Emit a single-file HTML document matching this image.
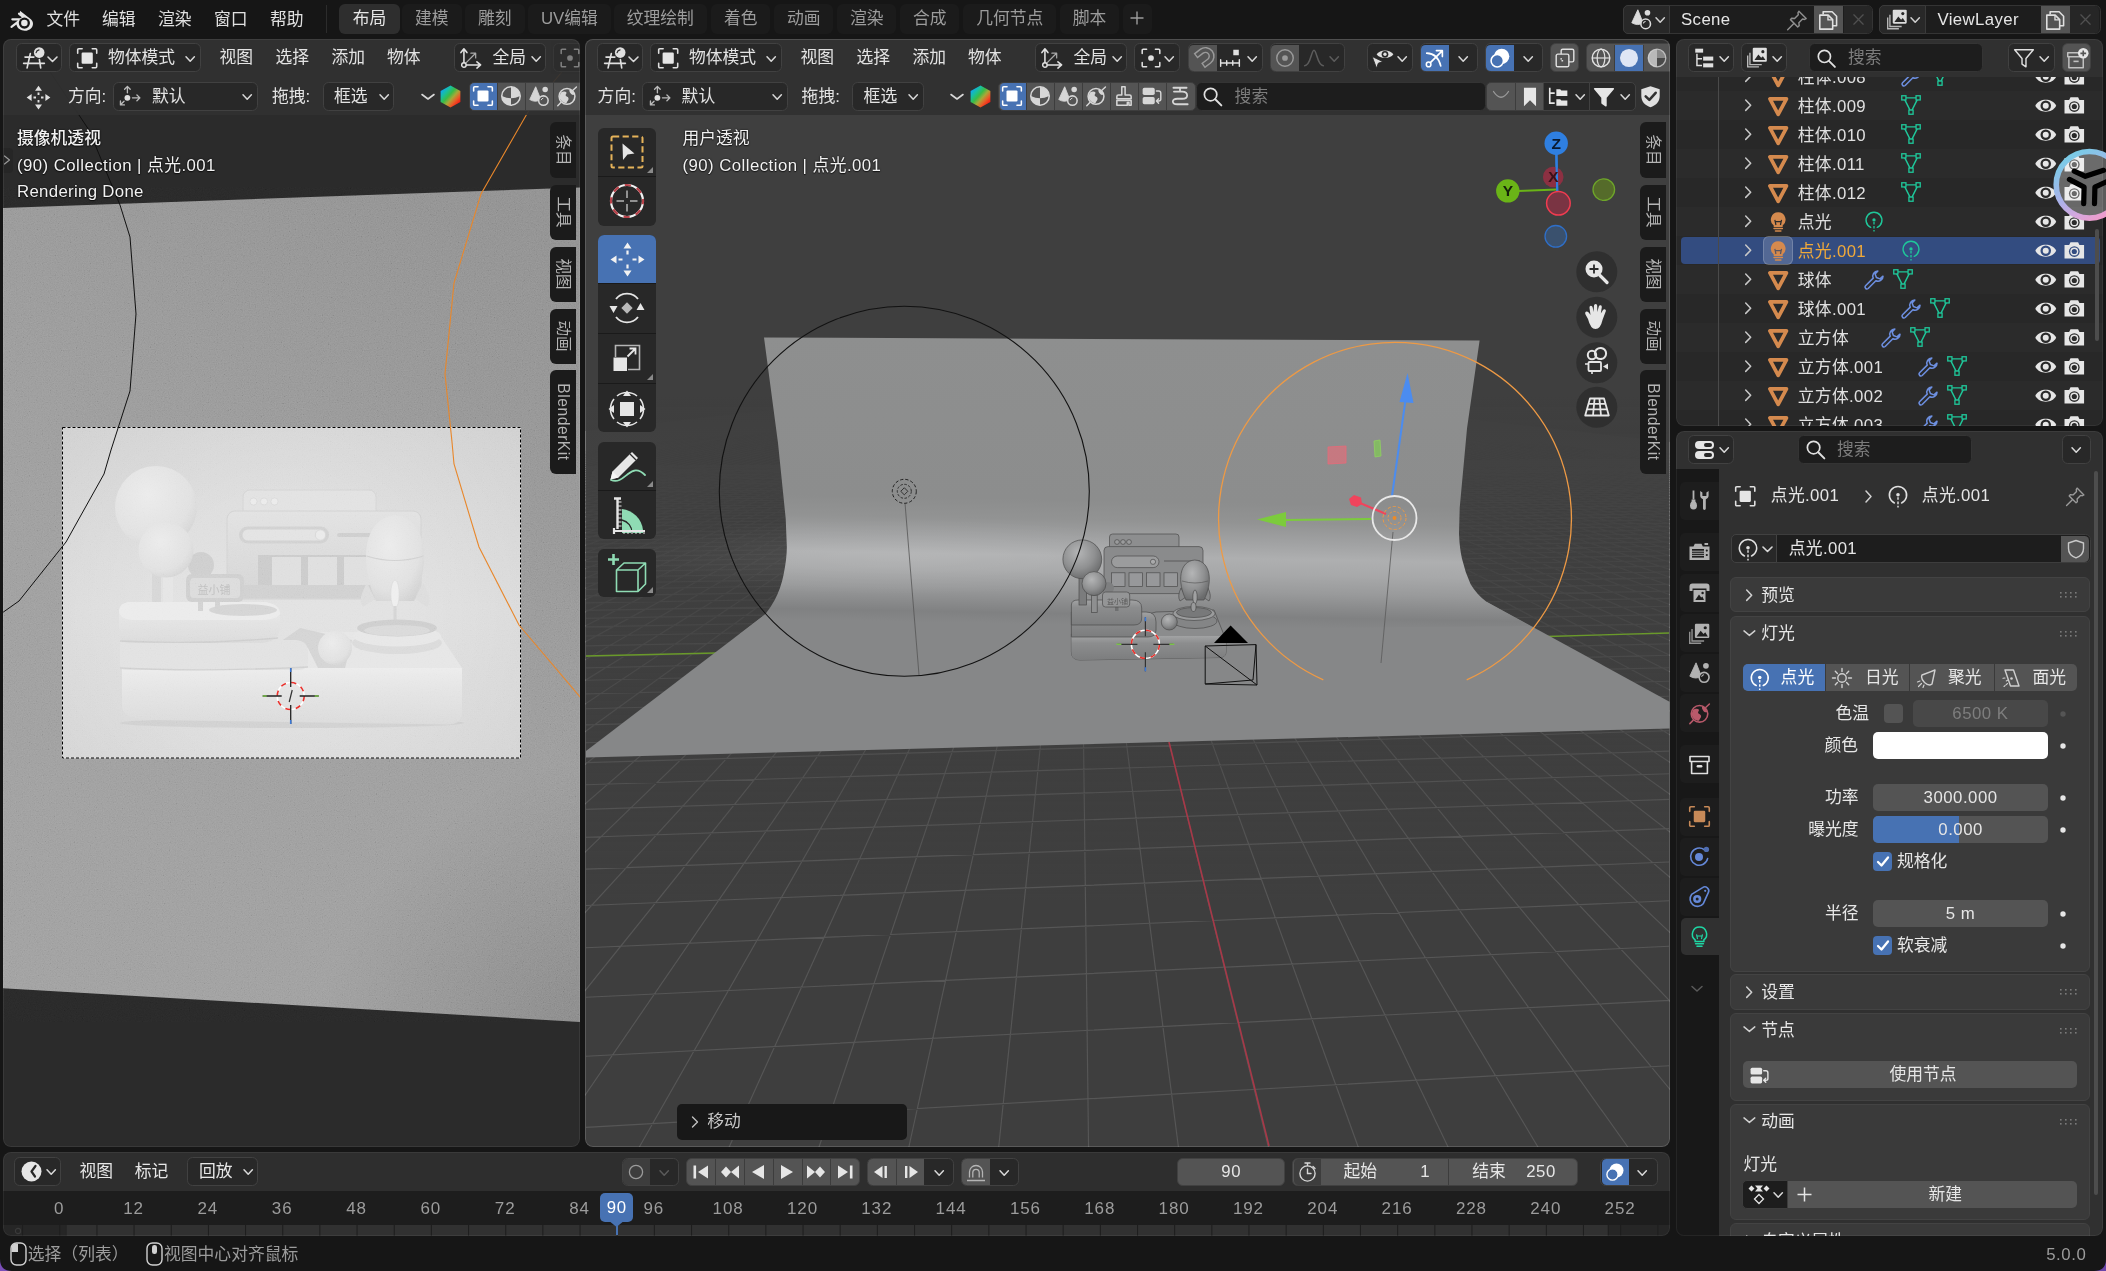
<!DOCTYPE html><html><head><meta charset="utf-8"><title>Blender</title><style>html,body{margin:0;padding:0;background:#161616;}
#root{position:relative;width:2106px;height:1271px;overflow:hidden;background:#161616;font-family:"Liberation Sans","Noto Sans CJK SC",sans-serif;}
#root div,#root span.t,#root svg{position:absolute;}
#root div{box-sizing:border-box;}
span.t{white-space:nowrap;}
#root{will-change:transform;}
svg{overflow:visible;}
</style></head><body><div id="root">
<svg style="left:7.5px;top:7.5px;" width="26" height="26" viewBox="0 0 20 20"><path d="M9.2 2.2 L17.6 8.6 C19.6 10.3 19.8 13.2 18 15.3 C15.8 17.8 11.6 18.2 8.8 16.2 C7.5 15.3 6.7 14 6.5 12.6 L3.2 15.2 C2.4 15.8 1.2 14.8 2.2 13.9 L7.6 9.6 L3.4 9.6 C2.2 9.6 2.2 7.9 3.4 7.9 L9.6 7.9 L10.6 7.1 L8 5.1 C7 4.3 8.2 3 9.2 3.8 Z" fill="#e6e6e6"/><circle cx="12.6" cy="11.6" r="4.3" fill="#161616"/><circle cx="12.6" cy="11.6" r="2.5" fill="#e6e6e6"/></svg>
<span class="t" style="left:46.5px;top:8.0px;line-height:24px;font-size:16.8px;color:#e0e0e0;">文件</span>
<span class="t" style="left:102px;top:8.0px;line-height:24px;font-size:16.8px;color:#e0e0e0;">编辑</span>
<span class="t" style="left:158px;top:8.0px;line-height:24px;font-size:16.8px;color:#e0e0e0;">渲染</span>
<span class="t" style="left:214px;top:8.0px;line-height:24px;font-size:16.8px;color:#e0e0e0;">窗口</span>
<span class="t" style="left:270px;top:8.0px;line-height:24px;font-size:16.8px;color:#e0e0e0;">帮助</span>
<div style="left:326.00px;top:5.00px;width:1.00px;height:28.00px;background:#2c2c2c;"></div>
<div style="left:339.00px;top:4.00px;width:61.00px;height:29.50px;background:#2e2e2e;border-radius:6px;"></div>
<span class="t" style="left:339px;width:61px;text-align:center;top:7.0px;line-height:24px;font-size:16.8px;color:#e6e6e6;">布局</span>
<div style="left:401.50px;top:4.00px;width:60.50px;height:29.50px;background:#1b1b1b;border-radius:6px 6px 6px 6px;"></div>
<span class="t" style="left:401.5px;width:60.5px;text-align:center;top:7.0px;line-height:24px;font-size:16.8px;color:#9c9c9c;">建模</span>
<div style="left:464.50px;top:4.00px;width:60.50px;height:29.50px;background:#1b1b1b;border-radius:6px 6px 6px 6px;"></div>
<span class="t" style="left:464.5px;width:60.5px;text-align:center;top:7.0px;line-height:24px;font-size:16.8px;color:#9c9c9c;">雕刻</span>
<div style="left:528.20px;top:4.00px;width:82.50px;height:29.50px;background:#1b1b1b;border-radius:6px 6px 6px 6px;"></div>
<span class="t" style="left:528.2px;width:82.5px;text-align:center;top:7.0px;line-height:24px;font-size:16.8px;color:#9c9c9c;">UV编辑</span>
<div style="left:613.80px;top:4.00px;width:93.00px;height:29.50px;background:#1b1b1b;border-radius:6px 6px 6px 6px;"></div>
<span class="t" style="left:613.8px;width:93.0px;text-align:center;top:7.0px;line-height:24px;font-size:16.8px;color:#9c9c9c;">纹理绘制</span>
<div style="left:711.30px;top:4.00px;width:59.00px;height:29.50px;background:#1b1b1b;border-radius:6px 6px 6px 6px;"></div>
<span class="t" style="left:711.3px;width:59.0px;text-align:center;top:7.0px;line-height:24px;font-size:16.8px;color:#9c9c9c;">着色</span>
<div style="left:774.30px;top:4.00px;width:59.00px;height:29.50px;background:#1b1b1b;border-radius:6px 6px 6px 6px;"></div>
<span class="t" style="left:774.3px;width:59.0px;text-align:center;top:7.0px;line-height:24px;font-size:16.8px;color:#9c9c9c;">动画</span>
<div style="left:837.30px;top:4.00px;width:59.00px;height:29.50px;background:#1b1b1b;border-radius:6px 6px 6px 6px;"></div>
<span class="t" style="left:837.3px;width:59.0px;text-align:center;top:7.0px;line-height:24px;font-size:16.8px;color:#9c9c9c;">渲染</span>
<div style="left:900.30px;top:4.00px;width:59.00px;height:29.50px;background:#1b1b1b;border-radius:6px 6px 6px 6px;"></div>
<span class="t" style="left:900.3px;width:59.0px;text-align:center;top:7.0px;line-height:24px;font-size:16.8px;color:#9c9c9c;">合成</span>
<div style="left:963.30px;top:4.00px;width:93.00px;height:29.50px;background:#1b1b1b;border-radius:6px 6px 6px 6px;"></div>
<span class="t" style="left:963.3px;width:93.0px;text-align:center;top:7.0px;line-height:24px;font-size:16.8px;color:#9c9c9c;">几何节点</span>
<div style="left:1060.00px;top:4.00px;width:59.00px;height:29.50px;background:#1b1b1b;border-radius:6px 6px 6px 6px;"></div>
<span class="t" style="left:1060px;width:59.0px;text-align:center;top:7.0px;line-height:24px;font-size:16.8px;color:#9c9c9c;">脚本</span>
<div style="left:1122.50px;top:4.00px;width:29.00px;height:29.50px;background:#1b1b1b;border-radius:6px;"></div>
<svg style="left:1130px;top:11px;" width="14" height="14" viewBox="0 0 14 14"><path d="M7 0.5 V13.5 M0.5 7 H13.5" stroke="#9c9c9c" stroke-width="1.4"/></svg>
<div style="left:1623.30px;top:4.80px;width:250.10px;height:29.40px;background:#1d1d1d;border-radius:5.7px;border:1px solid #343434;"></div>
<div style="left:1623.30px;top:4.80px;width:46.90px;height:29.40px;background:#282828;border-radius:5px 0 0 5px;border:1px solid #3a3a3a;"></div>
<svg style="left:1629.8px;top:8.3px;" width="22.4" height="22.4" viewBox="0 0 20 20"><path d="M7 1.6 L11.6 13.2 Q7 16.4 1.6 13.2 Z" fill="#dcdcdc" stroke="#dcdcdc" stroke-width="0.8" stroke-linejoin="round"/><circle cx="15.6" cy="4.2" r="2.5" fill="#dcdcdc"/><circle cx="14" cy="14.2" r="4.3" fill="#282828" stroke="#dcdcdc" stroke-width="1.4"/><path d="M12 13.4 A2.2 2.2 0 0 1 13.6 12" stroke="#dcdcdc" stroke-width="0.9" fill="none" stroke-linecap="round"/></svg>
<svg style="left:1654.8px;top:16.3px;" width="10.4" height="8.4" viewBox="0 0 10.4 8.4"><path d="M1 1.7000000000000002 L5.2 6.2 L9.4 1.7000000000000002" fill="none" stroke="#d0d0d0" stroke-width="1.5" stroke-linecap="round" stroke-linejoin="round"/></svg>
<span class="t" style="left:1681px;top:7.5px;line-height:24px;font-size:16.8px;color:#e6e6e6;letter-spacing:0.4px;">Scene</span>
<svg style="left:1786.3px;top:8.8px;" width="22.4" height="22.4" viewBox="0 0 20 20"><path d="M11.5 2 L18 8.5 L16.5 9.3 L14.8 9 L11.5 12.3 L11.8 15 L10.5 16 L4 9.5 L5 8.2 L7.7 8.5 L11 5.2 L10.7 3.5 Z" fill="none" stroke="#8f8f8f" stroke-width="1.3" stroke-linejoin="round"/><path d="M7 13 L1.5 18.5" stroke="#8f8f8f" stroke-width="1.3" stroke-linecap="round"/></svg>
<div style="left:1814.30px;top:6.00px;width:28.40px;height:27.00px;background:#545454;"></div>
<svg style="left:1817.3px;top:8.8px;" width="22.4" height="22.4" viewBox="0 0 20 20"><path d="M5.5 5 V2.5 H13.5 L17.5 6.5 V15 H14" stroke="#e0e0e0" stroke-width="1.4" fill="none" stroke-linejoin="round"/><path d="M2.5 5.5 H10 L14 9.5 V18 H2.5 Z" fill="none" stroke="#e0e0e0" stroke-width="1.4" stroke-linejoin="round"/><path d="M9.8 5.5 V9.7 H14" stroke="#e0e0e0" stroke-width="1.2" fill="none"/></svg>
<div style="left:1843.50px;top:6.00px;width:28.70px;height:27.00px;background:#262626;border-radius:0 4.5px 4.5px 0;"></div>
<svg style="left:1849.5px;top:11px;" width="17" height="17" viewBox="0 0 20 20"><path d="M4.5 4.5 L15.5 15.5 M15.5 4.5 L4.5 15.5" stroke="#505050" stroke-width="1.5" stroke-linecap="round"/></svg>
<div style="left:1879.30px;top:4.80px;width:221.40px;height:29.40px;background:#1d1d1d;border-radius:5.7px;border:1px solid #343434;"></div>
<div style="left:1879.30px;top:4.80px;width:46.90px;height:29.40px;background:#282828;border-radius:5px 0 0 5px;border:1px solid #3a3a3a;"></div>
<svg style="left:1885.8px;top:7.8px;" width="22.4" height="22.4" viewBox="0 0 20 20"><path d="M3.5 6 V16.5 H14 M1.5 8.5 V18.5 H11.5" stroke="#dcdcdc" stroke-width="1.2" fill="none" opacity="0.8"/><rect x="6" y="1.5" width="12.5" height="12.5" rx="1" fill="#dcdcdc"/><path d="M7.5 12.5 L11 7.5 L13.5 10.5 L15 9 L17.3 12.5 Z" fill="#282828"/><circle cx="15" cy="5" r="1.4" fill="#282828"/></svg>
<svg style="left:1910.3px;top:16.3px;" width="10.4" height="8.4" viewBox="0 0 10.4 8.4"><path d="M1 1.7000000000000002 L5.2 6.2 L9.4 1.7000000000000002" fill="none" stroke="#d0d0d0" stroke-width="1.5" stroke-linecap="round" stroke-linejoin="round"/></svg>
<span class="t" style="left:1937.4px;top:7.5px;line-height:24px;font-size:16.8px;color:#e6e6e6;letter-spacing:0.4px;">ViewLayer</span>
<div style="left:2041.00px;top:6.00px;width:28.60px;height:27.00px;background:#545454;"></div>
<svg style="left:2044.3px;top:8.8px;" width="22.4" height="22.4" viewBox="0 0 20 20"><path d="M5.5 5 V2.5 H13.5 L17.5 6.5 V15 H14" stroke="#e0e0e0" stroke-width="1.4" fill="none" stroke-linejoin="round"/><path d="M2.5 5.5 H10 L14 9.5 V18 H2.5 Z" fill="none" stroke="#e0e0e0" stroke-width="1.4" stroke-linejoin="round"/><path d="M9.8 5.5 V9.7 H14" stroke="#e0e0e0" stroke-width="1.2" fill="none"/></svg>
<div style="left:2070.40px;top:6.00px;width:29.10px;height:27.00px;background:#262626;border-radius:0 4.5px 4.5px 0;"></div>
<svg style="left:2076.5px;top:11px;" width="17" height="17" viewBox="0 0 20 20"><path d="M4.5 4.5 L15.5 15.5 M15.5 4.5 L4.5 15.5" stroke="#505050" stroke-width="1.5" stroke-linecap="round"/></svg>
<div style="left:3px;top:39px;width:577.1px;height:1108px;background:#2b2b2b;border-radius:8px;overflow:hidden;">
<svg style="left:-3px;top:-39px" width="2106" height="1271" viewBox="0 0 2106 1271"><defs><linearGradient id="lvg" gradientUnits="userSpaceOnUse" x1="20" y1="1000" x2="560" y2="230"><stop offset="0" stop-color="#a4a4a4"/><stop offset="0.45" stop-color="#a2a2a2"/><stop offset="0.75" stop-color="#9b9b9b"/><stop offset="1" stop-color="#959595"/></linearGradient><radialGradient id="lvd" gradientUnits="userSpaceOnUse" cx="640" cy="1080" r="330"><stop offset="0" stop-color="#000" stop-opacity="0.16"/><stop offset="1" stop-color="#000" stop-opacity="0"/></radialGradient><linearGradient id="lvf" x1="0" y1="0" x2="0" y2="1"><stop offset="0" stop-color="#dcdcdc"/><stop offset="0.55" stop-color="#e3e3e3"/><stop offset="1" stop-color="#dfdfdf"/></linearGradient><radialGradient id="sph" cx="0.4" cy="0.35" r="0.75"><stop offset="0" stop-color="#ececec"/><stop offset="0.7" stop-color="#e2e2e2"/><stop offset="1" stop-color="#d2d2d2"/></radialGradient><linearGradient id="plat" x1="0" y1="0" x2="0" y2="1"><stop offset="0" stop-color="#ededed"/><stop offset="0.35" stop-color="#e6e6e6"/><stop offset="1" stop-color="#dcdcdc"/></linearGradient><linearGradient id="win" x1="0" y1="0" x2="0" y2="1"><stop offset="0" stop-color="#e3e3e3"/><stop offset="1" stop-color="#d6d6d6"/></linearGradient></defs><polygon points="0,208 581,187.5 581,1022 0,988" fill="url(#lvg)"/><polygon points="0,208 581,187.5 581,1022 0,988" fill="url(#lvd)"/><rect x="62.5" y="427.5" width="458" height="330.5" fill="url(#lvf)"/><defs><radialGradient id="vig" gradientUnits="userSpaceOnUse" cx="285" cy="610" r="330"><stop offset="0.35" stop-color="#000" stop-opacity="0"/><stop offset="1" stop-color="#000" stop-opacity="0.055"/></radialGradient></defs><rect x="62.5" y="427.5" width="458" height="330.5" fill="url(#vig)"/><g><ellipse cx="292" cy="723" rx="172" ry="5" fill="#d0d0d0" opacity="0.8"/><rect x="243" y="490" width="133" height="40" rx="7" fill="#e3e3e3" stroke="#d6d6d6" stroke-width="1"/><circle cx="253.5" cy="501.5" r="3.6" fill="#ececec" stroke="#d9d9d9" stroke-width="0.8"/><circle cx="264" cy="501.5" r="3.6" fill="#ececec" stroke="#d9d9d9" stroke-width="0.8"/><circle cx="274.5" cy="501.5" r="3.6" fill="#ececec" stroke="#d9d9d9" stroke-width="0.8"/><rect x="227" y="511" width="194" height="88" rx="8" fill="url(#win)" stroke="#d4d4d4" stroke-width="1"/><rect x="239" y="526.5" width="90" height="17" rx="8.5" fill="#d3d3d3"/><rect x="242.5" y="529.5" width="83" height="11" rx="5.5" fill="#e4e4e4"/><circle cx="320.5" cy="535" r="5.2" fill="#ebebeb" stroke="#d6d6d6" stroke-width="0.8"/><rect x="337" y="533" width="60" height="4" rx="2" fill="#d0d0d0"/><rect x="258" y="555" width="120" height="32" fill="#cdcdcd"/><rect x="272" y="557" width="29" height="29" fill="#e0e0e0"/><rect x="308" y="557" width="29" height="29" fill="#e0e0e0"/><rect x="344" y="557" width="29" height="29" fill="#e0e0e0"/><rect x="236" y="585" width="180" height="13" fill="#d2d2d2"/><circle cx="201" cy="565" r="13" fill="#d0d0d0"/><rect x="152" y="572" width="9" height="32" fill="#d8d8d8"/><rect x="163" y="575" width="10" height="39" rx="3" fill="#e6e6e6"/><circle cx="156" cy="507" r="41" fill="url(#sph)"/><circle cx="166" cy="550" r="27.5" fill="url(#sph)"/><path d="M300 632 H438 L462 668 H300 Z" fill="#e7e7e7"/><path d="M122 668 H462 V712 Q462 724 448 724.5 L150 720 Q122 719 122 706 Z" fill="url(#plat)"/><path d="M280 642 L308 648 L318 668 L345 668 L352 640 L300 628 Z" fill="#d2d2d2" opacity="0.85"/><path d="M120 640 H296 Q308 641 308 652 V662 Q308 670 298 670 H126 Q120 670 120 664 Z" fill="#e3e3e3"/><path d="M120 668 Q200 672 308 667" stroke="#d2d2d2" stroke-width="1.3" fill="none"/><path d="M119 612 Q119 602 132 602 H262 Q280 603 280 616 V628 Q278 643 260 643 H130 Q119 643 119 634 Z" fill="url(#plat)"/><path d="M119 612 Q119 602 132 602 H262 Q280 603 280 614 Q276 620 258 620 H135 Q121 620 119 612 Z" fill="#ececec"/><path d="M120 641 Q200 645 278 638" stroke="#d0d0d0" stroke-width="1.3" fill="none"/><ellipse cx="243" cy="610" rx="34" ry="6" fill="#d6d6d6"/><rect x="198" y="600" width="5" height="11" fill="#d4d4d4"/><rect x="215" y="600" width="5" height="13" fill="#d4d4d4"/><rect x="186" y="574" width="58" height="28" rx="6" fill="#d1d1d1"/><rect x="190" y="578" width="50" height="20" rx="4" fill="#dddddd"/><text x="197.5" y="594" font-size="11" fill="#c2c2c2" font-family='"Liberation Sans","Noto Sans CJK SC",sans-serif'>益小铺</text><path d="M367 583 Q357 600 363 607 L375 599 Z" fill="#dedede"/><path d="M423 583 Q433 600 427 607 L415 599 Z" fill="#dedede"/><path d="M395 515 C426 518 432 560 414 601 L376 601 C358 560 364 518 395 515 Z" fill="url(#sph)"/><path d="M366.5 556 Q395 565 423.5 556" stroke="#d2d2d2" stroke-width="1.2" fill="none"/><ellipse cx="395" cy="594" rx="4.2" ry="14" fill="#efefef" stroke="#dadada" stroke-width="0.7"/><rect x="393.5" y="606" width="3" height="18" fill="#d6d6d6"/><ellipse cx="397" cy="643" rx="45" ry="11" fill="#dcdcdc"/><ellipse cx="397" cy="636" rx="44" ry="10.5" fill="#e8e8e8"/><ellipse cx="397" cy="628" rx="40" ry="8.5" fill="#d0d0d0"/><ellipse cx="397" cy="630.5" rx="33" ry="5.5" fill="#dbdbdb"/><circle cx="335" cy="648" r="17" fill="url(#sph)"/></g><defs><filter id="grain" x="0" y="0" width="100%" height="100%"><feTurbulence type="fractalNoise" baseFrequency="0.85" numOctaves="2" seed="7" result="n"/><feColorMatrix type="matrix" values="0.33 0.33 0.33 0 -0.28  0.33 0.33 0.33 0 -0.28  0.33 0.33 0.33 0 -0.28  0 0 0 0 1"/></filter></defs><polygon points="0,208 581,187.5 581,1022 0,988" filter="url(#grain)" opacity="0.16" style="mix-blend-mode:overlay"/><rect x="62.5" y="427.5" width="458" height="330.5" fill="none" stroke="#ffffff" stroke-width="1" opacity="0.5"/><rect x="62.5" y="427.5" width="458" height="330.5" fill="none" stroke="#000" stroke-width="1" stroke-dasharray="3 2"/><path d="M28 39 L89 130 L120 205 L130 237 L136 314 L130 391 L111 450 L104 474 L66 542 L19 601 L2 613" fill="none" stroke="#111" stroke-width="1"/><path d="M575 52 L561 73 L528 112 L481 194 L454 283 L445 374 L452 442 L454 464 L479 547 L519 625 L581 698" fill="none" stroke="#e8872b" stroke-width="1.1"/><g><circle cx="290.7" cy="696" r="13.5" fill="none" stroke="#fff" stroke-width="1.6"/><circle cx="290.7" cy="696" r="13.5" fill="none" stroke="#e8302b" stroke-width="1.6" stroke-dasharray="5.3 5.3"/><path d="M262.7 696 H281.7 M299.7 696 H318.7 M290.7 668 V687 M290.7 705 V724" stroke="#222" stroke-width="1.3"/><path d="M262.7 696 h4 M314.7 696 h4" stroke="#7bc24a" stroke-width="1.5"/><path d="M290.7 668 v4 M290.7 720 v4" stroke="#3b78d6" stroke-width="1.5"/><path d="M292.2 690 L289.2 702" stroke="#333" stroke-width="1.2"/></g></svg>
<div style="left:0;top:0;width:577.1px;height:75.6px;background:rgba(48,48,48,0.93);"></div>
<div style="left:-3px;top:-39px;width:0;height:0">
<div style="left:15.90px;top:43.30px;width:45.90px;height:28.90px;background:#282828;border-radius:5.7px;border:1px solid #414141;"></div>
<svg style="left:23px;top:47px;" width="22" height="22" viewBox="0 0 20 20"><path d="M1.82 9.18 L9.91 9.18 M0.55 14.82 L19.45 14.82 M6.64 6.00 L3.73 19.00 M14.91 11.45 L16.09 19.00" stroke="#e0e0e0" stroke-width="1.5" fill="none" stroke-linecap="round"/><circle cx="14.73" cy="5.09" r="4.82" fill="#e0e0e0"/><path d="M11.91 5.18 Q12.36 3.09 14.55 2.64" stroke="#2b2b2b" stroke-width="1.1" fill="none" stroke-linecap="round"/></svg>
<svg style="left:46.9px;top:54.5px;" width="11.0" height="9.0" viewBox="0 0 11.0 9.0"><path d="M1 2.0 L5.5 6.5 L10.0 2.0" fill="none" stroke="#d8d8d8" stroke-width="1.6" stroke-linecap="round" stroke-linejoin="round"/></svg>
<div style="left:68.80px;top:43.30px;width:132.40px;height:28.90px;background:#282828;border-radius:5.7px;border:1px solid #414141;"></div>
<svg style="left:75.8px;top:46.8px;" width="22.4" height="22.4" viewBox="0 0 20 20"><path d="M1.5 5.5 V2.5 Q1.5 1.5 2.5 1.5 H5.5 M14.5 1.5 H17.5 Q18.5 1.5 18.5 2.5 V5.5 M18.5 14.5 V17.5 Q18.5 18.5 17.5 18.5 H14.5 M5.5 18.5 H2.5 Q1.5 18.5 1.5 17.5 V14.5" stroke="#e0e0e0" stroke-width="1.4" fill="none" stroke-linecap="round"/><rect x="5" y="5" width="10" height="10" rx="1" fill="#e6e6e6"/></svg>
<span class="t" style="left:108px;top:46.0px;line-height:24px;font-size:16.8px;color:#e3e3e3;">物体模式</span>
<svg style="left:185.3px;top:54.8px;" width="10.4" height="8.4" viewBox="0 0 10.4 8.4"><path d="M1 1.7000000000000002 L5.2 6.2 L9.4 1.7000000000000002" fill="none" stroke="#d8d8d8" stroke-width="1.5" stroke-linecap="round" stroke-linejoin="round"/></svg>
<span class="t" style="left:219.5px;top:46.0px;line-height:24px;font-size:16.8px;color:#e3e3e3;">视图</span>
<span class="t" style="left:275.5px;top:46.0px;line-height:24px;font-size:16.8px;color:#e3e3e3;">选择</span>
<span class="t" style="left:331.5px;top:46.0px;line-height:24px;font-size:16.8px;color:#e3e3e3;">添加</span>
<span class="t" style="left:387px;top:46.0px;line-height:24px;font-size:16.8px;color:#e3e3e3;">物体</span>
<div style="left:453.80px;top:43.30px;width:92.40px;height:28.90px;background:#282828;border-radius:5.7px;border:1px solid #414141;"></div>
<svg style="left:459.3px;top:46.8px;" width="22.4" height="22.4" viewBox="0 0 20 20"><circle cx="4.4" cy="16" r="2" fill="none" stroke="#e0e0e0" stroke-width="1.3"/><path d="M4.4 13.8 V2 M1.7 5 L4.4 1.6 L7.1 5 M6.6 16 H19 M16 13.2 L19.3 16 L16 18.8" stroke="#e0e0e0" stroke-width="1.4" fill="none" stroke-linecap="round" stroke-linejoin="round"/><path d="M6 14.4 L14.6 5.8 M10.6 5.5 H14.9 V9.8" stroke="#e0e0e0" stroke-width="1.1" fill="none" stroke-linecap="round" stroke-linejoin="round" opacity="0.7"/></svg>
<span class="t" style="left:492.5px;top:46.0px;line-height:24px;font-size:16.8px;color:#e3e3e3;">全局</span>
<svg style="left:530.8px;top:54.8px;" width="10.4" height="8.4" viewBox="0 0 10.4 8.4"><path d="M1 1.7000000000000002 L5.2 6.2 L9.4 1.7000000000000002" fill="none" stroke="#d8d8d8" stroke-width="1.5" stroke-linecap="round" stroke-linejoin="round"/></svg>
<div style="left:552.80px;top:43.30px;width:45.90px;height:28.90px;background:#282828;border-radius:5.7px;border:1px solid #414141;"></div>
<svg style="left:558.5px;top:47px;" width="22" height="22" viewBox="0 0 20 20"><path d="M2 6 V3 Q2 2 3 2 H6 M14 2 H17 Q18 2 18 3 V6 M18 14 V17 Q18 18 17 18 H14 M6 18 H3 Q2 18 2 17 V14" stroke="#e0e0e0" stroke-width="1.4" fill="none" stroke-linecap="round"/><circle cx="10" cy="10" r="2.6" fill="#e0e0e0"/></svg>
<svg style="left:583.3px;top:54.8px;" width="10.4" height="8.4" viewBox="0 0 10.4 8.4"><path d="M1 1.7000000000000002 L5.2 6.2 L9.4 1.7000000000000002" fill="none" stroke="#d8d8d8" stroke-width="1.5" stroke-linecap="round" stroke-linejoin="round"/></svg>
<div style="left:551.00px;top:41.00px;width:30.00px;height:33.00px;background:rgba(48,48,48,0.55);"></div>
<svg style="left:26px;top:84.5px;" width="25" height="25" viewBox="0 0 20 20"><path d="M10 0.5 L12.8 4.5 H7.2 Z M10 19.5 L12.8 15.5 H7.2 Z M0.5 10 L4.5 7.2 V12.8 Z M19.5 10 L15.5 7.2 V12.8 Z" fill="#e0e0e0"/><path d="M10 6 V8 M10 12 V14 M6 10 H8 M12 10 H14" stroke="#e0e0e0" stroke-width="1.5"/></svg>
<span class="t" style="left:68px;top:84.5px;line-height:24px;font-size:16.8px;color:#e3e3e3;">方向:</span>
<div style="left:112.80px;top:82.10px;width:145.40px;height:28.90px;background:#282828;border-radius:5.7px;border:1px solid #414141;"></div>
<svg style="left:119.3px;top:85.3px;" width="22.4" height="22.4" viewBox="0 0 20 20"><circle cx="7.5" cy="11.5" r="2.6" fill="#e0e0e0"/><path d="M7.5 7 V1.5 M5 3.8 L7.5 1.2 L10 3.8 M12 11.5 H18.5 M16 9 L18.7 11.5 L16 14 M4.5 14.5 L1.5 17.5 M1.3 14.3 V17.8 H4.8" stroke="#e0e0e0" stroke-width="1.2" fill="none" stroke-linecap="round" stroke-linejoin="round" opacity="0.8"/></svg>
<span class="t" style="left:152px;top:84.5px;line-height:24px;font-size:16.8px;color:#e3e3e3;">默认</span>
<svg style="left:242.3px;top:93.3px;" width="10.4" height="8.4" viewBox="0 0 10.4 8.4"><path d="M1 1.7000000000000002 L5.2 6.2 L9.4 1.7000000000000002" fill="none" stroke="#d8d8d8" stroke-width="1.5" stroke-linecap="round" stroke-linejoin="round"/></svg>
<span class="t" style="left:272px;top:84.5px;line-height:24px;font-size:16.8px;color:#e3e3e3;">拖拽:</span>
<div style="left:322.80px;top:82.10px;width:71.40px;height:28.90px;background:#282828;border-radius:5.7px;border:1px solid #414141;"></div>
<span class="t" style="left:334px;top:84.5px;line-height:24px;font-size:16.8px;color:#e3e3e3;">框选</span>
<svg style="left:378.8px;top:93.3px;" width="10.4" height="8.4" viewBox="0 0 10.4 8.4"><path d="M1 1.7000000000000002 L5.2 6.2 L9.4 1.7000000000000002" fill="none" stroke="#d8d8d8" stroke-width="1.5" stroke-linecap="round" stroke-linejoin="round"/></svg>
<svg style="left:420.5px;top:90.5px;" width="14" height="12" viewBox="0 0 14 12"><path d="M1 3.5 L7 8 L13 3.5" fill="none" stroke="#d8d8d8" stroke-width="1.6" stroke-linecap="round" stroke-linejoin="round"/></svg>
<svg style="left:439px;top:85px;" width="23" height="23" viewBox="0 0 20 20"><defs><linearGradient id="hx1" x1="0.12" y1="0.12" x2="0.88" y2="0.88"><stop offset="0" stop-color="#10a4f4"/><stop offset="0.22" stop-color="#18c0a0"/><stop offset="0.42" stop-color="#38bc48"/><stop offset="0.6" stop-color="#a8a838"/><stop offset="0.78" stop-color="#e86028"/><stop offset="1" stop-color="#fa1414"/></linearGradient></defs><path d="M10 0.4 L18.6 5.2 V14.8 L10 19.6 L1.4 14.8 V5.2 Z" fill="url(#hx1)"/></svg>
<div style="left:468.80px;top:82.10px;width:113.40px;height:28.90px;background:#545454;border-radius:5px 0 0 5px;border:1px solid #3d3d3d;"></div>
<div style="left:470.00px;top:83.30px;width:27.50px;height:26.50px;background:#4772b3;border-radius:4.5px 0 0 4.5px;"></div>
<svg style="left:471.5px;top:85px;" width="22" height="22" viewBox="0 0 20 20"><path d="M1.5 5.5 V2.5 Q1.5 1.5 2.5 1.5 H5.5 M14.5 1.5 H17.5 Q18.5 1.5 18.5 2.5 V5.5 M18.5 14.5 V17.5 Q18.5 18.5 17.5 18.5 H14.5 M5.5 18.5 H2.5 Q1.5 18.5 1.5 17.5 V14.5" stroke="#fff" stroke-width="1.4" fill="none" stroke-linecap="round"/><rect x="5" y="5" width="10" height="10" rx="1" fill="#fff"/></svg>
<div style="left:496.70px;top:83.30px;width:0.90px;height:26.50px;background:#3d3d3d;"></div>
<svg style="left:499.5px;top:85px;" width="22" height="22" viewBox="0 0 20 20"><circle cx="10" cy="10" r="8.4" fill="#545454" stroke="#d6d6d6" stroke-width="1.4"/><path d="M10 1.6 A8.4 8.4 0 0 1 18.4 10 Q14 12 10 12 Z M10 12 Q6 12 1.6 10 A8.4 8.4 0 0 0 10 18.4 Z" fill="#d6d6d6"/></svg>
<div style="left:524.70px;top:83.30px;width:0.90px;height:26.50px;background:#3d3d3d;"></div>
<svg style="left:527.5px;top:85px;" width="22" height="22" viewBox="0 0 20 20"><path d="M7 1.6 L11.6 13.2 Q7 16.4 1.6 13.2 Z" fill="#d6d6d6" stroke="#d6d6d6" stroke-width="0.8" stroke-linejoin="round"/><circle cx="15.6" cy="4.2" r="2.5" fill="#d6d6d6"/><circle cx="14" cy="14.2" r="4.3" fill="#545454" stroke="#d6d6d6" stroke-width="1.4"/><path d="M12 13.4 A2.2 2.2 0 0 1 13.6 12" stroke="#d6d6d6" stroke-width="0.9" fill="none" stroke-linecap="round"/></svg>
<div style="left:552.70px;top:83.30px;width:0.90px;height:26.50px;background:#3d3d3d;"></div>
<svg style="left:555.5px;top:85px;" width="22" height="22" viewBox="0 0 20 20"><circle cx="10" cy="10.3" r="7.2" fill="none" stroke="#d6d6d6" stroke-width="1.4"/><path d="M4.2 7 C6 5.6 8.6 5.4 9.4 6.6 C10 7.8 8.4 8.4 8.8 9.6 C9.3 10.8 11.2 10.6 11.4 12.2 C11.6 14 10 14.4 9.6 16.4 C6.5 16.6 3.4 13.6 3.2 10.4 Z M12.4 3.8 C14.6 4.4 16.4 6.4 16.8 8.6 C15.6 9.4 14.2 9 13.4 7.8 C12.6 6.6 11.6 5.4 12.4 3.8 Z" fill="#d6d6d6"/><path d="M15.6 4.6 L18.6 1.8 M4.4 16 L1.6 18.8" stroke="#d6d6d6" stroke-width="1.3" stroke-linecap="round"/></svg>
<span class="t" style="left:17px;top:126.5px;line-height:24px;font-size:16.8px;color:#f2f2f2;text-shadow:0 0 2px rgba(0,0,0,0.85),0 1px 1px rgba(0,0,0,0.6);font-weight:500;">摄像机透视</span>
<span class="t" style="left:17px;top:154.0px;line-height:24px;font-size:16.8px;color:#f2f2f2;text-shadow:0 0 2px rgba(0,0,0,0.85),0 1px 1px rgba(0,0,0,0.6);letter-spacing:0.45px;">(90) Collection | 点光.001</span>
<span class="t" style="left:17px;top:180.0px;line-height:24px;font-size:16.8px;color:#f2f2f2;text-shadow:0 0 2px rgba(0,0,0,0.85),0 1px 1px rgba(0,0,0,0.6);letter-spacing:0.32px;">Rendering Done</span>
<div style="left:550.00px;top:121.50px;width:26.00px;height:56.00px;background:#1b1b1b;border-radius:6px 0 0 6px;"></div>
<span class="t" style="left:563px;top:149.5px;font-size:15.6px;color:#b4b4b4;line-height:20px;transform:translate(-50%,-50%) rotate(90deg);">条目</span>
<div style="left:550.00px;top:184.50px;width:26.00px;height:55.00px;background:#1b1b1b;border-radius:6px 0 0 6px;"></div>
<span class="t" style="left:563px;top:212.0px;font-size:15.6px;color:#b4b4b4;line-height:20px;transform:translate(-50%,-50%) rotate(90deg);">工具</span>
<div style="left:550.00px;top:246.50px;width:26.00px;height:55.00px;background:#1b1b1b;border-radius:6px 0 0 6px;"></div>
<span class="t" style="left:563px;top:274.0px;font-size:15.6px;color:#b4b4b4;line-height:20px;transform:translate(-50%,-50%) rotate(90deg);">视图</span>
<div style="left:550.00px;top:308.50px;width:26.00px;height:55.30px;background:#1b1b1b;border-radius:6px 0 0 6px;"></div>
<span class="t" style="left:563px;top:336.15px;font-size:15.6px;color:#b4b4b4;line-height:20px;transform:translate(-50%,-50%) rotate(90deg);">动画</span>
<div style="left:550.00px;top:370.20px;width:26.00px;height:103.40px;background:#1b1b1b;border-radius:6px 0 0 6px;"></div>
<span class="t" style="left:563px;top:421.9px;font-size:15.6px;color:#b4b4b4;line-height:20px;transform:translate(-50%,-50%) rotate(90deg);letter-spacing:0.55px;">BlenderKit</span>
<div style="left:3.00px;top:148.00px;width:10.00px;height:25.00px;background:#262626;border-radius:0 4px 4px 0;"></div>
<svg style="left:3px;top:155px;" width="8" height="10" viewBox="0 0 8 10"><path d="M1.5 1 L6.5 5 L1.5 9" fill="none" stroke="#9a9a9a" stroke-width="1.2" stroke-linecap="round" stroke-linejoin="round"/></svg>
</div>
<div style="left:0;top:0;width:577.1px;height:1108px;border-radius:8px;box-shadow:inset 0 0 0 1px rgba(255,255,255,0.07);"></div>
</div>
<div style="left:584.8px;top:39px;width:1085.3px;height:1108px;background:#3f3f3f;border-radius:8px;overflow:hidden;">
<svg style="left:-584.8px;top:-39px" width="2106" height="1271" viewBox="0 0 2106 1271"><defs><linearGradient id="wall" gradientUnits="userSpaceOnUse" x1="1100" y1="338" x2="1095" y2="625"><stop offset="0" stop-color="#8e8f8f"/><stop offset="0.565" stop-color="#8c8d8d"/><stop offset="0.634" stop-color="#929393"/><stop offset="0.704" stop-color="#a1a2a3"/><stop offset="0.76" stop-color="#aeafb0"/><stop offset="0.815" stop-color="#a7a8a9"/><stop offset="0.878" stop-color="#999a9b"/><stop offset="0.927" stop-color="#8a8b8c"/><stop offset="0.962" stop-color="#808182"/><stop offset="1" stop-color="#868788"/></linearGradient><radialGradient id="gs" cx="0.4" cy="0.33" r="0.7"><stop offset="0" stop-color="#b4b5b6"/><stop offset="0.6" stop-color="#8f9091"/><stop offset="1" stop-color="#6a6b6c"/></radialGradient><linearGradient id="gp" x1="0" y1="0" x2="0" y2="1"><stop offset="0" stop-color="#a2a3a4"/><stop offset="0.3" stop-color="#8c8d8e"/><stop offset="1" stop-color="#7c7d7e"/></linearGradient></defs><path d="M586 1127.4 L1669 1065.8 M586 1056.2 L1669 1000.4 M586 997.3 L1669 946.3 M586 947.7 L1669 900.8 M586 905.5 L1669 862.0 M586 869.1 L1669 828.6 M586 837.3 L1669 799.4 M586 809.4 L1669 773.8 M586 784.7 L1669 751.1 M586 762.6 L1669 730.8 M586 742.8 L1669 712.6 M586 724.9 L1669 696.2 M586 708.7 L1669 681.3 M586 693.9 L1669 667.7 M586 680.3 L1669 655.3 M586 667.9 L1669 643.9 M586 656.5 L1669 633.4 M586 645.9 L1669 623.7 M586 636.0 L1669 614.6 M586 626.9 L1669 606.2 M586 618.4 L1669 598.4 M586 610.4 L1669 591.1 M586 602.9 L1669 584.3 M586 595.9 L1669 577.8 M586 589.4 L1669 571.8 M586 583.2 L1669 566.1 M586 577.3 L1669 560.7 M586 571.8 L1669 555.6 M586 566.5 L1669 550.8 M586 561.6 L1669 546.3 M586 556.9 L1669 541.9 M586 552.4 L1669 537.8 M586 548.1 L1669 533.9 M586 544.0 L1669 530.2 M586 540.2 L1669 526.6 M586 536.4 L1669 523.2 M586 532.9 L1669 520.0 M586 529.5 L1669 516.8 M586 526.3 L1669 513.9 M586 523.1 L1669 511.0 M586 520.2 L1669 508.3 M586 517.3 L1669 505.6 M586 514.5 L1669 503.1 M586 511.9 L1669 500.7 M586 509.3 L1669 498.3 M586 506.9 L1669 496.0 M586 504.5 L1669 493.9 M586 502.2 L1669 491.8 M586 500.0 L1669 489.7 M586 497.9 L1669 487.8 M586 495.8 L1669 485.9 M586 493.8 L1669 484.1 M586 491.9 L1669 482.3 M586 490.0 L1669 480.6 M586 488.2 L1669 478.9 M586 486.4 L1669 477.3 M586 484.7 L1669 475.7 M586 483.1 L1669 474.2 M586 481.5 L1669 472.8 M586 479.9 L1669 471.3 M586 478.4 L1669 469.9 M586 477.0 L1669 468.6 M586 475.5 L1669 467.3 M586 474.1 L1669 466.0 M586 472.8 L1669 464.8 M586 471.5 L1669 463.6 M586 470.2 L1669 462.4 M586 469.0 L1669 461.3 M586 467.8 L1669 460.2 M586 466.6 L1669 459.1 M904.6 395 L-5677.2 1150 M907.0 395 L-5587.0 1150 M909.3 395 L-5496.8 1150 M911.6 395 L-5406.6 1150 M914.0 395 L-5316.4 1150 M916.3 395 L-5226.2 1150 M918.6 395 L-5136.0 1150 M920.9 395 L-5045.8 1150 M923.3 395 L-4955.5 1150 M925.6 395 L-4865.3 1150 M927.9 395 L-4775.1 1150 M930.3 395 L-4684.9 1150 M932.6 395 L-4594.7 1150 M934.9 395 L-4504.5 1150 M937.2 395 L-4414.3 1150 M939.6 395 L-4324.1 1150 M941.9 395 L-4233.9 1150 M944.2 395 L-4143.6 1150 M946.6 395 L-4053.4 1150 M948.9 395 L-3963.2 1150 M951.2 395 L-3873.0 1150 M953.5 395 L-3782.8 1150 M955.9 395 L-3692.6 1150 M958.2 395 L-3602.4 1150 M960.5 395 L-3512.2 1150 M962.8 395 L-3421.9 1150 M965.2 395 L-3331.7 1150 M967.5 395 L-3241.5 1150 M969.8 395 L-3151.3 1150 M972.2 395 L-3061.1 1150 M974.5 395 L-2970.9 1150 M976.8 395 L-2880.7 1150 M979.1 395 L-2790.5 1150 M981.5 395 L-2700.3 1150 M983.8 395 L-2610.0 1150 M986.1 395 L-2519.8 1150 M988.5 395 L-2429.6 1150 M990.8 395 L-2339.4 1150 M993.1 395 L-2249.2 1150 M995.4 395 L-2159.0 1150 M997.8 395 L-2068.8 1150 M1000.1 395 L-1978.6 1150 M1002.4 395 L-1888.3 1150 M1004.8 395 L-1798.1 1150 M1007.1 395 L-1707.9 1150 M1009.4 395 L-1617.7 1150 M1011.7 395 L-1527.5 1150 M1014.1 395 L-1437.3 1150 M1016.4 395 L-1347.1 1150 M1018.7 395 L-1256.9 1150 M1021.0 395 L-1166.7 1150 M1023.4 395 L-1076.4 1150 M1025.7 395 L-986.2 1150 M1028.0 395 L-896.0 1150 M1030.4 395 L-805.8 1150 M1032.7 395 L-715.6 1150 M1035.0 395 L-625.4 1150 M1037.3 395 L-535.2 1150 M1039.7 395 L-445.0 1150 M1042.0 395 L-354.8 1150 M1044.3 395 L-264.5 1150 M1046.7 395 L-174.3 1150 M1049.0 395 L-84.1 1150 M1051.3 395 L6.1 1150 M1053.6 395 L96.3 1150 M1056.0 395 L186.5 1150 M1058.3 395 L276.7 1150 M1060.6 395 L366.9 1150 M1063.0 395 L457.2 1150 M1065.3 395 L547.4 1150 M1067.6 395 L637.6 1150 M1069.9 395 L727.8 1150 M1072.3 395 L818.0 1150 M1074.6 395 L908.2 1150 M1076.9 395 L998.4 1150 M1079.2 395 L1088.6 1150 M1081.6 395 L1178.8 1150 M1083.9 395 L1269.1 1150 M1086.2 395 L1359.3 1150 M1088.6 395 L1449.5 1150 M1090.9 395 L1539.7 1150 M1093.2 395 L1629.9 1150 M1095.5 395 L1720.1 1150 M1097.9 395 L1810.3 1150 M1100.2 395 L1900.5 1150 M1102.5 395 L1990.8 1150 M1104.9 395 L2081.0 1150 M1107.2 395 L2171.2 1150 M1109.5 395 L2261.4 1150 M1111.8 395 L2351.6 1150 M1114.2 395 L2441.8 1150 M1116.5 395 L2532.0 1150 M1118.8 395 L2622.2 1150 M1121.2 395 L2712.4 1150 M1123.5 395 L2802.7 1150 M1125.8 395 L2892.9 1150 M1128.1 395 L2983.1 1150 M1130.5 395 L3073.3 1150 M1132.8 395 L3163.5 1150 M1135.1 395 L3253.7 1150 M1137.4 395 L3343.9 1150 M1139.8 395 L3434.1 1150 M1142.1 395 L3524.4 1150 M1144.4 395 L3614.6 1150 M1146.8 395 L3704.8 1150 M1149.1 395 L3795.0 1150 M1151.4 395 L3885.2 1150 M1153.7 395 L3975.4 1150 M1156.1 395 L4065.6 1150 M1158.4 395 L4155.8 1150 M1160.7 395 L4246.0 1150 M1163.1 395 L4336.3 1150 M1165.4 395 L4426.5 1150 M1167.7 395 L4516.7 1150 M1170.0 395 L4606.9 1150 M1172.4 395 L4697.1 1150 M1174.7 395 L4787.3 1150 M1177.0 395 L4877.5 1150 M1179.4 395 L4967.7 1150 M1181.7 395 L5057.9 1150 M1184.0 395 L5148.2 1150 M1186.3 395 L5238.4 1150 M1188.7 395 L5328.6 1150 M1191.0 395 L5418.8 1150 M1193.3 395 L5509.0 1150 M1195.7 395 L5599.2 1150 M1198.0 395 L5689.4 1150 M1200.3 395 L5779.6 1150 M1202.6 395 L5869.9 1150 M1205.0 395 L5960.1 1150 M1207.3 395 L6050.3 1150 M1209.6 395 L6140.5 1150 M1211.9 395 L6230.7 1150 M1214.3 395 L6320.9 1150 M1216.6 395 L6411.1 1150 M1218.9 395 L6501.3 1150 M1221.3 395 L6591.5 1150 M1223.6 395 L6681.8 1150 M1225.9 395 L6772.0 1150 M1228.2 395 L6862.2 1150 M1230.6 395 L6952.4 1150 M1232.9 395 L7042.6 1150 M1235.2 395 L7132.8 1150 M1237.6 395 L7223.0 1150 M1239.9 395 L7313.2 1150 M1242.2 395 L7403.5 1150 M1244.5 395 L7493.7 1150 M1246.9 395 L7583.9 1150 M1249.2 395 L7674.1 1150 M1251.5 395 L7764.3 1150 M1253.9 395 L7854.5 1150" stroke="#5c5c5c" stroke-width="1.15" fill="none"/><defs><linearGradient id="fade" gradientUnits="userSpaceOnUse" x1="0" y1="395" x2="0" y2="900"><stop offset="0" stop-color="#3f3f3f" stop-opacity="1"/><stop offset="0.12" stop-color="#3f3f3f" stop-opacity="0.93"/><stop offset="0.45" stop-color="#3f3f3f" stop-opacity="0.72"/><stop offset="0.75" stop-color="#3f3f3f" stop-opacity="0.38"/><stop offset="1" stop-color="#3f3f3f" stop-opacity="0.18"/></linearGradient></defs><rect x="586" y="380" width="1083" height="520" fill="url(#fade)"/><rect x="586" y="900" width="1083" height="250" fill="#3f3f3f" fill-opacity="0.18"/><path d="M586 656 L716 653" stroke="#6a9a2a" stroke-width="1.3"/><path d="M1548 636.5 L1669 633" stroke="#6a9a2a" stroke-width="1.3"/><path d="M1169 742 L1269 1146" stroke="#a83848" stroke-width="1.6"/><path d="M586 751 L765.3 614.3 L1487 602 L1669.5 701.7 L1669.5 728.5 L586 757.5 Z" fill="#868788"/><path d="M764 337.5 L1479.6 340.5 L1467 428.5 L1459.7 508 L1459 533.5 Q1459.5 548 1462 558.8 Q1465 572 1470.5 584 Q1477 595 1486.8 602 L1530 626 L740 634 L765.3 614.3 Q771 607 774.7 600 Q781 588 783.5 575 Q787.5 555 786.7 543.6 L785.7 518.4 L778 443 Z" fill="url(#wall)"/><defs><radialGradient id="bandhl" cx="0.5" cy="0.5" r="0.5"><stop offset="0" stop-color="#fff" stop-opacity="0.09"/><stop offset="1" stop-color="#fff" stop-opacity="0"/></radialGradient></defs><ellipse cx="900" cy="557" rx="300" ry="38" fill="url(#bandhl)"/><g><rect x="1109.5" y="534" width="69.5" height="22" rx="3" fill="#8d8e8f" stroke="#4c4c4c" stroke-width="0.7"/><circle cx="1117" cy="542" r="2.4" fill="#9a9b9c" stroke="#4c4c4c" stroke-width="0.7"/><circle cx="1123" cy="542" r="2.4" fill="#9a9b9c" stroke="#4c4c4c" stroke-width="0.7"/><circle cx="1129" cy="542" r="2.4" fill="#9a9b9c" stroke="#4c4c4c" stroke-width="0.7"/><rect x="1104" y="546.6" width="99" height="47" rx="4" fill="#8a8b8c" stroke="#4c4c4c" stroke-width="0.7"/><rect x="1111.5" y="556" width="47.5" height="11.6" rx="5.8" fill="#9b9c9d" stroke="#4c4c4c" stroke-width="0.7"/><circle cx="1153" cy="561.8" r="2.6" fill="#a9aaab" stroke="#4c4c4c" stroke-width="0.7"/><path d="M1164 561 H1200" stroke="#5a5a5a" stroke-width="1.2"/><rect x="1111.5" y="572.8" width="13.5" height="13.8" fill="#97989a" stroke="#4c4c4c" stroke-width="0.7"/><rect x="1129" y="572.8" width="13.5" height="13.8" fill="#97989a" stroke="#4c4c4c" stroke-width="0.7"/><rect x="1146.5" y="572.8" width="13.5" height="13.8" fill="#97989a" stroke="#4c4c4c" stroke-width="0.7"/><rect x="1164" y="572.8" width="13.5" height="13.8" fill="#97989a" stroke="#4c4c4c" stroke-width="0.7"/><path d="M1071.4 634 L1156 612 L1214 610 L1226 640 V652 Q1226 657 1220 657.5 L1080 660 Q1071.4 660 1071.4 652 Z" fill="#8b8c8d" stroke="#4c4c4c" stroke-width="0.7"/><path d="M1071.4 636 H1226 V652 Q1226 657 1220 657.5 L1080 660 Q1071.4 660 1071.4 652 Z" fill="url(#gp)"/><path d="M1071.4 612 H1146 Q1156 612 1156 622 V630 Q1156 637 1148 637 H1071.4 Z" fill="url(#gp)" stroke="#4c4c4c" stroke-width="0.7"/><path d="M1071.4 605 Q1071.4 600 1078 600 H1132 Q1141.7 600 1141.7 608 V618 Q1141.7 625 1134 625 H1071.4 Z" fill="url(#gp)" stroke="#4c4c4c" stroke-width="0.7"/><rect x="1079" y="577" width="7.6" height="28" fill="#7b7c7d" stroke="#4c4c4c" stroke-width="0.7"/><rect x="1091.6" y="595" width="5.6" height="17.4" fill="#8e8f90" stroke="#4c4c4c" stroke-width="0.7"/><circle cx="1108" cy="588" r="6" fill="#7e7f80"/><circle cx="1082.3" cy="559.3" r="19.4" fill="url(#gs)" stroke="#4c4c4c" stroke-width="0.7"/><circle cx="1094" cy="583.6" r="12" fill="url(#gs)" stroke="#4c4c4c" stroke-width="0.7"/><rect x="1115" y="606" width="3.5" height="5" fill="#6f7071"/><rect x="1102.5" y="592" width="27.2" height="15" rx="3" fill="#949596" stroke="#4c4c4c" stroke-width="0.7"/><text x="1107" y="603.5" font-size="7" fill="#5c5c5c" font-family='"Liberation Sans","Noto Sans CJK SC",sans-serif'>益小铺</text><ellipse cx="1195" cy="621" rx="22" ry="7.5" fill="#848586" stroke="#4c4c4c" stroke-width="0.7"/><ellipse cx="1194" cy="613.5" rx="21" ry="7" fill="#9a9b9c" stroke="#4c4c4c" stroke-width="0.7"/><ellipse cx="1194" cy="612.5" rx="17.5" ry="5" fill="#78797a" stroke="#4c4c4c" stroke-width="0.7"/><path d="M1181 588 Q1177 596 1180 601 L1186 597 Z" fill="#88898a" stroke="#4c4c4c" stroke-width="0.7"/><path d="M1208 588 Q1212 596 1209 601 L1203 597 Z" fill="#88898a" stroke="#4c4c4c" stroke-width="0.7"/><path d="M1194.8 560 C1211 561 1213 582 1204 600 L1186 600 C1177 582 1179 561 1194.8 560 Z" fill="url(#gs)" stroke="#4c4c4c" stroke-width="0.7"/><path d="M1182 581 Q1195 585 1208 581" stroke="#5a5a5a" stroke-width="0.7" fill="none"/><ellipse cx="1195" cy="597" rx="2.2" ry="7" fill="#a0a1a2" stroke="#4c4c4c" stroke-width="0.7"/><ellipse cx="1193.5" cy="607" rx="2.5" ry="4.5" fill="#999a9b" stroke="#4c4c4c" stroke-width="0.7"/><circle cx="1169.3" cy="622" r="8" fill="url(#gs)" stroke="#4c4c4c" stroke-width="0.7"/></g><path d="M1214 643 L1230.6 625.5 L1248 643 Z" fill="#000"/><path d="M1205.2 646 L1256 644.6 L1257 685 L1205.2 684 Z M1205.2 646 L1257 685 M1205.2 684 L1253 680 L1256 644.6" fill="none" stroke="#111" stroke-width="1"/><circle cx="904.3" cy="491.3" r="185" fill="none" stroke="#121212" stroke-width="1.1"/><path d="M905 503 L919 675" stroke="#555" stroke-width="0.8"/><circle cx="904.3" cy="491.3" r="12" fill="none" stroke="#222" stroke-width="1" stroke-dasharray="3.2 2"/><circle cx="904.3" cy="491.3" r="7" fill="none" stroke="#222" stroke-width="0.9" stroke-dasharray="2.5 1.6"/><rect x="901.8" y="488.8" width="5" height="5" transform="rotate(45 904.3 491.3)" fill="none" stroke="#222" stroke-width="0.8"/><path d="M1323.3 679.9 A176.4 176.4 0 1 1 1466.7 679.9" fill="none" stroke="#ee9a45" stroke-width="1.3"/><path d="M1393 532 L1381 663" stroke="#5a5a5a" stroke-width="0.8"/><path d="M1392 496 L1405.5 400" stroke="#4b8cf0" stroke-width="2"/><path d="M1407.5 373 L1399.5 402 L1413.5 403 Z" fill="#4b8cf0"/><path d="M1371 519 L1285 520" stroke="#7ccb3c" stroke-width="2"/><path d="M1257 519.5 L1286 512 L1286 527 Z" fill="#7ccb3c"/><path d="M1386 514 L1360 503" stroke="#f0445c" stroke-width="2"/><path d="M1349 499 L1354 495 L1361 497.5 L1362 504 L1357 507 L1351 505 Z" fill="#f0445c"/><path d="M1328 447 L1346 446 L1346 463 L1328 464 Z" fill="#d9727c" fill-opacity="0.75" stroke="#e86a78" stroke-width="0.8"/><path d="M1374 441 L1380 440 L1381 456 L1375 457 Z" fill="#82c45a" fill-opacity="0.8" stroke="#8fd060" stroke-width="0.8"/><circle cx="1394.5" cy="518" r="22" fill="none" stroke="#e8e8e8" stroke-width="1.8"/><circle cx="1394.5" cy="518" r="11.5" fill="none" stroke="#ee9a45" stroke-width="1" stroke-dasharray="3.2 2"/><circle cx="1394.5" cy="518" r="6.5" fill="none" stroke="#ee9a45" stroke-width="0.9" stroke-dasharray="2.5 1.6"/><circle cx="1394.5" cy="518" r="2" fill="#ee8a25"/><g><circle cx="1145.4" cy="644.3" r="14" fill="none" stroke="#fff" stroke-width="1.6"/><circle cx="1145.4" cy="644.3" r="14" fill="none" stroke="#e8302b" stroke-width="1.6" stroke-dasharray="5.5 5.5"/><path d="M1117.4 644.3 H1137.4 M1153.4 644.3 H1173.4 M1145.4 617.3 V636.3 M1145.4 652.3 V671.3" stroke="#333" stroke-width="1.2"/><path d="M1116.4 644.3 h5 M1169.4 644.3 h5" stroke="#7bc24a" stroke-width="1.5"/><path d="M1145.4 617.3 v4 M1145.4 667.3 v4" stroke="#3b78d6" stroke-width="1.5"/></g></svg>
<div style="left:0;top:0;width:1085.3px;height:75.6px;background:rgba(48,48,48,0.93);"></div>
<div style="left:-584.8px;top:-39px;width:0;height:0">
<div style="left:596.90px;top:43.30px;width:45.90px;height:28.90px;background:#282828;border-radius:5.7px;border:1px solid #414141;"></div>
<svg style="left:604px;top:47px;" width="22" height="22" viewBox="0 0 20 20"><path d="M1.82 9.18 L9.91 9.18 M0.55 14.82 L19.45 14.82 M6.64 6.00 L3.73 19.00 M14.91 11.45 L16.09 19.00" stroke="#e0e0e0" stroke-width="1.5" fill="none" stroke-linecap="round"/><circle cx="14.73" cy="5.09" r="4.82" fill="#e0e0e0"/><path d="M11.91 5.18 Q12.36 3.09 14.55 2.64" stroke="#2b2b2b" stroke-width="1.1" fill="none" stroke-linecap="round"/></svg>
<svg style="left:627.9px;top:54.5px;" width="11.0" height="9.0" viewBox="0 0 11.0 9.0"><path d="M1 2.0 L5.5 6.5 L10.0 2.0" fill="none" stroke="#d8d8d8" stroke-width="1.6" stroke-linecap="round" stroke-linejoin="round"/></svg>
<div style="left:649.80px;top:43.30px;width:132.40px;height:28.90px;background:#282828;border-radius:5.7px;border:1px solid #414141;"></div>
<svg style="left:656.8px;top:46.8px;" width="22.4" height="22.4" viewBox="0 0 20 20"><path d="M1.5 5.5 V2.5 Q1.5 1.5 2.5 1.5 H5.5 M14.5 1.5 H17.5 Q18.5 1.5 18.5 2.5 V5.5 M18.5 14.5 V17.5 Q18.5 18.5 17.5 18.5 H14.5 M5.5 18.5 H2.5 Q1.5 18.5 1.5 17.5 V14.5" stroke="#e0e0e0" stroke-width="1.4" fill="none" stroke-linecap="round"/><rect x="5" y="5" width="10" height="10" rx="1" fill="#e6e6e6"/></svg>
<span class="t" style="left:689px;top:46.0px;line-height:24px;font-size:16.8px;color:#e3e3e3;">物体模式</span>
<svg style="left:766.3px;top:54.8px;" width="10.4" height="8.4" viewBox="0 0 10.4 8.4"><path d="M1 1.7000000000000002 L5.2 6.2 L9.4 1.7000000000000002" fill="none" stroke="#d8d8d8" stroke-width="1.5" stroke-linecap="round" stroke-linejoin="round"/></svg>
<span class="t" style="left:800.5px;top:46.0px;line-height:24px;font-size:16.8px;color:#e3e3e3;">视图</span>
<span class="t" style="left:856.5px;top:46.0px;line-height:24px;font-size:16.8px;color:#e3e3e3;">选择</span>
<span class="t" style="left:912.5px;top:46.0px;line-height:24px;font-size:16.8px;color:#e3e3e3;">添加</span>
<span class="t" style="left:968px;top:46.0px;line-height:24px;font-size:16.8px;color:#e3e3e3;">物体</span>
<div style="left:1034.80px;top:43.30px;width:92.40px;height:28.90px;background:#282828;border-radius:5.7px;border:1px solid #414141;"></div>
<svg style="left:1040.3px;top:46.8px;" width="22.4" height="22.4" viewBox="0 0 20 20"><circle cx="4.4" cy="16" r="2" fill="none" stroke="#e0e0e0" stroke-width="1.3"/><path d="M4.4 13.8 V2 M1.7 5 L4.4 1.6 L7.1 5 M6.6 16 H19 M16 13.2 L19.3 16 L16 18.8" stroke="#e0e0e0" stroke-width="1.4" fill="none" stroke-linecap="round" stroke-linejoin="round"/><path d="M6 14.4 L14.6 5.8 M10.6 5.5 H14.9 V9.8" stroke="#e0e0e0" stroke-width="1.1" fill="none" stroke-linecap="round" stroke-linejoin="round" opacity="0.7"/></svg>
<span class="t" style="left:1073.5px;top:46.0px;line-height:24px;font-size:16.8px;color:#e3e3e3;">全局</span>
<svg style="left:1111.8px;top:54.8px;" width="10.4" height="8.4" viewBox="0 0 10.4 8.4"><path d="M1 1.7000000000000002 L5.2 6.2 L9.4 1.7000000000000002" fill="none" stroke="#d8d8d8" stroke-width="1.5" stroke-linecap="round" stroke-linejoin="round"/></svg>
<div style="left:1133.80px;top:43.30px;width:45.90px;height:28.90px;background:#282828;border-radius:5.7px;border:1px solid #414141;"></div>
<svg style="left:1139.5px;top:47px;" width="22" height="22" viewBox="0 0 20 20"><path d="M2 6 V3 Q2 2 3 2 H6 M14 2 H17 Q18 2 18 3 V6 M18 14 V17 Q18 18 17 18 H14 M6 18 H3 Q2 18 2 17 V14" stroke="#e0e0e0" stroke-width="1.4" fill="none" stroke-linecap="round"/><circle cx="10" cy="10" r="2.6" fill="#e0e0e0"/></svg>
<svg style="left:1164.3px;top:54.8px;" width="10.4" height="8.4" viewBox="0 0 10.4 8.4"><path d="M1 1.7000000000000002 L5.2 6.2 L9.4 1.7000000000000002" fill="none" stroke="#d8d8d8" stroke-width="1.5" stroke-linecap="round" stroke-linejoin="round"/></svg>
<div style="left:1187.80px;top:43.30px;width:75.40px;height:28.90px;background:#282828;border-radius:5.7px;border:1px solid #414141;"></div>
<div style="left:1189.00px;top:44.50px;width:27.50px;height:26.50px;background:#545454;border-radius:4.5px 0 0 4.5px;"></div>
<svg style="left:1192px;top:47px;" width="22" height="22" viewBox="0 0 20 20"><path d="M3.2 8.2 L8.8 3.9 A5.6 5.6 0 0 1 15.6 12.8 L10 17" stroke="#9a9a9a" stroke-width="5.6" fill="none" stroke-linejoin="round"/><path d="M4.2 7.45 L8.8 3.9 A5.6 5.6 0 0 1 15.6 12.8 L11 16.25" stroke="#545454" stroke-width="3" fill="none" stroke-linejoin="round"/></svg>
<svg style="left:1219px;top:47px;" width="22" height="22" viewBox="0 0 20 20"><path d="M1.5 14.5 H18.5 M1.5 11.5 V17.5 M7 12.5 V16.5 M12.5 12.5 V16.5 M18.5 11.5 V17.5" stroke="#e0e0e0" stroke-width="1.3" fill="none" stroke-linecap="round"/><rect x="13" y="2.5" width="5" height="5" fill="#e0e0e0"/></svg>
<svg style="left:1246.8px;top:54.8px;" width="10.4" height="8.4" viewBox="0 0 10.4 8.4"><path d="M1 1.7000000000000002 L5.2 6.2 L9.4 1.7000000000000002" fill="none" stroke="#d8d8d8" stroke-width="1.5" stroke-linecap="round" stroke-linejoin="round"/></svg>
<div style="left:1269.80px;top:43.30px;width:74.90px;height:28.90px;background:#282828;border-radius:5.7px;border:1px solid #414141;"></div>
<div style="left:1271.00px;top:44.50px;width:27.50px;height:26.50px;background:#545454;border-radius:4.5px 0 0 4.5px;"></div>
<svg style="left:1274px;top:47px;" width="22" height="22" viewBox="0 0 20 20"><circle cx="10" cy="10" r="7.5" fill="none" stroke="#9a9a9a" stroke-width="1.3"/><circle cx="10" cy="10" r="2.6" fill="#9a9a9a"/></svg>
<svg style="left:1303px;top:47px;" width="22" height="22" viewBox="0 0 20 20"><path d="M1.5 17 C7 17 7.5 3 10 3 C12.5 3 13 17 18.5 17" stroke="#5c5c5c" stroke-width="1.4" fill="none" stroke-linecap="round"/></svg>
<svg style="left:1328.8px;top:54.8px;" width="10.4" height="8.4" viewBox="0 0 10.4 8.4"><path d="M1 1.7000000000000002 L5.2 6.2 L9.4 1.7000000000000002" fill="none" stroke="#5c5c5c" stroke-width="1.5" stroke-linecap="round" stroke-linejoin="round"/></svg>
<div style="left:1366.80px;top:43.30px;width:45.90px;height:28.90px;background:#282828;border-radius:5.7px;border:1px solid #414141;"></div>
<svg style="left:1371.3px;top:46.8px;" width="22.4" height="22.4" viewBox="0 0 20 20"><path d="M5 6.5 C8 2 17 2 20 6.5 C17 11 8 11 5 6.5 Z" fill="#e0e0e0"/><circle cx="12.5" cy="6.5" r="3" fill="#282828"/><circle cx="12.5" cy="6.5" r="1.5" fill="#e0e0e0"/><path d="M1 8.5 L10.5 13 L6.5 14.5 L5 19 Z" fill="#e0e0e0" stroke="#282828" stroke-width="0.8"/></svg>
<svg style="left:1397.3px;top:54.8px;" width="10.4" height="8.4" viewBox="0 0 10.4 8.4"><path d="M1 1.7000000000000002 L5.2 6.2 L9.4 1.7000000000000002" fill="none" stroke="#d8d8d8" stroke-width="1.5" stroke-linecap="round" stroke-linejoin="round"/></svg>
<div style="left:1419.80px;top:43.30px;width:58.40px;height:28.90px;background:#282828;border-radius:5.7px;border:1px solid #414141;"></div>
<div style="left:1421.00px;top:44.50px;width:27.50px;height:26.50px;background:#4772b3;border-radius:4.5px 0 0 4.5px;"></div>
<svg style="left:1424px;top:47px;" width="22" height="22" viewBox="0 0 20 20"><circle cx="4.2" cy="15.8" r="2.1" fill="none" stroke="#fff" stroke-width="1.4"/><path d="M5.8 14.2 L16.3 3.7 M11.3 3.3 H16.7 V8.7" stroke="#fff" stroke-width="1.5" fill="none" stroke-linecap="round" stroke-linejoin="round"/><path d="M2.5 5.6 Q12.5 6 15.2 17.2" stroke="#fff" stroke-width="1.5" fill="none" stroke-linecap="round"/></svg>
<svg style="left:1458.3px;top:54.8px;" width="10.4" height="8.4" viewBox="0 0 10.4 8.4"><path d="M1 1.7000000000000002 L5.2 6.2 L9.4 1.7000000000000002" fill="none" stroke="#d8d8d8" stroke-width="1.5" stroke-linecap="round" stroke-linejoin="round"/></svg>
<div style="left:1484.80px;top:43.30px;width:58.40px;height:28.90px;background:#282828;border-radius:5.7px;border:1px solid #414141;"></div>
<div style="left:1486.00px;top:44.50px;width:27.50px;height:26.50px;background:#4772b3;border-radius:4.5px 0 0 4.5px;"></div>
<svg style="left:1489px;top:47px;" width="22" height="22" viewBox="0 0 20 20"><circle cx="11.5" cy="8.5" r="7" fill="#fff"/><circle cx="7.5" cy="12.5" r="5.6" fill="#4772b3" stroke="#fff" stroke-width="1.4"/><path d="M7.5 8.3 A4.3 4.3 0 0 1 11.8 12.5 A5 5 0 0 0 7.5 8.3Z" fill="#4772b3"/></svg>
<svg style="left:1523.3px;top:54.8px;" width="10.4" height="8.4" viewBox="0 0 10.4 8.4"><path d="M1 1.7000000000000002 L5.2 6.2 L9.4 1.7000000000000002" fill="none" stroke="#d8d8d8" stroke-width="1.5" stroke-linecap="round" stroke-linejoin="round"/></svg>
<div style="left:1550.30px;top:43.30px;width:28.90px;height:28.90px;background:#545454;border-radius:5.7px;border:1px solid #414141;"></div>
<svg style="left:1553.5px;top:47px;" width="22" height="22" viewBox="0 0 20 20"><rect x="6.5" y="2" width="11.5" height="11.5" rx="1.5" fill="none" stroke="#e0e0e0" stroke-width="1.3"/><rect x="2" y="6.5" width="11.5" height="11.5" rx="1.5" fill="#545454" stroke="#e0e0e0" stroke-width="1.3"/><path d="M6.5 10 V12.5 H9" stroke="#e0e0e0" stroke-width="1.2" fill="none" stroke-dasharray="1.5 1.3"/></svg>
<div style="left:1585.80px;top:43.30px;width:114.40px;height:28.90px;background:#545454;border-radius:5.7px;border:1px solid #414141;"></div>
<svg style="left:1589.5px;top:47px;" width="22" height="22" viewBox="0 0 20 20"><circle cx="10" cy="10" r="8" fill="none" stroke="#e0e0e0" stroke-width="1.3"/><ellipse cx="10" cy="10" rx="3.5" ry="8" fill="none" stroke="#e0e0e0" stroke-width="1.1"/><path d="M2 10 H18" stroke="#e0e0e0" stroke-width="1.1"/></svg>
<div style="left:1615.00px;top:44.50px;width:27.50px;height:26.50px;background:#4772b3;"></div>
<svg style="left:1617.5px;top:47px;" width="22" height="22" viewBox="0 0 20 20"><circle cx="10" cy="10" r="8.2" fill="#dfe6f5"/></svg>
<div style="left:1614.30px;top:44.50px;width:0.80px;height:26.50px;background:#3d3d3d;"></div>
<div style="left:1642.50px;top:44.50px;width:0.80px;height:26.50px;background:#3d3d3d;"></div>
<svg style="left:1646px;top:47px;" width="22" height="22" viewBox="0 0 20 20"><circle cx="10" cy="10" r="8" fill="#8a8a8a"/><path d="M10 2 A8 8 0 0 0 10 18 Z" fill="#b9b9b9"/><path d="M10 10 L18 10 A8 8 0 0 1 10 18 Z" fill="#4a4a4a"/><circle cx="10" cy="10" r="8" fill="none" stroke="#e0e0e0" stroke-width="1.2" opacity="0.7"/></svg>
<span class="t" style="left:597.6px;top:84.5px;line-height:24px;font-size:16.8px;color:#e3e3e3;">方向:</span>
<div style="left:642.40px;top:82.10px;width:145.40px;height:28.90px;background:#282828;border-radius:5.7px;border:1px solid #414141;"></div>
<svg style="left:648.9px;top:85.3px;" width="22.4" height="22.4" viewBox="0 0 20 20"><circle cx="7.5" cy="11.5" r="2.6" fill="#e0e0e0"/><path d="M7.5 7 V1.5 M5 3.8 L7.5 1.2 L10 3.8 M12 11.5 H18.5 M16 9 L18.7 11.5 L16 14 M4.5 14.5 L1.5 17.5 M1.3 14.3 V17.8 H4.8" stroke="#e0e0e0" stroke-width="1.2" fill="none" stroke-linecap="round" stroke-linejoin="round" opacity="0.8"/></svg>
<span class="t" style="left:681.6px;top:84.5px;line-height:24px;font-size:16.8px;color:#e3e3e3;">默认</span>
<svg style="left:771.9px;top:93.3px;" width="10.4" height="8.4" viewBox="0 0 10.4 8.4"><path d="M1 1.7000000000000002 L5.2 6.2 L9.4 1.7000000000000002" fill="none" stroke="#d8d8d8" stroke-width="1.5" stroke-linecap="round" stroke-linejoin="round"/></svg>
<span class="t" style="left:801.6px;top:84.5px;line-height:24px;font-size:16.8px;color:#e3e3e3;">拖拽:</span>
<div style="left:852.40px;top:82.10px;width:71.40px;height:28.90px;background:#282828;border-radius:5.7px;border:1px solid #414141;"></div>
<span class="t" style="left:863.6px;top:84.5px;line-height:24px;font-size:16.8px;color:#e3e3e3;">框选</span>
<svg style="left:908.4px;top:93.3px;" width="10.4" height="8.4" viewBox="0 0 10.4 8.4"><path d="M1 1.7000000000000002 L5.2 6.2 L9.4 1.7000000000000002" fill="none" stroke="#d8d8d8" stroke-width="1.5" stroke-linecap="round" stroke-linejoin="round"/></svg>
<svg style="left:950.1px;top:90.5px;" width="14" height="12" viewBox="0 0 14 12"><path d="M1 3.5 L7 8 L13 3.5" fill="none" stroke="#d8d8d8" stroke-width="1.6" stroke-linecap="round" stroke-linejoin="round"/></svg>
<svg style="left:968.6px;top:85px;" width="23" height="23" viewBox="0 0 20 20"><defs><linearGradient id="hx1" x1="0.12" y1="0.12" x2="0.88" y2="0.88"><stop offset="0" stop-color="#10a4f4"/><stop offset="0.22" stop-color="#18c0a0"/><stop offset="0.42" stop-color="#38bc48"/><stop offset="0.6" stop-color="#a8a838"/><stop offset="0.78" stop-color="#e86028"/><stop offset="1" stop-color="#fa1414"/></linearGradient></defs><path d="M10 0.4 L18.6 5.2 V14.8 L10 19.6 L1.4 14.8 V5.2 Z" fill="url(#hx1)"/></svg>
<div style="left:998.40px;top:82.10px;width:197.40px;height:28.90px;background:#545454;border-radius:5px;border:1px solid #3d3d3d;"></div>
<div style="left:999.60px;top:83.30px;width:27.50px;height:26.50px;background:#4772b3;border-radius:4.5px 0 0 4.5px;"></div>
<svg style="left:1001.1px;top:85px;" width="22" height="22" viewBox="0 0 20 20"><path d="M1.5 5.5 V2.5 Q1.5 1.5 2.5 1.5 H5.5 M14.5 1.5 H17.5 Q18.5 1.5 18.5 2.5 V5.5 M18.5 14.5 V17.5 Q18.5 18.5 17.5 18.5 H14.5 M5.5 18.5 H2.5 Q1.5 18.5 1.5 17.5 V14.5" stroke="#fff" stroke-width="1.4" fill="none" stroke-linecap="round"/><rect x="5" y="5" width="10" height="10" rx="1" fill="#fff"/></svg>
<div style="left:1026.30px;top:83.30px;width:0.90px;height:26.50px;background:#3d3d3d;"></div>
<svg style="left:1029.1px;top:85px;" width="22" height="22" viewBox="0 0 20 20"><circle cx="10" cy="10" r="8.4" fill="#545454" stroke="#d6d6d6" stroke-width="1.4"/><path d="M10 1.6 A8.4 8.4 0 0 1 18.4 10 Q14 12 10 12 Z M10 12 Q6 12 1.6 10 A8.4 8.4 0 0 0 10 18.4 Z" fill="#d6d6d6"/></svg>
<div style="left:1054.30px;top:83.30px;width:0.90px;height:26.50px;background:#3d3d3d;"></div>
<svg style="left:1057.1px;top:85px;" width="22" height="22" viewBox="0 0 20 20"><path d="M7 1.6 L11.6 13.2 Q7 16.4 1.6 13.2 Z" fill="#d6d6d6" stroke="#d6d6d6" stroke-width="0.8" stroke-linejoin="round"/><circle cx="15.6" cy="4.2" r="2.5" fill="#d6d6d6"/><circle cx="14" cy="14.2" r="4.3" fill="#545454" stroke="#d6d6d6" stroke-width="1.4"/><path d="M12 13.4 A2.2 2.2 0 0 1 13.6 12" stroke="#d6d6d6" stroke-width="0.9" fill="none" stroke-linecap="round"/></svg>
<div style="left:1082.30px;top:83.30px;width:0.90px;height:26.50px;background:#3d3d3d;"></div>
<svg style="left:1085.1px;top:85px;" width="22" height="22" viewBox="0 0 20 20"><circle cx="10" cy="10.3" r="7.2" fill="none" stroke="#d6d6d6" stroke-width="1.4"/><path d="M4.2 7 C6 5.6 8.6 5.4 9.4 6.6 C10 7.8 8.4 8.4 8.8 9.6 C9.3 10.8 11.2 10.6 11.4 12.2 C11.6 14 10 14.4 9.6 16.4 C6.5 16.6 3.4 13.6 3.2 10.4 Z M12.4 3.8 C14.6 4.4 16.4 6.4 16.8 8.6 C15.6 9.4 14.2 9 13.4 7.8 C12.6 6.6 11.6 5.4 12.4 3.8 Z" fill="#d6d6d6"/><path d="M15.6 4.6 L18.6 1.8 M4.4 16 L1.6 18.8" stroke="#d6d6d6" stroke-width="1.3" stroke-linecap="round"/></svg>
<div style="left:1110.30px;top:83.30px;width:0.90px;height:26.50px;background:#3d3d3d;"></div>
<svg style="left:1113.1px;top:85px;" width="22" height="22" viewBox="0 0 20 20"><path d="M8 1.5 H11 V9 H15 Q16.5 9 16.5 10.5 V12.5 H3.5 V10.5 Q3.5 9 5 9 H8 Z M3.5 14 H16.5 V18.5 H14.5 V16 H13 V18.5 H3.5 Z" fill="none" stroke="#d6d6d6" stroke-width="1.4" stroke-linejoin="round"/></svg>
<div style="left:1138.30px;top:83.30px;width:0.90px;height:26.50px;background:#3d3d3d;"></div>
<svg style="left:1141.1px;top:85px;" width="22" height="22" viewBox="0 0 20 20"><rect x="1.5" y="2.5" width="11" height="6.5" rx="1.5" fill="#d6d6d6"/><rect x="1.5" y="11" width="11" height="6.5" rx="1.5" fill="#d6d6d6"/><path d="M14 5.5 H16 Q18 5.5 18 7.5 V13 Q18 14.5 16 14.5 H14.5 M16 12.5 L14 14.5 L16 16.5" stroke="#d6d6d6" stroke-width="1.3" fill="none" stroke-linecap="round" stroke-linejoin="round"/></svg>
<div style="left:1166.30px;top:83.30px;width:0.90px;height:26.50px;background:#3d3d3d;"></div>
<svg style="left:1169.1px;top:85px;" width="22" height="22" viewBox="0 0 20 20"><path d="M4 2.5 H16 M10 2.5 V6 M4.5 6 H12 Q16.5 6 16.5 9.5 Q16.5 12.5 12 12.5 H7.5 Q3.5 12.5 3.5 15 Q3.5 17.5 7.5 17.5 H17" stroke="#d6d6d6" stroke-width="1.6" fill="none" stroke-linecap="round"/></svg>
<div style="left:1195.90px;top:82.10px;width:290.40px;height:28.90px;background:#1d1d1d;border-radius:5.7px;border:1px solid #343434;"></div>
<svg style="left:1201.6px;top:86px;" width="21.5" height="21.5" viewBox="0 0 20 20"><circle cx="8" cy="8" r="5.8" fill="none" stroke="#e0e0e0" stroke-width="1.6"/><path d="M12.3 12.3 L18 18" stroke="#e0e0e0" stroke-width="1.8" stroke-linecap="round"/></svg>
<span class="t" style="left:1234.6px;top:84.5px;line-height:24px;font-size:16.8px;color:#7c7c7c;">搜索</span>
<div style="left:1486.30px;top:82.10px;width:57.40px;height:28.90px;background:#545454;border-radius:5px 0 0 5px;border:1px solid #3d3d3d;"></div>
<svg style="left:1492px;top:90px;" width="18" height="12" viewBox="0 0 18 12"><path d="M1.5 1.5 Q9 13 16.5 1.5" stroke="#9a9a9a" stroke-width="1.3" fill="none" stroke-linecap="round"/></svg>
<div style="left:1515.00px;top:83.30px;width:0.80px;height:26.50px;background:#3d3d3d;"></div>
<svg style="left:1518.5px;top:85.5px;" width="22" height="22" viewBox="0 0 20 20"><path d="M4.5 1.5 H15.5 V18.5 L10 13 L4.5 18.5 Z" fill="#e6e6e6"/></svg>
<div style="left:1542.80px;top:82.10px;width:47.40px;height:28.90px;background:#282828;border:1px solid #414141;"></div>
<svg style="left:1547px;top:85.5px;" width="22" height="22" viewBox="0 0 20 20"><path d="M2.5 1.5 V15.5 H7 M2.5 6.5 H7" stroke="#e6e6e6" stroke-width="1.5" fill="none"/><path d="M8.5 3 H12 L13 4.2 H18.5 V9 H8.5 Z M8.5 12 H12 L13 13.2 H18.5 V18 H8.5 Z" fill="#e6e6e6"/></svg>
<svg style="left:1574.8px;top:93.3px;" width="10.4" height="8.4" viewBox="0 0 10.4 8.4"><path d="M1 1.7000000000000002 L5.2 6.2 L9.4 1.7000000000000002" fill="none" stroke="#d8d8d8" stroke-width="1.5" stroke-linecap="round" stroke-linejoin="round"/></svg>
<div style="left:1589.30px;top:82.10px;width:46.40px;height:28.90px;background:#282828;border-radius:0 5px 5px 0;border:1px solid #414141;"></div>
<svg style="left:1592.5px;top:85.5px;" width="22" height="22" viewBox="0 0 20 20"><path d="M1.5 2.5 H18.5 L11.8 10.5 V18 L8.2 15.5 V10.5 Z" fill="#e6e6e6" stroke="#e6e6e6" stroke-width="1.3" stroke-linejoin="round"/></svg>
<svg style="left:1620.3px;top:93.3px;" width="10.4" height="8.4" viewBox="0 0 10.4 8.4"><path d="M1 1.7000000000000002 L5.2 6.2 L9.4 1.7000000000000002" fill="none" stroke="#d8d8d8" stroke-width="1.5" stroke-linecap="round" stroke-linejoin="round"/></svg>
<svg style="left:1638.5px;top:85px;" width="23" height="23" viewBox="0 0 20 20"><path d="M10 1 L18 3.8 V9.5 C18 14.5 14.5 17.8 10 19.3 C5.5 17.8 2 14.5 2 9.5 V3.8 Z" fill="#e0e0e0"/><path d="M5.8 9.8 L9 13 L14.5 6.8" stroke="#303030" stroke-width="2.2" fill="none" stroke-linecap="round" stroke-linejoin="round"/></svg>
<span class="t" style="left:682.5px;top:127.0px;line-height:24px;font-size:16.8px;color:#f2f2f2;text-shadow:0 0 2px rgba(0,0,0,0.85),0 1px 1px rgba(0,0,0,0.6);">用户透视</span>
<span class="t" style="left:682.5px;top:154.0px;line-height:24px;font-size:16.8px;color:#f2f2f2;text-shadow:0 0 2px rgba(0,0,0,0.85),0 1px 1px rgba(0,0,0,0.6);letter-spacing:0.45px;">(90) Collection | 点光.001</span>
<div style="left:1639.80px;top:121.50px;width:26.00px;height:56.00px;background:#1b1b1b;border-radius:6px 0 0 6px;"></div>
<span class="t" style="left:1652.8px;top:149.5px;font-size:15.6px;color:#b4b4b4;line-height:20px;transform:translate(-50%,-50%) rotate(90deg);">条目</span>
<div style="left:1639.80px;top:184.50px;width:26.00px;height:55.00px;background:#1b1b1b;border-radius:6px 0 0 6px;"></div>
<span class="t" style="left:1652.8px;top:212.0px;font-size:15.6px;color:#b4b4b4;line-height:20px;transform:translate(-50%,-50%) rotate(90deg);">工具</span>
<div style="left:1639.80px;top:246.50px;width:26.00px;height:55.00px;background:#1b1b1b;border-radius:6px 0 0 6px;"></div>
<span class="t" style="left:1652.8px;top:274.0px;font-size:15.6px;color:#b4b4b4;line-height:20px;transform:translate(-50%,-50%) rotate(90deg);">视图</span>
<div style="left:1639.80px;top:308.50px;width:26.00px;height:55.30px;background:#1b1b1b;border-radius:6px 0 0 6px;"></div>
<span class="t" style="left:1652.8px;top:336.15px;font-size:15.6px;color:#b4b4b4;line-height:20px;transform:translate(-50%,-50%) rotate(90deg);">动画</span>
<div style="left:1639.80px;top:370.20px;width:26.00px;height:103.40px;background:#1b1b1b;border-radius:6px 0 0 6px;"></div>
<span class="t" style="left:1652.8px;top:421.9px;font-size:15.6px;color:#b4b4b4;line-height:20px;transform:translate(-50%,-50%) rotate(90deg);letter-spacing:0.55px;">BlenderKit</span>
<div style="left:598.20px;top:127.70px;width:58.00px;height:98.20px;background:#282828;border-radius:6px;"></div>
<div style="left:598.20px;top:176.30px;width:58.00px;height:0.80px;background:#1a1a1a;"></div>
<svg style="left:610.2px;top:135px;" width="34" height="34" viewBox="0 0 34 34"><rect x="1.5" y="1.5" width="31" height="31" rx="1.5" fill="none" stroke="#e6b35a" stroke-width="2" stroke-dasharray="6.2 3.4"/><path d="M12.5 8.5 L24.5 18.5 L17.5 19.5 L13 25 Z" fill="#e6e6e6"/></svg>
<svg style="left:647.2px;top:167px;" width="6" height="6" viewBox="0 0 6 6"><path d="M6 0 V6 H0 Z" fill="#8a8a8a"/></svg>
<svg style="left:609.2px;top:182.5px;" width="36" height="36" viewBox="0 0 36 36"><circle cx="18" cy="18" r="16" fill="none" stroke="#f2f2f2" stroke-width="2.2"/><circle cx="18" cy="18" r="16" fill="none" stroke="#b8424a" stroke-width="2.2" stroke-dasharray="6.3 6.3" stroke-dashoffset="3"/><path d="M18 7.5 V15 M18 21 V28.5 M7.5 18 H15 M21 18 H28.5" stroke="#b4b4b4" stroke-width="1.5"/></svg>
<div style="left:598.20px;top:234.60px;width:58.00px;height:197.80px;background:#282828;border-radius:6px;"></div>
<div style="left:598.20px;top:234.60px;width:58.00px;height:48.80px;background:#4772b3;border-radius:6px 6px 0 0;"></div>
<div style="left:598.20px;top:283.40px;width:58.00px;height:0.80px;background:#1a1a1a;"></div>
<div style="left:598.20px;top:333.00px;width:58.00px;height:0.80px;background:#1a1a1a;"></div>
<div style="left:598.20px;top:383.00px;width:58.00px;height:0.80px;background:#1a1a1a;"></div>
<svg style="left:609.7px;top:241.5px;" width="35" height="35" viewBox="0 0 35 35"><path d="M17.5 0.5 L21.5 6.5 H13.5 Z M17.5 34.5 L21.5 28.5 H13.5 Z M0.5 17.5 L6.5 13.5 V21.5 Z M34.5 17.5 L28.5 13.5 V21.5 Z" fill="#f2f2f2"/><path d="M17.5 8.5 V12.5 M17.5 22.5 V26.5 M8.5 17.5 H12.5 M22.5 17.5 H26.5" stroke="#f2f2f2" stroke-width="2.2"/></svg>
<svg style="left:609.2px;top:290px;" width="36" height="36" viewBox="0 0 36 36"><path d="M7 9 A14 14 0 0 1 29 9 M29 27 A14 14 0 0 1 7 27" fill="none" stroke="#e6e6e6" stroke-width="1.8"/><path d="M0.5 16 H8.5 L4.5 23 Z M27.5 20 H35.5 L31.5 13 Z" fill="#e6e6e6"/><rect x="14" y="14" width="8" height="8" transform="rotate(45 18 18)" fill="#b8b8b8"/></svg>
<svg style="left:613.2px;top:343.5px;" width="28" height="28" viewBox="0 0 28 28"><path d="M2.5 13 V1.5 H26.5 V25.5 H15" fill="none" stroke="#b4b4b4" stroke-width="1.6"/><rect x="0.5" y="13.5" width="13.5" height="13.5" fill="#e6e6e6"/><path d="M14.5 12.5 L22 5 M16.5 4.5 H22.5 V10.5" stroke="#e6e6e6" stroke-width="1.8" fill="none"/></svg>
<svg style="left:647.2px;top:374px;" width="6" height="6" viewBox="0 0 6 6"><path d="M6 0 V6 H0 Z" fill="#8a8a8a"/></svg>
<svg style="left:608.2px;top:389.5px;" width="38" height="38" viewBox="0 0 38 38"><path d="M9 6 A16 16 0 0 1 29 6 M32 9 A16 16 0 0 1 32 29 M29 32 A16 16 0 0 1 9 32 M6 29 A16 16 0 0 1 6 9" fill="none" stroke="#e6e6e6" stroke-width="1.6"/><rect x="12" y="12" width="14" height="14" fill="#e6e6e6"/><path d="M19 0.5 L23 6 H15 Z M19 37.5 L23 32 H15 Z M0.5 19 L6 15 V23 Z M37.5 19 L32 15 V23 Z" fill="#e6e6e6"/></svg>
<div style="left:598.20px;top:441.80px;width:58.00px;height:97.60px;background:#282828;border-radius:6px;"></div>
<div style="left:598.20px;top:490.30px;width:58.00px;height:0.80px;background:#1a1a1a;"></div>
<svg style="left:608.2px;top:447px;" width="40" height="38" viewBox="0 0 40 38"><path d="M3 33 C10 36 15 31 20 27 C25 23 30 21 37 28" fill="none" stroke="#8fdcb4" stroke-width="1.8" stroke-linecap="round"/><path d="M4.5 24.5 L24 5 L30 11 L10.5 30.5 L2.5 32.5 Z" fill="#e6e6e6"/><path d="M22 7 L28 13" stroke="#282828" stroke-width="1.3"/><path d="M4.5 24.5 L10.5 30.5 L2.5 32.5 Z" fill="#f5f5f5"/></svg>
<svg style="left:647.2px;top:481px;" width="6" height="6" viewBox="0 0 6 6"><path d="M6 0 V6 H0 Z" fill="#8a8a8a"/></svg>
<svg style="left:612.2px;top:496.5px;" width="34" height="38" viewBox="0 0 34 38"><path d="M10 36 V12 A24 24 0 0 1 31 33 V36 Z" fill="#8fdcb4"/><path d="M10 23 A13 13 0 0 1 20 36" fill="none" stroke="#282828" stroke-width="1.3"/><path d="M2 1.5 H9 M5.5 1.5 V32" stroke="#e6e6e6" stroke-width="2.4"/><path d="M2 34 H33 M2 31 V37" stroke="#e6e6e6" stroke-width="2.2"/><path d="M6 5 H9.5 M6 9 H9.5 M6 13 H9.5 M6 17 H9.5 M6 21 H9.5 M6 25 H9.5 M6 29 H9.5" stroke="#e6e6e6" stroke-width="1"/><path d="M12 34 V37 M16 34 V37 M20 34 V37 M24 34 V37 M28 34 V37 M32 34 V37" stroke="#e6e6e6" stroke-width="1"/></svg>
<div style="left:598.20px;top:549.00px;width:58.00px;height:47.50px;background:#282828;border-radius:6px;"></div>
<svg style="left:607.2px;top:553px;" width="42" height="42" viewBox="0 0 42 42"><path d="M9.5 17 H31 V38.5 H9.5 Z M9.5 17 L17 10 H38.5 L31 17 M38.5 10 V31 L31 38.5" fill="none" stroke="#8fdcb4" stroke-width="1.6" stroke-linejoin="round"/><path d="M6.5 1 V12 M1 6.5 H12" stroke="#8fdcb4" stroke-width="2.6"/></svg>
<svg style="left:647.2px;top:587px;" width="6" height="6" viewBox="0 0 6 6"><path d="M6 0 V6 H0 Z" fill="#8a8a8a"/></svg>
<svg style="left:0;top:0" width="2106" height="1271" viewBox="0 0 2106 1271"><path d="M1556.3 150 L1557.3 203" stroke="#2f7fe0" stroke-width="2.2"/><path d="M1518 191 L1557 189.5" stroke="#6ab417" stroke-width="2.2"/><circle cx="1553.2" cy="177" r="10.3" fill="#8c3042"/><circle cx="1555.8" cy="236.3" r="10.8" fill="#3a516e" stroke="#2f6fc8" stroke-width="1.3"/><circle cx="1603.8" cy="189.6" r="10.8" fill="#556b2a" stroke="#6ea52a" stroke-width="1.3"/><path d="M1556.3 150 L1557.3 195" stroke="#2f7fe0" stroke-width="2.2"/><circle cx="1558.4" cy="203.3" r="11.8" fill="#7a3443" stroke="#f03c50" stroke-width="1.5"/><circle cx="1556.2" cy="143.3" r="11.7" fill="#2f7fe0"/><circle cx="1507.8" cy="190.9" r="11.7" fill="#6ab417"/><text x="1556.2" y="148.8" font-family='"Liberation Sans",sans-serif' font-weight="bold" font-size="15.5" text-anchor="middle" fill="#0a1a30">Z</text><text x="1507.8" y="196.4" font-family='"Liberation Sans",sans-serif' font-weight="bold" font-size="15.5" text-anchor="middle" fill="#14200a">Y</text><text x="1553.2" y="182" font-family='"Liberation Sans",sans-serif' font-weight="bold" font-size="15.5" text-anchor="middle" fill="#3a1018" font-size="14" transform="translate(3106.4 0) scale(-1 1)">X</text><circle cx="1596.8" cy="271.8" r="20.5" fill="#2e2e2e" fill-opacity="0.92"/><circle cx="1596.8" cy="317.2" r="20.5" fill="#2e2e2e" fill-opacity="0.92"/><circle cx="1596.8" cy="362.7" r="20.5" fill="#2e2e2e" fill-opacity="0.92"/><circle cx="1596.8" cy="407.2" r="20.5" fill="#2e2e2e" fill-opacity="0.92"/><circle cx="1594" cy="269" r="8.5" fill="#e6e6e6"/><path d="M1600 275.5 L1607 282.5" stroke="#e6e6e6" stroke-width="3.2" stroke-linecap="round"/><path d="M1594 264.5 V273.5 M1589.5 269 H1598.5" stroke="#2a2a2a" stroke-width="1.8"/><path d="M1588 319 L1585.5 314.5 Q1584.5 312 1586.5 311.5 Q1588 311.2 1589.5 313.5 L1590.5 315 L1589.5 308 Q1589.3 306 1590.8 305.8 Q1592.3 305.7 1592.7 307.5 L1593.6 312 L1594 305.5 Q1594.2 303.8 1595.7 303.9 Q1597.2 304 1597.2 305.8 L1597.3 312 L1598.8 306.5 Q1599.3 305 1600.7 305.3 Q1602 305.7 1601.8 307.3 L1600.8 313.5 L1603 310 Q1604 308.7 1605.2 309.4 Q1606.3 310.2 1605.6 311.8 L1602.5 320 Q1600.5 329 1595.5 329 Q1590.5 329 1588 319 Z" fill="#e6e6e6"/><circle cx="1592" cy="355" r="4.2" fill="none" stroke="#e6e6e6" stroke-width="2"/><circle cx="1600.5" cy="353.5" r="5.6" fill="none" stroke="#e6e6e6" stroke-width="2"/><rect x="1588.5" y="362" width="12.5" height="9" rx="1" fill="none" stroke="#e6e6e6" stroke-width="1.8"/><path d="M1603 366.5 L1608 363.5 V369.5 Z" fill="#e6e6e6"/><path d="M1585 364 H1588 M1592 371 V374" stroke="#e6e6e6" stroke-width="1.6"/><path d="M1590 398.5 H1604 L1608.8 415.5 H1585.2 Z M1588.5 403.8 H1605.5 M1587 409.4 H1607 M1594.6 398.5 L1593 415.5 M1599.4 398.5 L1601 415.5" fill="none" stroke="#e6e6e6" stroke-width="1.8" stroke-linejoin="round"/></svg>
<div style="left:676.50px;top:1104.40px;width:230.30px;height:35.20px;background:#181818;border-radius:5px;"></div>
<svg style="left:690px;top:1116px;" width="10" height="12" viewBox="0 0 10 12"><path d="M2.5 1 L7.5 6 L2.5 11" fill="none" stroke="#c0c0c0" stroke-width="1.4" stroke-linecap="round" stroke-linejoin="round"/></svg>
<span class="t" style="left:707.3px;top:1110.0px;line-height:24px;font-size:16.8px;color:#c8c8c8;">移动</span>
</div>
<div style="left:0;top:0;width:1085.3px;height:1108px;border-radius:8px;box-shadow:inset 0 0 0 1px rgba(255,255,255,0.15);"></div>
</div>
<div style="left:1675.5px;top:39px;width:427.2px;height:386.5px;background:#282828;border-radius:8px;overflow:hidden;">
<div style="left:-1675.5px;top:-39px;width:0;height:0">
<div style="left:1675.50px;top:91.00px;width:427.20px;height:29.00px;background:#2b2b2b;"></div>
<div style="left:1675.50px;top:149.00px;width:427.20px;height:29.00px;background:#2b2b2b;"></div>
<div style="left:1675.50px;top:207.00px;width:427.20px;height:29.00px;background:#2b2b2b;"></div>
<div style="left:1680.50px;top:236.50px;width:419.20px;height:27.40px;background:#334c80;border-radius:4px;"></div>
<div style="left:1675.50px;top:265.00px;width:427.20px;height:29.00px;background:#2b2b2b;"></div>
<div style="left:1675.50px;top:323.00px;width:427.20px;height:29.00px;background:#2b2b2b;"></div>
<div style="left:1675.50px;top:381.00px;width:427.20px;height:29.00px;background:#2b2b2b;"></div>
<div style="left:1718.00px;top:76.00px;width:1.00px;height:350.00px;background:#4a4a4a;"></div>
<svg style="left:1743.1px;top:70.3px;" width="10.4" height="12.4" viewBox="0 0 10.4 12.4"><path d="M2.7 1 L7.7 6.2 L2.7 11.4" fill="none" stroke="#c8c8c8" stroke-width="1.5" stroke-linecap="round" stroke-linejoin="round"/></svg>
<svg style="left:1766.8px;top:65.5px;" width="22.4" height="22.4" viewBox="0 0 20 20"><path d="M2.6 3.4 H17.4 L10 17.2 Z" fill="none" stroke="#d58a4e" stroke-width="3.3" stroke-linejoin="round"/></svg>
<span class="t" style="left:1797.7px;top:65.9px;line-height:24px;font-size:16.8px;color:#e0e0e0;letter-spacing:0.35px;">柱体.008</span>
<svg style="left:1899.7px;top:65.5px;" width="22" height="22" viewBox="0 0 20 20"><path d="M13.5 1.8 A4.6 4.6 0 0 0 9.3 8.3 L2.3 15.3 A1.7 1.7 0 0 0 4.7 17.7 L11.7 10.7 A4.6 4.6 0 0 0 18.2 6.5 L15.4 9 L12.2 7.8 L11 4.6 Z" fill="none" stroke="#6d8fe0" stroke-width="1.4" stroke-linejoin="round"/></svg>
<svg style="left:1929px;top:65.0px;" width="22" height="22" viewBox="0 0 20 20"><path d="M3.5 3.5 H16.5 L10 16.5 Z" fill="none" stroke="#1fc79a" stroke-width="1.3"/><rect x="1.6" y="1.6" width="3.8" height="3.8" fill="#282828" stroke="#1fc79a" stroke-width="1.2"/><rect x="14.6" y="1.6" width="3.8" height="3.8" fill="#282828" stroke="#1fc79a" stroke-width="1.2"/><rect x="8.1" y="14.6" width="3.8" height="3.8" fill="#282828" stroke="#1fc79a" stroke-width="1.2"/></svg>
<svg style="left:2034.6px;top:65.7px;" width="21.5" height="21.5" viewBox="0 0 20 20"><path d="M0.3 10 C4 2.6 16 2.6 19.7 10 C16 17.4 4 17.4 0.3 10 Z" fill="#e6e6e6"/><circle cx="10" cy="10" r="4.9" fill="#282828"/><circle cx="10" cy="10" r="2.8" fill="#e6e6e6"/></svg>
<svg style="left:2064.3px;top:66.3px;" width="20.6" height="20.6" viewBox="0 0 20 20"><path d="M0.5 4.8 H5 L6.3 2.2 H13.7 L15 4.8 H19.5 V18 H0.5 Z" fill="#e6e6e6"/><circle cx="10" cy="11.2" r="5.2" fill="#282828"/><circle cx="10" cy="11.2" r="3.9" fill="#e6e6e6"/><circle cx="10" cy="11.2" r="2.5" fill="#282828"/></svg>
<svg style="left:1743.1px;top:99.3px;" width="10.4" height="12.4" viewBox="0 0 10.4 12.4"><path d="M2.7 1 L7.7 6.2 L2.7 11.4" fill="none" stroke="#c8c8c8" stroke-width="1.5" stroke-linecap="round" stroke-linejoin="round"/></svg>
<svg style="left:1766.8px;top:94.5px;" width="22.4" height="22.4" viewBox="0 0 20 20"><path d="M2.6 3.4 H17.4 L10 17.2 Z" fill="none" stroke="#d58a4e" stroke-width="3.3" stroke-linejoin="round"/></svg>
<span class="t" style="left:1797.7px;top:94.9px;line-height:24px;font-size:16.8px;color:#e0e0e0;letter-spacing:0.35px;">柱体.009</span>
<svg style="left:1899.7px;top:94.0px;" width="22" height="22" viewBox="0 0 20 20"><path d="M3.5 3.5 H16.5 L10 16.5 Z" fill="none" stroke="#1fc79a" stroke-width="1.3"/><rect x="1.6" y="1.6" width="3.8" height="3.8" fill="#2b2b2b" stroke="#1fc79a" stroke-width="1.2"/><rect x="14.6" y="1.6" width="3.8" height="3.8" fill="#2b2b2b" stroke="#1fc79a" stroke-width="1.2"/><rect x="8.1" y="14.6" width="3.8" height="3.8" fill="#2b2b2b" stroke="#1fc79a" stroke-width="1.2"/></svg>
<svg style="left:2034.6px;top:94.7px;" width="21.5" height="21.5" viewBox="0 0 20 20"><path d="M0.3 10 C4 2.6 16 2.6 19.7 10 C16 17.4 4 17.4 0.3 10 Z" fill="#e6e6e6"/><circle cx="10" cy="10" r="4.9" fill="#2b2b2b"/><circle cx="10" cy="10" r="2.8" fill="#e6e6e6"/></svg>
<svg style="left:2064.3px;top:95.3px;" width="20.6" height="20.6" viewBox="0 0 20 20"><path d="M0.5 4.8 H5 L6.3 2.2 H13.7 L15 4.8 H19.5 V18 H0.5 Z" fill="#e6e6e6"/><circle cx="10" cy="11.2" r="5.2" fill="#2b2b2b"/><circle cx="10" cy="11.2" r="3.9" fill="#e6e6e6"/><circle cx="10" cy="11.2" r="2.5" fill="#2b2b2b"/></svg>
<svg style="left:1743.1px;top:128.3px;" width="10.4" height="12.4" viewBox="0 0 10.4 12.4"><path d="M2.7 1 L7.7 6.2 L2.7 11.4" fill="none" stroke="#c8c8c8" stroke-width="1.5" stroke-linecap="round" stroke-linejoin="round"/></svg>
<svg style="left:1766.8px;top:123.5px;" width="22.4" height="22.4" viewBox="0 0 20 20"><path d="M2.6 3.4 H17.4 L10 17.2 Z" fill="none" stroke="#d58a4e" stroke-width="3.3" stroke-linejoin="round"/></svg>
<span class="t" style="left:1797.7px;top:123.9px;line-height:24px;font-size:16.8px;color:#e0e0e0;letter-spacing:0.35px;">柱体.010</span>
<svg style="left:1899.7px;top:123.0px;" width="22" height="22" viewBox="0 0 20 20"><path d="M3.5 3.5 H16.5 L10 16.5 Z" fill="none" stroke="#1fc79a" stroke-width="1.3"/><rect x="1.6" y="1.6" width="3.8" height="3.8" fill="#282828" stroke="#1fc79a" stroke-width="1.2"/><rect x="14.6" y="1.6" width="3.8" height="3.8" fill="#282828" stroke="#1fc79a" stroke-width="1.2"/><rect x="8.1" y="14.6" width="3.8" height="3.8" fill="#282828" stroke="#1fc79a" stroke-width="1.2"/></svg>
<svg style="left:2034.6px;top:123.7px;" width="21.5" height="21.5" viewBox="0 0 20 20"><path d="M0.3 10 C4 2.6 16 2.6 19.7 10 C16 17.4 4 17.4 0.3 10 Z" fill="#e6e6e6"/><circle cx="10" cy="10" r="4.9" fill="#282828"/><circle cx="10" cy="10" r="2.8" fill="#e6e6e6"/></svg>
<svg style="left:2064.3px;top:124.3px;" width="20.6" height="20.6" viewBox="0 0 20 20"><path d="M0.5 4.8 H5 L6.3 2.2 H13.7 L15 4.8 H19.5 V18 H0.5 Z" fill="#e6e6e6"/><circle cx="10" cy="11.2" r="5.2" fill="#282828"/><circle cx="10" cy="11.2" r="3.9" fill="#e6e6e6"/><circle cx="10" cy="11.2" r="2.5" fill="#282828"/></svg>
<svg style="left:1743.1px;top:157.3px;" width="10.4" height="12.4" viewBox="0 0 10.4 12.4"><path d="M2.7 1 L7.7 6.2 L2.7 11.4" fill="none" stroke="#c8c8c8" stroke-width="1.5" stroke-linecap="round" stroke-linejoin="round"/></svg>
<svg style="left:1766.8px;top:152.5px;" width="22.4" height="22.4" viewBox="0 0 20 20"><path d="M2.6 3.4 H17.4 L10 17.2 Z" fill="none" stroke="#d58a4e" stroke-width="3.3" stroke-linejoin="round"/></svg>
<span class="t" style="left:1797.7px;top:152.9px;line-height:24px;font-size:16.8px;color:#e0e0e0;letter-spacing:0.35px;">柱体.011</span>
<svg style="left:1899.7px;top:152.0px;" width="22" height="22" viewBox="0 0 20 20"><path d="M3.5 3.5 H16.5 L10 16.5 Z" fill="none" stroke="#1fc79a" stroke-width="1.3"/><rect x="1.6" y="1.6" width="3.8" height="3.8" fill="#2b2b2b" stroke="#1fc79a" stroke-width="1.2"/><rect x="14.6" y="1.6" width="3.8" height="3.8" fill="#2b2b2b" stroke="#1fc79a" stroke-width="1.2"/><rect x="8.1" y="14.6" width="3.8" height="3.8" fill="#2b2b2b" stroke="#1fc79a" stroke-width="1.2"/></svg>
<svg style="left:2034.6px;top:152.7px;" width="21.5" height="21.5" viewBox="0 0 20 20"><path d="M0.3 10 C4 2.6 16 2.6 19.7 10 C16 17.4 4 17.4 0.3 10 Z" fill="#e6e6e6"/><circle cx="10" cy="10" r="4.9" fill="#2b2b2b"/><circle cx="10" cy="10" r="2.8" fill="#e6e6e6"/></svg>
<svg style="left:2064.3px;top:153.3px;" width="20.6" height="20.6" viewBox="0 0 20 20"><path d="M0.5 4.8 H5 L6.3 2.2 H13.7 L15 4.8 H19.5 V18 H0.5 Z" fill="#e6e6e6"/><circle cx="10" cy="11.2" r="5.2" fill="#2b2b2b"/><circle cx="10" cy="11.2" r="3.9" fill="#e6e6e6"/><circle cx="10" cy="11.2" r="2.5" fill="#2b2b2b"/></svg>
<svg style="left:1743.1px;top:186.3px;" width="10.4" height="12.4" viewBox="0 0 10.4 12.4"><path d="M2.7 1 L7.7 6.2 L2.7 11.4" fill="none" stroke="#c8c8c8" stroke-width="1.5" stroke-linecap="round" stroke-linejoin="round"/></svg>
<svg style="left:1766.8px;top:181.5px;" width="22.4" height="22.4" viewBox="0 0 20 20"><path d="M2.6 3.4 H17.4 L10 17.2 Z" fill="none" stroke="#d58a4e" stroke-width="3.3" stroke-linejoin="round"/></svg>
<span class="t" style="left:1797.7px;top:181.9px;line-height:24px;font-size:16.8px;color:#e0e0e0;letter-spacing:0.35px;">柱体.012</span>
<svg style="left:1899.7px;top:181.0px;" width="22" height="22" viewBox="0 0 20 20"><path d="M3.5 3.5 H16.5 L10 16.5 Z" fill="none" stroke="#1fc79a" stroke-width="1.3"/><rect x="1.6" y="1.6" width="3.8" height="3.8" fill="#282828" stroke="#1fc79a" stroke-width="1.2"/><rect x="14.6" y="1.6" width="3.8" height="3.8" fill="#282828" stroke="#1fc79a" stroke-width="1.2"/><rect x="8.1" y="14.6" width="3.8" height="3.8" fill="#282828" stroke="#1fc79a" stroke-width="1.2"/></svg>
<svg style="left:2034.6px;top:181.7px;" width="21.5" height="21.5" viewBox="0 0 20 20"><path d="M0.3 10 C4 2.6 16 2.6 19.7 10 C16 17.4 4 17.4 0.3 10 Z" fill="#e6e6e6"/><circle cx="10" cy="10" r="4.9" fill="#282828"/><circle cx="10" cy="10" r="2.8" fill="#e6e6e6"/></svg>
<svg style="left:2064.3px;top:182.3px;" width="20.6" height="20.6" viewBox="0 0 20 20"><path d="M0.5 4.8 H5 L6.3 2.2 H13.7 L15 4.8 H19.5 V18 H0.5 Z" fill="#e6e6e6"/><circle cx="10" cy="11.2" r="5.2" fill="#282828"/><circle cx="10" cy="11.2" r="3.9" fill="#e6e6e6"/><circle cx="10" cy="11.2" r="2.5" fill="#282828"/></svg>
<svg style="left:1743.1px;top:215.3px;" width="10.4" height="12.4" viewBox="0 0 10.4 12.4"><path d="M2.7 1 L7.7 6.2 L2.7 11.4" fill="none" stroke="#c8c8c8" stroke-width="1.5" stroke-linecap="round" stroke-linejoin="round"/></svg>
<svg style="left:1766.8px;top:210.5px;" width="22.4" height="22.4" viewBox="0 0 20 20"><path d="M10 1.2 A6.6 6.6 0 0 1 14 13 V14.3 H6 V13 A6.6 6.6 0 0 1 10 1.2 Z" fill="#d58a4e"/><path d="M6.3 15.7 H13.7 M7.6 17.9 H12.4" stroke="#d58a4e" stroke-width="1.4" stroke-linecap="round"/><path d="M7 8 L8 12.5 M13 8 L12 12.5 M7.3 9.5 H12.7" stroke="#2b2b2b" stroke-width="1.1" fill="none"/></svg>
<span class="t" style="left:1797.7px;top:210.9px;line-height:24px;font-size:16.8px;color:#e0e0e0;letter-spacing:0.35px;">点光</span>
<svg style="left:1863.2px;top:209.5px;" width="22" height="22" viewBox="0 0 20 20"><path d="M7 15.8 A7.2 7.2 0 1 1 13 15.8" fill="none" stroke="#1fc79a" stroke-width="1.3" stroke-linecap="round"/><circle cx="10" cy="9" r="1.5" fill="#1fc79a"/><path d="M10 11 V19.5" stroke="#1fc79a" stroke-width="1.2" stroke-dasharray="2.2 1.4"/></svg>
<svg style="left:2034.6px;top:210.7px;" width="21.5" height="21.5" viewBox="0 0 20 20"><path d="M0.3 10 C4 2.6 16 2.6 19.7 10 C16 17.4 4 17.4 0.3 10 Z" fill="#e6e6e6"/><circle cx="10" cy="10" r="4.9" fill="#2b2b2b"/><circle cx="10" cy="10" r="2.8" fill="#e6e6e6"/></svg>
<svg style="left:2064.3px;top:211.3px;" width="20.6" height="20.6" viewBox="0 0 20 20"><path d="M0.5 4.8 H5 L6.3 2.2 H13.7 L15 4.8 H19.5 V18 H0.5 Z" fill="#e6e6e6"/><circle cx="10" cy="11.2" r="5.2" fill="#2b2b2b"/><circle cx="10" cy="11.2" r="3.9" fill="#e6e6e6"/><circle cx="10" cy="11.2" r="2.5" fill="#2b2b2b"/></svg>
<svg style="left:1743.1px;top:244.3px;" width="10.4" height="12.4" viewBox="0 0 10.4 12.4"><path d="M2.7 1 L7.7 6.2 L2.7 11.4" fill="none" stroke="#c8c8c8" stroke-width="1.5" stroke-linecap="round" stroke-linejoin="round"/></svg>
<div style="left:1763.30px;top:236.30px;width:29.40px;height:28.40px;background:rgba(255,255,255,0.16);border-radius:5.7px;border:1px solid rgba(255,255,255,0.18);"></div>
<svg style="left:1766.8px;top:239.5px;" width="22.4" height="22.4" viewBox="0 0 20 20"><path d="M10 1.2 A6.6 6.6 0 0 1 14 13 V14.3 H6 V13 A6.6 6.6 0 0 1 10 1.2 Z" fill="#d58a4e"/><path d="M6.3 15.7 H13.7 M7.6 17.9 H12.4" stroke="#d58a4e" stroke-width="1.4" stroke-linecap="round"/><path d="M7 8 L8 12.5 M13 8 L12 12.5 M7.3 9.5 H12.7" stroke="#5a5560" stroke-width="1.1" fill="none"/></svg>
<span class="t" style="left:1797.7px;top:239.9px;line-height:24px;font-size:16.8px;color:#f0a93a;letter-spacing:0.35px;">点光.001</span>
<svg style="left:1900.3px;top:238.5px;" width="22" height="22" viewBox="0 0 20 20"><path d="M7 15.8 A7.2 7.2 0 1 1 13 15.8" fill="none" stroke="#1fc79a" stroke-width="1.3" stroke-linecap="round"/><circle cx="10" cy="9" r="1.5" fill="#1fc79a"/><path d="M10 11 V19.5" stroke="#1fc79a" stroke-width="1.2" stroke-dasharray="2.2 1.4"/></svg>
<svg style="left:2034.6px;top:239.7px;" width="21.5" height="21.5" viewBox="0 0 20 20"><path d="M0.3 10 C4 2.6 16 2.6 19.7 10 C16 17.4 4 17.4 0.3 10 Z" fill="#e6e6e6"/><circle cx="10" cy="10" r="4.9" fill="#334c80"/><circle cx="10" cy="10" r="2.8" fill="#e6e6e6"/></svg>
<svg style="left:2064.3px;top:240.3px;" width="20.6" height="20.6" viewBox="0 0 20 20"><path d="M0.5 4.8 H5 L6.3 2.2 H13.7 L15 4.8 H19.5 V18 H0.5 Z" fill="#e6e6e6"/><circle cx="10" cy="11.2" r="5.2" fill="#334c80"/><circle cx="10" cy="11.2" r="3.9" fill="#e6e6e6"/><circle cx="10" cy="11.2" r="2.5" fill="#334c80"/></svg>
<svg style="left:1743.1px;top:273.3px;" width="10.4" height="12.4" viewBox="0 0 10.4 12.4"><path d="M2.7 1 L7.7 6.2 L2.7 11.4" fill="none" stroke="#c8c8c8" stroke-width="1.5" stroke-linecap="round" stroke-linejoin="round"/></svg>
<svg style="left:1766.8px;top:268.5px;" width="22.4" height="22.4" viewBox="0 0 20 20"><path d="M2.6 3.4 H17.4 L10 17.2 Z" fill="none" stroke="#d58a4e" stroke-width="3.3" stroke-linejoin="round"/></svg>
<span class="t" style="left:1797.7px;top:268.9px;line-height:24px;font-size:16.8px;color:#e0e0e0;letter-spacing:0.35px;">球体</span>
<svg style="left:1863.2px;top:268.5px;" width="22" height="22" viewBox="0 0 20 20"><path d="M13.5 1.8 A4.6 4.6 0 0 0 9.3 8.3 L2.3 15.3 A1.7 1.7 0 0 0 4.7 17.7 L11.7 10.7 A4.6 4.6 0 0 0 18.2 6.5 L15.4 9 L12.2 7.8 L11 4.6 Z" fill="none" stroke="#6d8fe0" stroke-width="1.4" stroke-linejoin="round"/></svg>
<svg style="left:1891.6px;top:268.0px;" width="22" height="22" viewBox="0 0 20 20"><path d="M3.5 3.5 H16.5 L10 16.5 Z" fill="none" stroke="#1fc79a" stroke-width="1.3"/><rect x="1.6" y="1.6" width="3.8" height="3.8" fill="#2b2b2b" stroke="#1fc79a" stroke-width="1.2"/><rect x="14.6" y="1.6" width="3.8" height="3.8" fill="#2b2b2b" stroke="#1fc79a" stroke-width="1.2"/><rect x="8.1" y="14.6" width="3.8" height="3.8" fill="#2b2b2b" stroke="#1fc79a" stroke-width="1.2"/></svg>
<svg style="left:2034.6px;top:268.7px;" width="21.5" height="21.5" viewBox="0 0 20 20"><path d="M0.3 10 C4 2.6 16 2.6 19.7 10 C16 17.4 4 17.4 0.3 10 Z" fill="#e6e6e6"/><circle cx="10" cy="10" r="4.9" fill="#2b2b2b"/><circle cx="10" cy="10" r="2.8" fill="#e6e6e6"/></svg>
<svg style="left:2064.3px;top:269.3px;" width="20.6" height="20.6" viewBox="0 0 20 20"><path d="M0.5 4.8 H5 L6.3 2.2 H13.7 L15 4.8 H19.5 V18 H0.5 Z" fill="#e6e6e6"/><circle cx="10" cy="11.2" r="5.2" fill="#2b2b2b"/><circle cx="10" cy="11.2" r="3.9" fill="#e6e6e6"/><circle cx="10" cy="11.2" r="2.5" fill="#2b2b2b"/></svg>
<svg style="left:1743.1px;top:302.3px;" width="10.4" height="12.4" viewBox="0 0 10.4 12.4"><path d="M2.7 1 L7.7 6.2 L2.7 11.4" fill="none" stroke="#c8c8c8" stroke-width="1.5" stroke-linecap="round" stroke-linejoin="round"/></svg>
<svg style="left:1766.8px;top:297.5px;" width="22.4" height="22.4" viewBox="0 0 20 20"><path d="M2.6 3.4 H17.4 L10 17.2 Z" fill="none" stroke="#d58a4e" stroke-width="3.3" stroke-linejoin="round"/></svg>
<span class="t" style="left:1797.7px;top:297.9px;line-height:24px;font-size:16.8px;color:#e0e0e0;letter-spacing:0.35px;">球体.001</span>
<svg style="left:1899.7px;top:297.5px;" width="22" height="22" viewBox="0 0 20 20"><path d="M13.5 1.8 A4.6 4.6 0 0 0 9.3 8.3 L2.3 15.3 A1.7 1.7 0 0 0 4.7 17.7 L11.7 10.7 A4.6 4.6 0 0 0 18.2 6.5 L15.4 9 L12.2 7.8 L11 4.6 Z" fill="none" stroke="#6d8fe0" stroke-width="1.4" stroke-linejoin="round"/></svg>
<svg style="left:1929px;top:297.0px;" width="22" height="22" viewBox="0 0 20 20"><path d="M3.5 3.5 H16.5 L10 16.5 Z" fill="none" stroke="#1fc79a" stroke-width="1.3"/><rect x="1.6" y="1.6" width="3.8" height="3.8" fill="#282828" stroke="#1fc79a" stroke-width="1.2"/><rect x="14.6" y="1.6" width="3.8" height="3.8" fill="#282828" stroke="#1fc79a" stroke-width="1.2"/><rect x="8.1" y="14.6" width="3.8" height="3.8" fill="#282828" stroke="#1fc79a" stroke-width="1.2"/></svg>
<svg style="left:2034.6px;top:297.7px;" width="21.5" height="21.5" viewBox="0 0 20 20"><path d="M0.3 10 C4 2.6 16 2.6 19.7 10 C16 17.4 4 17.4 0.3 10 Z" fill="#e6e6e6"/><circle cx="10" cy="10" r="4.9" fill="#282828"/><circle cx="10" cy="10" r="2.8" fill="#e6e6e6"/></svg>
<svg style="left:2064.3px;top:298.3px;" width="20.6" height="20.6" viewBox="0 0 20 20"><path d="M0.5 4.8 H5 L6.3 2.2 H13.7 L15 4.8 H19.5 V18 H0.5 Z" fill="#e6e6e6"/><circle cx="10" cy="11.2" r="5.2" fill="#282828"/><circle cx="10" cy="11.2" r="3.9" fill="#e6e6e6"/><circle cx="10" cy="11.2" r="2.5" fill="#282828"/></svg>
<svg style="left:1743.1px;top:331.3px;" width="10.4" height="12.4" viewBox="0 0 10.4 12.4"><path d="M2.7 1 L7.7 6.2 L2.7 11.4" fill="none" stroke="#c8c8c8" stroke-width="1.5" stroke-linecap="round" stroke-linejoin="round"/></svg>
<svg style="left:1766.8px;top:326.5px;" width="22.4" height="22.4" viewBox="0 0 20 20"><path d="M2.6 3.4 H17.4 L10 17.2 Z" fill="none" stroke="#d58a4e" stroke-width="3.3" stroke-linejoin="round"/></svg>
<span class="t" style="left:1797.7px;top:326.9px;line-height:24px;font-size:16.8px;color:#e0e0e0;letter-spacing:0.35px;">立方体</span>
<svg style="left:1880.3px;top:326.5px;" width="22" height="22" viewBox="0 0 20 20"><path d="M13.5 1.8 A4.6 4.6 0 0 0 9.3 8.3 L2.3 15.3 A1.7 1.7 0 0 0 4.7 17.7 L11.7 10.7 A4.6 4.6 0 0 0 18.2 6.5 L15.4 9 L12.2 7.8 L11 4.6 Z" fill="none" stroke="#6d8fe0" stroke-width="1.4" stroke-linejoin="round"/></svg>
<svg style="left:1908.7px;top:326.0px;" width="22" height="22" viewBox="0 0 20 20"><path d="M3.5 3.5 H16.5 L10 16.5 Z" fill="none" stroke="#1fc79a" stroke-width="1.3"/><rect x="1.6" y="1.6" width="3.8" height="3.8" fill="#2b2b2b" stroke="#1fc79a" stroke-width="1.2"/><rect x="14.6" y="1.6" width="3.8" height="3.8" fill="#2b2b2b" stroke="#1fc79a" stroke-width="1.2"/><rect x="8.1" y="14.6" width="3.8" height="3.8" fill="#2b2b2b" stroke="#1fc79a" stroke-width="1.2"/></svg>
<svg style="left:2034.6px;top:326.7px;" width="21.5" height="21.5" viewBox="0 0 20 20"><path d="M0.3 10 C4 2.6 16 2.6 19.7 10 C16 17.4 4 17.4 0.3 10 Z" fill="#e6e6e6"/><circle cx="10" cy="10" r="4.9" fill="#2b2b2b"/><circle cx="10" cy="10" r="2.8" fill="#e6e6e6"/></svg>
<svg style="left:2064.3px;top:327.3px;" width="20.6" height="20.6" viewBox="0 0 20 20"><path d="M0.5 4.8 H5 L6.3 2.2 H13.7 L15 4.8 H19.5 V18 H0.5 Z" fill="#e6e6e6"/><circle cx="10" cy="11.2" r="5.2" fill="#2b2b2b"/><circle cx="10" cy="11.2" r="3.9" fill="#e6e6e6"/><circle cx="10" cy="11.2" r="2.5" fill="#2b2b2b"/></svg>
<svg style="left:1743.1px;top:360.3px;" width="10.4" height="12.4" viewBox="0 0 10.4 12.4"><path d="M2.7 1 L7.7 6.2 L2.7 11.4" fill="none" stroke="#c8c8c8" stroke-width="1.5" stroke-linecap="round" stroke-linejoin="round"/></svg>
<svg style="left:1766.8px;top:355.5px;" width="22.4" height="22.4" viewBox="0 0 20 20"><path d="M2.6 3.4 H17.4 L10 17.2 Z" fill="none" stroke="#d58a4e" stroke-width="3.3" stroke-linejoin="round"/></svg>
<span class="t" style="left:1797.7px;top:355.9px;line-height:24px;font-size:16.8px;color:#e0e0e0;letter-spacing:0.35px;">立方体.001</span>
<svg style="left:1916.8px;top:355.5px;" width="22" height="22" viewBox="0 0 20 20"><path d="M13.5 1.8 A4.6 4.6 0 0 0 9.3 8.3 L2.3 15.3 A1.7 1.7 0 0 0 4.7 17.7 L11.7 10.7 A4.6 4.6 0 0 0 18.2 6.5 L15.4 9 L12.2 7.8 L11 4.6 Z" fill="none" stroke="#6d8fe0" stroke-width="1.4" stroke-linejoin="round"/></svg>
<svg style="left:1946px;top:355.0px;" width="22" height="22" viewBox="0 0 20 20"><path d="M3.5 3.5 H16.5 L10 16.5 Z" fill="none" stroke="#1fc79a" stroke-width="1.3"/><rect x="1.6" y="1.6" width="3.8" height="3.8" fill="#282828" stroke="#1fc79a" stroke-width="1.2"/><rect x="14.6" y="1.6" width="3.8" height="3.8" fill="#282828" stroke="#1fc79a" stroke-width="1.2"/><rect x="8.1" y="14.6" width="3.8" height="3.8" fill="#282828" stroke="#1fc79a" stroke-width="1.2"/></svg>
<svg style="left:2034.6px;top:355.7px;" width="21.5" height="21.5" viewBox="0 0 20 20"><path d="M0.3 10 C4 2.6 16 2.6 19.7 10 C16 17.4 4 17.4 0.3 10 Z" fill="#e6e6e6"/><circle cx="10" cy="10" r="4.9" fill="#282828"/><circle cx="10" cy="10" r="2.8" fill="#e6e6e6"/></svg>
<svg style="left:2064.3px;top:356.3px;" width="20.6" height="20.6" viewBox="0 0 20 20"><path d="M0.5 4.8 H5 L6.3 2.2 H13.7 L15 4.8 H19.5 V18 H0.5 Z" fill="#e6e6e6"/><circle cx="10" cy="11.2" r="5.2" fill="#282828"/><circle cx="10" cy="11.2" r="3.9" fill="#e6e6e6"/><circle cx="10" cy="11.2" r="2.5" fill="#282828"/></svg>
<svg style="left:1743.1px;top:389.3px;" width="10.4" height="12.4" viewBox="0 0 10.4 12.4"><path d="M2.7 1 L7.7 6.2 L2.7 11.4" fill="none" stroke="#c8c8c8" stroke-width="1.5" stroke-linecap="round" stroke-linejoin="round"/></svg>
<svg style="left:1766.8px;top:384.5px;" width="22.4" height="22.4" viewBox="0 0 20 20"><path d="M2.6 3.4 H17.4 L10 17.2 Z" fill="none" stroke="#d58a4e" stroke-width="3.3" stroke-linejoin="round"/></svg>
<span class="t" style="left:1797.7px;top:384.9px;line-height:24px;font-size:16.8px;color:#e0e0e0;letter-spacing:0.35px;">立方体.002</span>
<svg style="left:1916.8px;top:384.5px;" width="22" height="22" viewBox="0 0 20 20"><path d="M13.5 1.8 A4.6 4.6 0 0 0 9.3 8.3 L2.3 15.3 A1.7 1.7 0 0 0 4.7 17.7 L11.7 10.7 A4.6 4.6 0 0 0 18.2 6.5 L15.4 9 L12.2 7.8 L11 4.6 Z" fill="none" stroke="#6d8fe0" stroke-width="1.4" stroke-linejoin="round"/></svg>
<svg style="left:1946px;top:384.0px;" width="22" height="22" viewBox="0 0 20 20"><path d="M3.5 3.5 H16.5 L10 16.5 Z" fill="none" stroke="#1fc79a" stroke-width="1.3"/><rect x="1.6" y="1.6" width="3.8" height="3.8" fill="#2b2b2b" stroke="#1fc79a" stroke-width="1.2"/><rect x="14.6" y="1.6" width="3.8" height="3.8" fill="#2b2b2b" stroke="#1fc79a" stroke-width="1.2"/><rect x="8.1" y="14.6" width="3.8" height="3.8" fill="#2b2b2b" stroke="#1fc79a" stroke-width="1.2"/></svg>
<svg style="left:2034.6px;top:384.7px;" width="21.5" height="21.5" viewBox="0 0 20 20"><path d="M0.3 10 C4 2.6 16 2.6 19.7 10 C16 17.4 4 17.4 0.3 10 Z" fill="#e6e6e6"/><circle cx="10" cy="10" r="4.9" fill="#2b2b2b"/><circle cx="10" cy="10" r="2.8" fill="#e6e6e6"/></svg>
<svg style="left:2064.3px;top:385.3px;" width="20.6" height="20.6" viewBox="0 0 20 20"><path d="M0.5 4.8 H5 L6.3 2.2 H13.7 L15 4.8 H19.5 V18 H0.5 Z" fill="#e6e6e6"/><circle cx="10" cy="11.2" r="5.2" fill="#2b2b2b"/><circle cx="10" cy="11.2" r="3.9" fill="#e6e6e6"/><circle cx="10" cy="11.2" r="2.5" fill="#2b2b2b"/></svg>
<svg style="left:1743.1px;top:418.3px;" width="10.4" height="12.4" viewBox="0 0 10.4 12.4"><path d="M2.7 1 L7.7 6.2 L2.7 11.4" fill="none" stroke="#c8c8c8" stroke-width="1.5" stroke-linecap="round" stroke-linejoin="round"/></svg>
<svg style="left:1766.8px;top:413.5px;" width="22.4" height="22.4" viewBox="0 0 20 20"><path d="M2.6 3.4 H17.4 L10 17.2 Z" fill="none" stroke="#d58a4e" stroke-width="3.3" stroke-linejoin="round"/></svg>
<span class="t" style="left:1797.7px;top:413.9px;line-height:24px;font-size:16.8px;color:#e0e0e0;letter-spacing:0.35px;">立方体.003</span>
<svg style="left:1916.8px;top:413.5px;" width="22" height="22" viewBox="0 0 20 20"><path d="M13.5 1.8 A4.6 4.6 0 0 0 9.3 8.3 L2.3 15.3 A1.7 1.7 0 0 0 4.7 17.7 L11.7 10.7 A4.6 4.6 0 0 0 18.2 6.5 L15.4 9 L12.2 7.8 L11 4.6 Z" fill="none" stroke="#6d8fe0" stroke-width="1.4" stroke-linejoin="round"/></svg>
<svg style="left:1946px;top:413.0px;" width="22" height="22" viewBox="0 0 20 20"><path d="M3.5 3.5 H16.5 L10 16.5 Z" fill="none" stroke="#1fc79a" stroke-width="1.3"/><rect x="1.6" y="1.6" width="3.8" height="3.8" fill="#282828" stroke="#1fc79a" stroke-width="1.2"/><rect x="14.6" y="1.6" width="3.8" height="3.8" fill="#282828" stroke="#1fc79a" stroke-width="1.2"/><rect x="8.1" y="14.6" width="3.8" height="3.8" fill="#282828" stroke="#1fc79a" stroke-width="1.2"/></svg>
<svg style="left:2034.6px;top:413.7px;" width="21.5" height="21.5" viewBox="0 0 20 20"><path d="M0.3 10 C4 2.6 16 2.6 19.7 10 C16 17.4 4 17.4 0.3 10 Z" fill="#e6e6e6"/><circle cx="10" cy="10" r="4.9" fill="#282828"/><circle cx="10" cy="10" r="2.8" fill="#e6e6e6"/></svg>
<svg style="left:2064.3px;top:414.3px;" width="20.6" height="20.6" viewBox="0 0 20 20"><path d="M0.5 4.8 H5 L6.3 2.2 H13.7 L15 4.8 H19.5 V18 H0.5 Z" fill="#e6e6e6"/><circle cx="10" cy="11.2" r="5.2" fill="#282828"/><circle cx="10" cy="11.2" r="3.9" fill="#e6e6e6"/><circle cx="10" cy="11.2" r="2.5" fill="#282828"/></svg>
<div style="left:2094.50px;top:229.00px;width:4.00px;height:112.00px;background:#4d4d4d;border-radius:2px;"></div>
<div style="left:1675.50px;top:39.00px;width:427.20px;height:38.30px;background:#303030;"></div>
<div style="left:1687.60px;top:43.30px;width:46.70px;height:28.90px;background:#282828;border-radius:5.7px;border:1px solid #414141;"></div>
<svg style="left:1693px;top:46.5px;" width="22.5" height="22.5" viewBox="0 0 20 20"><rect x="2" y="1.5" width="7" height="3.5" fill="#e0e0e0"/><path d="M3.5 6 V16.5 H8 M3.5 10.5 H8" stroke="#e0e0e0" stroke-width="1.3" fill="none"/><rect x="9" y="8.5" width="9" height="3.6" fill="#e0e0e0"/><rect x="9" y="14.5" width="9" height="3.6" fill="#e0e0e0"/></svg>
<svg style="left:1718.8px;top:54.8px;" width="10.4" height="8.4" viewBox="0 0 10.4 8.4"><path d="M1 1.7000000000000002 L5.2 6.2 L9.4 1.7000000000000002" fill="none" stroke="#d8d8d8" stroke-width="1.5" stroke-linecap="round" stroke-linejoin="round"/></svg>
<div style="left:1740.60px;top:43.30px;width:46.70px;height:28.90px;background:#282828;border-radius:5.7px;border:1px solid #414141;"></div>
<svg style="left:1746px;top:46px;" width="22.5" height="22.5" viewBox="0 0 20 20"><path d="M3.5 6 V16.5 H14 M1.5 8.5 V18.5 H11.5" stroke="#e0e0e0" stroke-width="1.2" fill="none" opacity="0.8"/><rect x="6" y="1.5" width="12.5" height="12.5" rx="1" fill="#e0e0e0"/><path d="M7.5 12.5 L11 7.5 L13.5 10.5 L15 9 L17.3 12.5 Z" fill="#282828"/><circle cx="15" cy="5" r="1.4" fill="#282828"/></svg>
<svg style="left:1771.8px;top:54.8px;" width="10.4" height="8.4" viewBox="0 0 10.4 8.4"><path d="M1 1.7000000000000002 L5.2 6.2 L9.4 1.7000000000000002" fill="none" stroke="#d8d8d8" stroke-width="1.5" stroke-linecap="round" stroke-linejoin="round"/></svg>
<div style="left:1809.00px;top:43.30px;width:174.40px;height:28.90px;background:#1d1d1d;border-radius:5.7px;border:1px solid #343434;"></div>
<svg style="left:1816px;top:47.5px;" width="21" height="21" viewBox="0 0 20 20"><circle cx="8" cy="8" r="5.8" fill="none" stroke="#e0e0e0" stroke-width="1.6"/><path d="M12.3 12.3 L18 18" stroke="#e0e0e0" stroke-width="1.8" stroke-linecap="round"/></svg>
<span class="t" style="left:1848px;top:46.0px;line-height:24px;font-size:16.8px;color:#7c7c7c;">搜索</span>
<div style="left:2008.30px;top:43.30px;width:46.80px;height:28.90px;background:#282828;border-radius:5.7px;border:1px solid #414141;"></div>
<svg style="left:2012.5px;top:47px;" width="22" height="22" viewBox="0 0 20 20"><path d="M1.5 2.5 H18.5 L11.8 10.5 V18 L8.2 15.5 V10.5 Z" fill="none" stroke="#e0e0e0" stroke-width="1.3" stroke-linejoin="round"/></svg>
<svg style="left:2039.3px;top:54.8px;" width="10.4" height="8.4" viewBox="0 0 10.4 8.4"><path d="M1 1.7000000000000002 L5.2 6.2 L9.4 1.7000000000000002" fill="none" stroke="#d8d8d8" stroke-width="1.5" stroke-linecap="round" stroke-linejoin="round"/></svg>
<div style="left:2062.10px;top:43.30px;width:29.20px;height:28.90px;background:#545454;border-radius:5.7px;border:1px solid #414141;"></div>
<svg style="left:2065.5px;top:46.5px;" width="23" height="23" viewBox="0 0 20 20"><path d="M2.5 8.5 H15 V18 H2.5 Z M1.5 5 H13 V8.5 H1.5Z" fill="none" stroke="#e6e6e6" stroke-width="1.3" stroke-linejoin="round" opacity="0.75"/><path d="M6.5 12.5 H11" stroke="#e6e6e6" stroke-width="1.4" opacity="0.75"/><circle cx="15" cy="5.5" r="4.6" fill="#e6e6e6"/><path d="M15 3 V8 M12.5 5.5 H17.5" stroke="#545454" stroke-width="1.4"/></svg>
</div>
<div style="left:0;top:0;width:427.2px;height:386.5px;border-radius:8px;box-shadow:inset 0 0 0 1px rgba(255,255,255,0.06);"></div>
</div>
<div style="left:1675.5px;top:431.4px;width:427.2px;height:805px;background:#303030;border-radius:8px;overflow:hidden;">
<div style="left:-1675.5px;top:-431.4px;width:0;height:0">
<div style="left:1675.50px;top:469.30px;width:43.30px;height:770.00px;background:#181818;"></div>
<div style="left:1680.30px;top:481.70px;width:38.50px;height:38.00px;background:#1d1d1d;border-radius:5px 0 0 5px;"></div>
<svg style="left:1688.3px;top:489.2px;" width="23" height="23" viewBox="0 0 23 23"><path d="M5.5 1.5 V10.5" stroke="#b2b2b2" stroke-width="1.8"/><path d="M3.6 10.5 H7.4 V12.6 Q9 14 9 16.6 Q9 20.6 5.5 20.6 Q2 20.6 2 16.6 Q2 14 3.6 12.6 Z" fill="#b2b2b2"/><path d="M12.2 2 V6.6 Q12.2 9.4 15 10.2 V19.6 Q15 21 16.4 21 Q17.8 21 17.8 19.6 V10.2 Q20.6 9.4 20.6 6.6 V2 L18.4 3.6 V7 H14.4 V3.6 Z" fill="#b2b2b2"/></svg>
<div style="left:1680.30px;top:532.60px;width:38.50px;height:38.00px;background:#1d1d1d;border-radius:5px 0 0 5px;"></div>
<svg style="left:1688.3px;top:540.1px;" width="23" height="23" viewBox="0 0 23 23"><path d="M1.5 6.5 H5.5 L6.8 3.8 H13.5 L14.8 6.5 H21.5 V20 H1.5 Z" fill="#b2b2b2"/><rect x="16.5" y="3" width="3.6" height="2" fill="#b2b2b2"/><rect x="4" y="9" width="12" height="8.6" fill="#1d1d1d"/><path d="M4 11.2 H16 M4 13.3 H16 M4 15.4 H16" stroke="#b2b2b2" stroke-width="0.9"/><circle cx="18.8" cy="10.6" r="1.1" fill="#1d1d1d"/><circle cx="18.8" cy="15" r="1.1" fill="#1d1d1d"/></svg>
<div style="left:1680.30px;top:573.80px;width:38.50px;height:38.00px;background:#1d1d1d;border-radius:5px 0 0 5px;"></div>
<svg style="left:1688.3px;top:581.3px;" width="23" height="23" viewBox="0 0 23 23"><path d="M1.5 5.5 Q1.5 2.5 4.5 2.5 H18.5 Q21.5 2.5 21.5 5.5 V10 H18.5 V7.5 H4.5 V10 H1.5 Z" fill="#b2b2b2"/><path d="M5.5 9 H17.5 V21 H5.5 Z" fill="#b2b2b2"/><path d="M7.3 19 L11 13.5 L13.2 16.6 L14.4 15.4 L16 19 Z" fill="#1d1d1d"/><circle cx="14.6" cy="12" r="1.2" fill="#1d1d1d"/></svg>
<div style="left:1680.30px;top:614.00px;width:38.50px;height:38.00px;background:#1d1d1d;border-radius:5px 0 0 5px;"></div>
<svg style="left:1688.3px;top:621.5px;" width="23" height="23" viewBox="0 0 20 20"><path d="M3.5 6 V16.5 H14 M1.5 8.5 V18.5 H11.5" stroke="#b2b2b2" stroke-width="1.2" fill="none" opacity="0.8"/><rect x="6" y="1.5" width="12.5" height="12.5" rx="1" fill="#b2b2b2"/><path d="M7.5 12.5 L11 7.5 L13.5 10.5 L15 9 L17.3 12.5 Z" fill="#1d1d1d"/><circle cx="15" cy="5" r="1.4" fill="#1d1d1d"/></svg>
<div style="left:1680.30px;top:653.70px;width:38.50px;height:38.00px;background:#1d1d1d;border-radius:5px 0 0 5px;"></div>
<svg style="left:1688.3px;top:661.2px;" width="23" height="23" viewBox="0 0 20 20"><path d="M7 1.6 L11.6 13.2 Q7 16.4 1.6 13.2 Z" fill="#b2b2b2" stroke="#b2b2b2" stroke-width="0.8" stroke-linejoin="round"/><circle cx="15.6" cy="4.2" r="2.5" fill="#b2b2b2"/><circle cx="14" cy="14.2" r="4.3" fill="#1d1d1d" stroke="#b2b2b2" stroke-width="1.4"/><path d="M12 13.4 A2.2 2.2 0 0 1 13.6 12" stroke="#b2b2b2" stroke-width="0.9" fill="none" stroke-linecap="round"/></svg>
<div style="left:1680.30px;top:694.00px;width:38.50px;height:38.00px;background:#1d1d1d;border-radius:5px 0 0 5px;"></div>
<svg style="left:1688.3px;top:701.5px;" width="23" height="23" viewBox="0 0 20 20"><circle cx="10" cy="10.3" r="7.2" fill="none" stroke="#b8596a" stroke-width="1.4"/><path d="M4.2 7 C6 5.6 8.6 5.4 9.4 6.6 C10 7.8 8.4 8.4 8.8 9.6 C9.3 10.8 11.2 10.6 11.4 12.2 C11.6 14 10 14.4 9.6 16.4 C6.5 16.6 3.4 13.6 3.2 10.4 Z M12.4 3.8 C14.6 4.4 16.4 6.4 16.8 8.6 C15.6 9.4 14.2 9 13.4 7.8 C12.6 6.6 11.6 5.4 12.4 3.8 Z" fill="#b8596a"/><path d="M15.6 4.6 L18.6 1.8 M4.4 16 L1.6 18.8" stroke="#b8596a" stroke-width="1.3" stroke-linecap="round"/></svg>
<div style="left:1680.30px;top:745.00px;width:38.50px;height:38.00px;background:#1d1d1d;border-radius:5px 0 0 5px;"></div>
<svg style="left:1688.3px;top:752.5px;" width="23" height="23" viewBox="0 0 23 23"><path d="M2 3.5 H21 V8.5 H2 Z M3.6 8.5 V20.5 H19.4 V8.5" fill="none" stroke="#e0e0e0" stroke-width="1.6" stroke-linejoin="round"/><rect x="8.6" y="12" width="5.8" height="2.4" rx="1.2" fill="#e0e0e0"/></svg>
<div style="left:1680.30px;top:797.70px;width:38.50px;height:38.00px;background:#1d1d1d;border-radius:5px 0 0 5px;"></div>
<svg style="left:1688.3px;top:805.2px;" width="23" height="23" viewBox="0 0 20 20"><path d="M1.5 5.5 V2.5 Q1.5 1.5 2.5 1.5 H5.5 M14.5 1.5 H17.5 Q18.5 1.5 18.5 2.5 V5.5 M18.5 14.5 V17.5 Q18.5 18.5 17.5 18.5 H14.5 M5.5 18.5 H2.5 Q1.5 18.5 1.5 17.5 V14.5" stroke="#c88a58" stroke-width="1.4" fill="none" stroke-linecap="round"/><rect x="5" y="5" width="10" height="10" rx="1" fill="#c88a58"/></svg>
<div style="left:1680.30px;top:837.50px;width:38.50px;height:38.00px;background:#1d1d1d;border-radius:5px 0 0 5px;"></div>
<svg style="left:1688.3px;top:845.0px;" width="23" height="23" viewBox="0 0 23 23"><path d="M16.2 4.6 A8.6 8.6 0 1 0 19.6 13.6" fill="none" stroke="#6488d8" stroke-width="1.6" stroke-linecap="round"/><circle cx="11" cy="12" r="4" fill="#6488d8"/><circle cx="18.4" cy="4.4" r="2.7" fill="#4f6db0"/></svg>
<div style="left:1680.30px;top:877.60px;width:38.50px;height:38.00px;background:#1d1d1d;border-radius:5px 0 0 5px;"></div>
<svg style="left:1688.3px;top:885.1px;" width="23" height="23" viewBox="0 0 23 23"><path d="M3.6 9.4 L14.6 2.6 A3.9 3.9 0 0 1 20.4 7.4 L15.4 18.4 A7.1 7.1 0 1 1 3.6 9.4 Z" fill="none" stroke="#6488d8" stroke-width="1.6" stroke-linejoin="round"/><circle cx="9.2" cy="14" r="4.1" fill="#6488d8"/><circle cx="9.2" cy="14" r="1.5" fill="#1d1d1d"/><circle cx="17.2" cy="5.8" r="1.1" fill="#6488d8"/></svg>
<div style="left:1680.50px;top:917.90px;width:39.00px;height:37.50px;background:#303030;border-radius:5px 0 0 5px;"></div>
<svg style="left:1688.3px;top:924.9px;" width="23" height="23" viewBox="0 0 20 20"><path d="M10 1.8 A6.2 6.2 0 0 1 13.8 12.9 V14.3 H6.2 V12.9 A6.2 6.2 0 0 1 10 1.8 Z" fill="none" stroke="#1fd6a4" stroke-width="1.3"/><path d="M6.6 16.3 H13.4 M7.8 18.4 H12.2" stroke="#1fd6a4" stroke-width="1.3" stroke-linecap="round"/><path d="M7.4 8.2 L8.3 12.3 M12.6 8.2 L11.7 12.3 M7.7 9.6 H12.3" stroke="#1fd6a4" stroke-width="1" fill="none"/></svg>
<svg style="left:1691px;top:983.6px;" width="12" height="10" viewBox="0 0 12 10"><path d="M1 2.5 L6 7 L11 2.5" fill="none" stroke="#5a5a5a" stroke-width="1.5" stroke-linecap="round" stroke-linejoin="round"/></svg>
<div style="left:1687.80px;top:434.90px;width:46.40px;height:29.20px;background:#282828;border-radius:5.7px;border:1px solid #414141;"></div>
<svg style="left:1694px;top:439.5px;" width="22" height="20" viewBox="0 0 22 20"><rect x="1" y="1" width="19" height="8" rx="4" fill="#e6e6e6"/><rect x="1" y="11" width="19" height="8" rx="4" fill="#e6e6e6"/><rect x="10" y="3" width="8" height="4" rx="2" fill="#282828"/><rect x="10" y="13" width="8" height="4" rx="2" fill="#282828"/></svg>
<svg style="left:1719.3px;top:446.3px;" width="10.4" height="8.4" viewBox="0 0 10.4 8.4"><path d="M1 1.7000000000000002 L5.2 6.2 L9.4 1.7000000000000002" fill="none" stroke="#d8d8d8" stroke-width="1.5" stroke-linecap="round" stroke-linejoin="round"/></svg>
<div style="left:1797.90px;top:434.90px;width:174.20px;height:29.20px;background:#1d1d1d;border-radius:5.7px;border:1px solid #343434;"></div>
<svg style="left:1805px;top:439px;" width="21.5" height="21.5" viewBox="0 0 20 20"><circle cx="8" cy="8" r="5.8" fill="none" stroke="#e0e0e0" stroke-width="1.6"/><path d="M12.3 12.3 L18 18" stroke="#e0e0e0" stroke-width="1.8" stroke-linecap="round"/></svg>
<span class="t" style="left:1837px;top:437.5px;line-height:24px;font-size:16.8px;color:#7c7c7c;">搜索</span>
<div style="left:2061.60px;top:434.90px;width:29.10px;height:29.20px;background:#282828;border-radius:5.7px;border:1px solid #414141;"></div>
<svg style="left:2071.1000000000004px;top:446.3px;" width="10.4" height="8.4" viewBox="0 0 10.4 8.4"><path d="M1 1.7000000000000002 L5.2 6.2 L9.4 1.7000000000000002" fill="none" stroke="#d8d8d8" stroke-width="1.5" stroke-linecap="round" stroke-linejoin="round"/></svg>
<svg style="left:1733.8px;top:485px;" width="22.5" height="22.5" viewBox="0 0 20 20"><path d="M1.5 5.5 V2.5 Q1.5 1.5 2.5 1.5 H5.5 M14.5 1.5 H17.5 Q18.5 1.5 18.5 2.5 V5.5 M18.5 14.5 V17.5 Q18.5 18.5 17.5 18.5 H14.5 M5.5 18.5 H2.5 Q1.5 18.5 1.5 17.5 V14.5" stroke="#e0e0e0" stroke-width="1.4" fill="none" stroke-linecap="round"/><rect x="5" y="5" width="10" height="10" rx="1" fill="#e6e6e6"/></svg>
<span class="t" style="left:1770.8px;top:484.0px;line-height:24px;font-size:16.8px;color:#e6e6e6;letter-spacing:0.35px;">点光.001</span>
<svg style="left:1863.0px;top:489.5px;" width="11.0" height="13.0" viewBox="0 0 11.0 13.0"><path d="M3.0 1 L8.0 6.5 L3.0 12.0" fill="none" stroke="#d0d0d0" stroke-width="1.5" stroke-linecap="round" stroke-linejoin="round"/></svg>
<svg style="left:1885.5px;top:484px;" width="24" height="24" viewBox="0 0 20 20"><path d="M7 15.8 A7.2 7.2 0 1 1 13 15.8" fill="none" stroke="#e0e0e0" stroke-width="1.3" stroke-linecap="round"/><circle cx="10" cy="9" r="1.5" fill="#e0e0e0"/><path d="M10 11 V19.5" stroke="#e0e0e0" stroke-width="1.2" stroke-dasharray="2.2 1.4"/></svg>
<span class="t" style="left:1921.8px;top:484.0px;line-height:24px;font-size:16.8px;color:#e6e6e6;letter-spacing:0.35px;">点光.001</span>
<svg style="left:2065px;top:485.5px;" width="21" height="21" viewBox="0 0 20 20"><path d="M11.5 2 L18 8.5 L16.5 9.3 L14.8 9 L11.5 12.3 L11.8 15 L10.5 16 L4 9.5 L5 8.2 L7.7 8.5 L11 5.2 L10.7 3.5 Z" fill="none" stroke="#9a9a9a" stroke-width="1.3" stroke-linejoin="round"/><path d="M7 13 L1.5 18.5" stroke="#9a9a9a" stroke-width="1.3" stroke-linecap="round"/></svg>
<div style="left:1730.60px;top:534.30px;width:360.10px;height:28.60px;background:#1d1d1d;border-radius:5.7px;border:1px solid #3d3d3d;"></div>
<div style="left:1730.60px;top:534.30px;width:46.40px;height:28.60px;background:#282828;border-radius:5px 0 0 5px;border:1px solid #414141;"></div>
<svg style="left:1736px;top:537px;" width="24" height="24" viewBox="0 0 20 20"><path d="M7 15.8 A7.2 7.2 0 1 1 13 15.8" fill="none" stroke="#e0e0e0" stroke-width="1.3" stroke-linecap="round"/><circle cx="10" cy="9" r="1.5" fill="#e0e0e0"/><path d="M10 11 V19.5" stroke="#e0e0e0" stroke-width="1.2" stroke-dasharray="2.2 1.4"/></svg>
<svg style="left:1762.0px;top:545.0px;" width="11.0" height="9.0" viewBox="0 0 11.0 9.0"><path d="M1 2.0 L5.5 6.5 L10.0 2.0" fill="none" stroke="#d8d8d8" stroke-width="1.6" stroke-linecap="round" stroke-linejoin="round"/></svg>
<span class="t" style="left:1788.7px;top:536.5px;line-height:24px;font-size:16.8px;color:#e6e6e6;letter-spacing:0.35px;">点光.001</span>
<div style="left:2061.20px;top:535.50px;width:28.30px;height:26.20px;background:#545454;border-radius:0 4.5px 4.5px 0;"></div>
<svg style="left:2065.5px;top:538.5px;" width="20" height="20" viewBox="0 0 20 20"><path d="M10 1.5 L17.5 4 V9.5 C17.5 14 14.3 17.3 10 18.8 C5.7 17.3 2.5 14 2.5 9.5 V4 Z" fill="none" stroke="#c8c8c8" stroke-width="1.4" stroke-linejoin="round"/></svg>
<div style="left:1729.80px;top:577.00px;width:360.20px;height:35.30px;background:#3a3a3a;border-radius:6px;border:1px solid #434343;"></div>
<svg style="left:1743.8px;top:588.8px;" width="10.4" height="12.4" viewBox="0 0 10.4 12.4"><path d="M2.7 1 L7.7 6.2 L2.7 11.4" fill="none" stroke="#d0d0d0" stroke-width="1.5" stroke-linecap="round" stroke-linejoin="round"/></svg>
<span class="t" style="left:1761.2px;top:583.5px;line-height:24px;font-size:16.8px;color:#e6e6e6;">预览</span>
<svg style="left:2060px;top:592px;" width="17" height="6" viewBox="0 0 17 6"><rect x="0" y="0" width="1.6" height="1.6" fill="#7a7a7a"/><rect x="0" y="4" width="1.6" height="1.6" fill="#7a7a7a"/><rect x="5" y="0" width="1.6" height="1.6" fill="#7a7a7a"/><rect x="5" y="4" width="1.6" height="1.6" fill="#7a7a7a"/><rect x="10" y="0" width="1.6" height="1.6" fill="#7a7a7a"/><rect x="10" y="4" width="1.6" height="1.6" fill="#7a7a7a"/><rect x="15" y="0" width="1.6" height="1.6" fill="#7a7a7a"/><rect x="15" y="4" width="1.6" height="1.6" fill="#7a7a7a"/></svg>
<div style="left:1729.80px;top:615.90px;width:360.20px;height:356.10px;background:#3a3a3a;border-radius:6px;border:1px solid #434343;"></div>
<svg style="left:1742.6px;top:627.5px;" width="12.8" height="10.8" viewBox="0 0 12.8 10.8"><path d="M1 2.9000000000000004 L6.4 7.4 L11.8 2.9000000000000004" fill="none" stroke="#d0d0d0" stroke-width="1.5" stroke-linecap="round" stroke-linejoin="round"/></svg>
<span class="t" style="left:1761.2px;top:622.4px;line-height:24px;font-size:16.8px;color:#e6e6e6;">灯光</span>
<svg style="left:2060px;top:630.9px;" width="17" height="6" viewBox="0 0 17 6"><rect x="0" y="0" width="1.6" height="1.6" fill="#7a7a7a"/><rect x="0" y="4" width="1.6" height="1.6" fill="#7a7a7a"/><rect x="5" y="0" width="1.6" height="1.6" fill="#7a7a7a"/><rect x="5" y="4" width="1.6" height="1.6" fill="#7a7a7a"/><rect x="10" y="0" width="1.6" height="1.6" fill="#7a7a7a"/><rect x="10" y="4" width="1.6" height="1.6" fill="#7a7a7a"/><rect x="15" y="0" width="1.6" height="1.6" fill="#7a7a7a"/><rect x="15" y="4" width="1.6" height="1.6" fill="#7a7a7a"/></svg>
<div style="left:1743.30px;top:664.30px;width:333.40px;height:27.00px;background:#545454;border-radius:5px;"></div>
<div style="left:1743.30px;top:664.30px;width:81.80px;height:27.00px;background:#4772b3;border-radius:5px 0 0 5px;"></div>
<div style="left:1825.20px;top:664.30px;width:0.90px;height:27.00px;background:#3a3a3a;"></div>
<div style="left:1909.30px;top:664.30px;width:0.90px;height:27.00px;background:#3a3a3a;"></div>
<div style="left:1993.60px;top:664.30px;width:0.90px;height:27.00px;background:#3a3a3a;"></div>
<svg style="left:1747.5px;top:666.5px;" width="23.5" height="23.5" viewBox="0 0 20 20"><path d="M7 15.8 A7.2 7.2 0 1 1 13 15.8" fill="none" stroke="#fff" stroke-width="1.3" stroke-linecap="round"/><circle cx="10" cy="9" r="1.5" fill="#fff"/><path d="M10 11 V19.5" stroke="#fff" stroke-width="1.2" stroke-dasharray="2.2 1.4"/></svg>
<span class="t" style="left:1780.6px;top:666.0px;line-height:24px;font-size:16.8px;color:#fff;">点光</span>
<svg style="left:1830.5px;top:667px;" width="22" height="22" viewBox="0 0 22 22"><circle cx="11" cy="11" r="4.2" fill="none" stroke="#d0d0d0" stroke-width="1.4"/><path d="M11 1.5 V4.5 M11 17.5 V20.5 M1.5 11 H4.5 M17.5 11 H20.5 M4.3 4.3 L6.4 6.4 M15.6 15.6 L17.7 17.7 M4.3 17.7 L6.4 15.6 M15.6 6.4 L17.7 4.3" stroke="#d0d0d0" stroke-width="1.4" stroke-linecap="round"/></svg>
<span class="t" style="left:1865px;top:666.0px;line-height:24px;font-size:16.8px;color:#e6e6e6;">日光</span>
<svg style="left:1915.5px;top:667px;" width="22" height="22" viewBox="0 0 22 22"><path d="M6 8 L19 3 L16 17 Q13 19.5 8.5 15.5 Q4.5 11.5 6 8 Z" fill="none" stroke="#d0d0d0" stroke-width="1.4" stroke-linejoin="round"/><path d="M5.5 16.5 L2.5 19.5 M8 18 L7 20.5 M4 14 L1.5 15" stroke="#d0d0d0" stroke-width="1.2" stroke-linecap="round"/></svg>
<span class="t" style="left:1948px;top:666.0px;line-height:24px;font-size:16.8px;color:#e6e6e6;">聚光</span>
<svg style="left:1999px;top:667px;" width="22" height="22" viewBox="0 0 22 22"><path d="M6 3 H14.5 L20 19 H11.5 Z" fill="none" stroke="#d0d0d0" stroke-width="1.4" stroke-linejoin="round"/><circle cx="12.5" cy="11.5" r="1.3" fill="#d0d0d0"/><path d="M9 13 L6.5 14.5 M8.5 16.5 L5 19.5 M6 11 L3 11.5" stroke="#d0d0d0" stroke-width="1.1" stroke-linecap="round" stroke-dasharray="2 1.3"/></svg>
<span class="t" style="left:2032.4px;top:666.0px;line-height:24px;font-size:16.8px;color:#e6e6e6;">面光</span>
<span class="t" style="left:1569px;width:300px;text-align:right;top:701.5px;line-height:24px;font-size:16.8px;color:#e6e6e6;">色温</span>
<div style="left:1884.10px;top:704.00px;width:19.00px;height:19.00px;background:#545454;border-radius:4px;"></div>
<div style="left:1912.80px;top:700.20px;width:135.20px;height:27.00px;background:#484848;border-radius:5px;"></div>
<span class="t" style="left:1912.8px;width:135.2px;text-align:center;top:701.5px;line-height:24px;font-size:16.8px;color:#7e7e7e;letter-spacing:0.5px;">6500 K</span>
<svg style="left:2060.2px;top:710.5px;" width="6" height="6" viewBox="0 0 6 6"><circle cx="3" cy="3" r="2.7" fill="#555"/></svg>
<span class="t" style="left:1558px;width:300px;text-align:right;top:733.5px;line-height:24px;font-size:16.8px;color:#e6e6e6;">颜色</span>
<div style="left:1872.80px;top:731.90px;width:175.20px;height:27.00px;background:#ffffff;border-radius:5px;"></div>
<svg style="left:2060.2px;top:742.5px;" width="6" height="6" viewBox="0 0 6 6"><circle cx="3" cy="3" r="2.7" fill="#e6e6e6"/></svg>
<span class="t" style="left:1558.5px;width:300px;text-align:right;top:785.5px;line-height:24px;font-size:16.8px;color:#e6e6e6;">功率</span>
<div style="left:1873.20px;top:783.90px;width:174.80px;height:27.00px;background:#545454;border-radius:5px;"></div>
<span class="t" style="left:1873.2px;width:174.8px;text-align:center;top:785.5px;line-height:24px;font-size:16.8px;color:#e6e6e6;letter-spacing:0.5px;">3000.000</span>
<svg style="left:2060.2px;top:794.5px;" width="6" height="6" viewBox="0 0 6 6"><circle cx="3" cy="3" r="2.7" fill="#e6e6e6"/></svg>
<span class="t" style="left:1558.5px;width:300px;text-align:right;top:817.5px;line-height:24px;font-size:16.8px;color:#e6e6e6;">曝光度</span>
<div style="left:1873.20px;top:815.90px;width:174.80px;height:27.00px;background:#545454;border-radius:5px;"></div>
<div style="left:1873.20px;top:815.90px;width:85.80px;height:27.00px;background:#4772b3;border-radius:5px 0 0 5px;"></div>
<span class="t" style="left:1873.2px;width:174.8px;text-align:center;top:817.5px;line-height:24px;font-size:16.8px;color:#e6e6e6;letter-spacing:0.5px;">0.000</span>
<svg style="left:2060.2px;top:826.5px;" width="6" height="6" viewBox="0 0 6 6"><circle cx="3" cy="3" r="2.7" fill="#e6e6e6"/></svg>
<div style="left:1873.20px;top:852.20px;width:19.00px;height:19.00px;background:#4772b3;border-radius:4px;"></div>
<svg style="left:1875.7px;top:855.2px;" width="14" height="13" viewBox="0 0 14 13"><path d="M2 7 L5.5 10.5 L12 2.5" fill="none" stroke="#fff" stroke-width="2.3" stroke-linecap="round" stroke-linejoin="round"/></svg>
<span class="t" style="left:1897px;top:849.5px;line-height:24px;font-size:16.8px;color:#e6e6e6;">规格化</span>
<span class="t" style="left:1558.5px;width:300px;text-align:right;top:901.5px;line-height:24px;font-size:16.8px;color:#e6e6e6;">半径</span>
<div style="left:1873.20px;top:900.00px;width:174.80px;height:27.00px;background:#545454;border-radius:5px;"></div>
<span class="t" style="left:1873.2px;width:174.8px;text-align:center;top:901.5px;line-height:24px;font-size:16.8px;color:#e6e6e6;letter-spacing:0.5px;">5 m</span>
<svg style="left:2060.2px;top:910.5px;" width="6" height="6" viewBox="0 0 6 6"><circle cx="3" cy="3" r="2.7" fill="#e6e6e6"/></svg>
<div style="left:1873.20px;top:936.00px;width:19.00px;height:19.00px;background:#4772b3;border-radius:4px;"></div>
<svg style="left:1875.7px;top:939px;" width="14" height="13" viewBox="0 0 14 13"><path d="M2 7 L5.5 10.5 L12 2.5" fill="none" stroke="#fff" stroke-width="2.3" stroke-linecap="round" stroke-linejoin="round"/></svg>
<span class="t" style="left:1897px;top:933.5px;line-height:24px;font-size:16.8px;color:#e6e6e6;">软衰减</span>
<svg style="left:2060.2px;top:942.5px;" width="6" height="6" viewBox="0 0 6 6"><circle cx="3" cy="3" r="2.7" fill="#e6e6e6"/></svg>
<div style="left:1729.80px;top:974.30px;width:360.20px;height:35.50px;background:#3a3a3a;border-radius:6px;border:1px solid #434343;"></div>
<svg style="left:1743.8px;top:986.0999999999999px;" width="10.4" height="12.4" viewBox="0 0 10.4 12.4"><path d="M2.7 1 L7.7 6.2 L2.7 11.4" fill="none" stroke="#d0d0d0" stroke-width="1.5" stroke-linecap="round" stroke-linejoin="round"/></svg>
<span class="t" style="left:1761.2px;top:980.8px;line-height:24px;font-size:16.8px;color:#e6e6e6;">设置</span>
<svg style="left:2060px;top:989.3px;" width="17" height="6" viewBox="0 0 17 6"><rect x="0" y="0" width="1.6" height="1.6" fill="#7a7a7a"/><rect x="0" y="4" width="1.6" height="1.6" fill="#7a7a7a"/><rect x="5" y="0" width="1.6" height="1.6" fill="#7a7a7a"/><rect x="5" y="4" width="1.6" height="1.6" fill="#7a7a7a"/><rect x="10" y="0" width="1.6" height="1.6" fill="#7a7a7a"/><rect x="10" y="4" width="1.6" height="1.6" fill="#7a7a7a"/><rect x="15" y="0" width="1.6" height="1.6" fill="#7a7a7a"/><rect x="15" y="4" width="1.6" height="1.6" fill="#7a7a7a"/></svg>
<div style="left:1729.80px;top:1012.50px;width:360.20px;height:88.10px;background:#3a3a3a;border-radius:6px;border:1px solid #434343;"></div>
<svg style="left:1742.6px;top:1024.1px;" width="12.8" height="10.8" viewBox="0 0 12.8 10.8"><path d="M1 2.9000000000000004 L6.4 7.4 L11.8 2.9000000000000004" fill="none" stroke="#d0d0d0" stroke-width="1.5" stroke-linecap="round" stroke-linejoin="round"/></svg>
<span class="t" style="left:1761.2px;top:1019.0px;line-height:24px;font-size:16.8px;color:#e6e6e6;">节点</span>
<svg style="left:2060px;top:1027.5px;" width="17" height="6" viewBox="0 0 17 6"><rect x="0" y="0" width="1.6" height="1.6" fill="#7a7a7a"/><rect x="0" y="4" width="1.6" height="1.6" fill="#7a7a7a"/><rect x="5" y="0" width="1.6" height="1.6" fill="#7a7a7a"/><rect x="5" y="4" width="1.6" height="1.6" fill="#7a7a7a"/><rect x="10" y="0" width="1.6" height="1.6" fill="#7a7a7a"/><rect x="10" y="4" width="1.6" height="1.6" fill="#7a7a7a"/><rect x="15" y="0" width="1.6" height="1.6" fill="#7a7a7a"/><rect x="15" y="4" width="1.6" height="1.6" fill="#7a7a7a"/></svg>
<div style="left:1742.60px;top:1061.20px;width:334.20px;height:27.00px;background:#545454;border-radius:5px;"></div>
<svg style="left:1748.5px;top:1064.5px;" width="21" height="21" viewBox="0 0 20 20"><rect x="1.5" y="2.5" width="11" height="6.5" rx="1.5" fill="#e6e6e6"/><rect x="1.5" y="11" width="11" height="6.5" rx="1.5" fill="#e6e6e6"/><path d="M14 5.5 H16 Q18 5.5 18 7.5 V13 Q18 14.5 16 14.5 H14.5 M16 12.5 L14 14.5 L16 16.5" stroke="#e6e6e6" stroke-width="1.3" fill="none" stroke-linecap="round" stroke-linejoin="round"/></svg>
<span class="t" style="left:1770px;width:306px;text-align:center;top:1062.5px;line-height:24px;font-size:16.8px;color:#e6e6e6;">使用节点</span>
<div style="left:1729.80px;top:1103.70px;width:360.20px;height:116.60px;background:#3a3a3a;border-radius:6px;border:1px solid #434343;"></div>
<svg style="left:1742.6px;top:1115.3px;" width="12.8" height="10.8" viewBox="0 0 12.8 10.8"><path d="M1 2.9000000000000004 L6.4 7.4 L11.8 2.9000000000000004" fill="none" stroke="#d0d0d0" stroke-width="1.5" stroke-linecap="round" stroke-linejoin="round"/></svg>
<span class="t" style="left:1761.2px;top:1110.2px;line-height:24px;font-size:16.8px;color:#e6e6e6;">动画</span>
<svg style="left:2060px;top:1118.7px;" width="17" height="6" viewBox="0 0 17 6"><rect x="0" y="0" width="1.6" height="1.6" fill="#7a7a7a"/><rect x="0" y="4" width="1.6" height="1.6" fill="#7a7a7a"/><rect x="5" y="0" width="1.6" height="1.6" fill="#7a7a7a"/><rect x="5" y="4" width="1.6" height="1.6" fill="#7a7a7a"/><rect x="10" y="0" width="1.6" height="1.6" fill="#7a7a7a"/><rect x="10" y="4" width="1.6" height="1.6" fill="#7a7a7a"/><rect x="15" y="0" width="1.6" height="1.6" fill="#7a7a7a"/><rect x="15" y="4" width="1.6" height="1.6" fill="#7a7a7a"/></svg>
<span class="t" style="left:1743.4px;top:1153.0px;line-height:24px;font-size:16.8px;color:#e6e6e6;">灯光</span>
<div style="left:1742.60px;top:1180.90px;width:334.20px;height:27.00px;background:#545454;border-radius:5px;"></div>
<div style="left:1741.90px;top:1180.20px;width:46.60px;height:28.40px;background:#1d1d1d;border-radius:5px 0 0 5px;border:1px solid #3d3d3d;"></div>
<svg style="left:1747px;top:1184px;" width="24" height="21" viewBox="0 0 24 21"><path d="M4.5 1.5 L7.5 4.5 L4.5 7.5 L1.5 4.5 Z M19.5 1.5 L22.5 4.5 L19.5 7.5 L16.5 4.5 Z" fill="#e6e6e6"/><path d="M8 1.5 H16 L13.5 4.5 L16 7.5 H8 L10.5 4.5 Z" fill="#e6e6e6"/><path d="M12 10.5 L16.5 15 L12 19.5 L7.5 15 Z" fill="none" stroke="#e6e6e6" stroke-width="1.3"/></svg>
<svg style="left:1773.3px;top:1191.3px;" width="10.4" height="8.4" viewBox="0 0 10.4 8.4"><path d="M1 1.7000000000000002 L5.2 6.2 L9.4 1.7000000000000002" fill="none" stroke="#d8d8d8" stroke-width="1.5" stroke-linecap="round" stroke-linejoin="round"/></svg>
<svg style="left:1797px;top:1187px;" width="15" height="15" viewBox="0 0 15 15"><path d="M7.5 0.5 V14.5 M0.5 7.5 H14.5" stroke="#e6e6e6" stroke-width="1.5"/></svg>
<span class="t" style="left:1813px;width:264.5px;text-align:center;top:1182.5px;line-height:24px;font-size:16.8px;color:#e6e6e6;">新建</span>
<div style="left:1729.80px;top:1223.40px;width:360.20px;height:36.60px;background:#3a3a3a;border-radius:6px;border:1px solid #434343;"></div>
<svg style="left:1743.8px;top:1235.2px;" width="10.4" height="12.4" viewBox="0 0 10.4 12.4"><path d="M2.7 1 L7.7 6.2 L2.7 11.4" fill="none" stroke="#d0d0d0" stroke-width="1.5" stroke-linecap="round" stroke-linejoin="round"/></svg>
<span class="t" style="left:1761.2px;top:1229.9px;line-height:24px;font-size:16.8px;color:#e6e6e6;">自定义属性</span>
<svg style="left:2060px;top:1238.4px;" width="17" height="6" viewBox="0 0 17 6"><rect x="0" y="0" width="1.6" height="1.6" fill="#7a7a7a"/><rect x="0" y="4" width="1.6" height="1.6" fill="#7a7a7a"/><rect x="5" y="0" width="1.6" height="1.6" fill="#7a7a7a"/><rect x="5" y="4" width="1.6" height="1.6" fill="#7a7a7a"/><rect x="10" y="0" width="1.6" height="1.6" fill="#7a7a7a"/><rect x="10" y="4" width="1.6" height="1.6" fill="#7a7a7a"/><rect x="15" y="0" width="1.6" height="1.6" fill="#7a7a7a"/><rect x="15" y="4" width="1.6" height="1.6" fill="#7a7a7a"/></svg>
<div style="left:2093.70px;top:471.00px;width:4.20px;height:724.00px;background:#4d4d4d;border-radius:2px;"></div>
</div>
<div style="left:0;top:0;width:427.2px;height:805px;border-radius:8px;box-shadow:inset 0 0 0 1px rgba(255,255,255,0.06);"></div>
</div>
<div style="left:3px;top:1152px;width:1667px;height:83.6px;background:#1d1d1d;border-radius:8px;overflow:hidden;">
<div style="left:-3px;top:-1152px;width:0;height:0">
<div style="left:3.00px;top:1152.00px;width:1667.00px;height:38.50px;background:#2e2e2e;"></div>
<div style="left:3.00px;top:1225.00px;width:1667.00px;height:11.00px;background:#262626;"></div>
<div style="left:65.39px;top:1225.00px;width:1542.31px;height:11.00px;background:#313131;"></div>
<svg style="left:0px;top:1225px;" width="2106" height="11" viewBox="0 0 2106 11"><rect x="22.0" y="0" width="1.1" height="11" fill="#1e1e1e"/><rect x="59.2" y="0" width="1.1" height="11" fill="#1e1e1e"/><rect x="96.4" y="0" width="1.1" height="11" fill="#1e1e1e"/><rect x="133.5" y="0" width="1.1" height="11" fill="#1e1e1e"/><rect x="170.7" y="0" width="1.1" height="11" fill="#1e1e1e"/><rect x="207.9" y="0" width="1.1" height="11" fill="#1e1e1e"/><rect x="245.0" y="0" width="1.1" height="11" fill="#1e1e1e"/><rect x="282.2" y="0" width="1.1" height="11" fill="#1e1e1e"/><rect x="319.3" y="0" width="1.1" height="11" fill="#1e1e1e"/><rect x="356.5" y="0" width="1.1" height="11" fill="#1e1e1e"/><rect x="393.7" y="0" width="1.1" height="11" fill="#1e1e1e"/><rect x="430.8" y="0" width="1.1" height="11" fill="#1e1e1e"/><rect x="468.0" y="0" width="1.1" height="11" fill="#1e1e1e"/><rect x="505.2" y="0" width="1.1" height="11" fill="#1e1e1e"/><rect x="542.3" y="0" width="1.1" height="11" fill="#1e1e1e"/><rect x="579.5" y="0" width="1.1" height="11" fill="#1e1e1e"/><rect x="616.7" y="0" width="1.1" height="11" fill="#1e1e1e"/><rect x="653.8" y="0" width="1.1" height="11" fill="#1e1e1e"/><rect x="691.0" y="0" width="1.1" height="11" fill="#1e1e1e"/><rect x="728.2" y="0" width="1.1" height="11" fill="#1e1e1e"/><rect x="765.3" y="0" width="1.1" height="11" fill="#1e1e1e"/><rect x="802.5" y="0" width="1.1" height="11" fill="#1e1e1e"/><rect x="839.6" y="0" width="1.1" height="11" fill="#1e1e1e"/><rect x="876.8" y="0" width="1.1" height="11" fill="#1e1e1e"/><rect x="914.0" y="0" width="1.1" height="11" fill="#1e1e1e"/><rect x="951.1" y="0" width="1.1" height="11" fill="#1e1e1e"/><rect x="988.3" y="0" width="1.1" height="11" fill="#1e1e1e"/><rect x="1025.5" y="0" width="1.1" height="11" fill="#1e1e1e"/><rect x="1062.6" y="0" width="1.1" height="11" fill="#1e1e1e"/><rect x="1099.8" y="0" width="1.1" height="11" fill="#1e1e1e"/><rect x="1137.0" y="0" width="1.1" height="11" fill="#1e1e1e"/><rect x="1174.1" y="0" width="1.1" height="11" fill="#1e1e1e"/><rect x="1211.3" y="0" width="1.1" height="11" fill="#1e1e1e"/><rect x="1248.4" y="0" width="1.1" height="11" fill="#1e1e1e"/><rect x="1285.6" y="0" width="1.1" height="11" fill="#1e1e1e"/><rect x="1322.8" y="0" width="1.1" height="11" fill="#1e1e1e"/><rect x="1359.9" y="0" width="1.1" height="11" fill="#1e1e1e"/><rect x="1397.1" y="0" width="1.1" height="11" fill="#1e1e1e"/><rect x="1434.3" y="0" width="1.1" height="11" fill="#1e1e1e"/><rect x="1471.4" y="0" width="1.1" height="11" fill="#1e1e1e"/><rect x="1508.6" y="0" width="1.1" height="11" fill="#1e1e1e"/><rect x="1545.8" y="0" width="1.1" height="11" fill="#1e1e1e"/><rect x="1582.9" y="0" width="1.1" height="11" fill="#1e1e1e"/><rect x="1620.1" y="0" width="1.1" height="11" fill="#1e1e1e"/><rect x="1657.3" y="0" width="1.1" height="11" fill="#1e1e1e"/><rect x="1694.4" y="0" width="1.1" height="11" fill="#1e1e1e"/><rect x="65.4" y="0" width="1.1" height="11" fill="#1e1e1e"/><rect x="1607.7" y="0" width="1.1" height="11" fill="#1e1e1e"/></svg>
<svg style="left:14px;top:1226.5px;" width="8" height="8" viewBox="0 0 8 8"><circle cx="4" cy="4" r="2.6" fill="none" stroke="#3a3a3a" stroke-width="1.2"/></svg>
<span class="t" style="left:29.200000000000003px;width:60px;text-align:center;top:1196.5px;line-height:24px;font-size:17px;color:#9c9c9c;letter-spacing:0.9px;">0</span>
<span class="t" style="left:103.52800000000002px;width:60px;text-align:center;top:1196.5px;line-height:24px;font-size:17px;color:#9c9c9c;letter-spacing:0.9px;">12</span>
<span class="t" style="left:177.856px;width:60px;text-align:center;top:1196.5px;line-height:24px;font-size:17px;color:#9c9c9c;letter-spacing:0.9px;">24</span>
<span class="t" style="left:252.18400000000003px;width:60px;text-align:center;top:1196.5px;line-height:24px;font-size:17px;color:#9c9c9c;letter-spacing:0.9px;">36</span>
<span class="t" style="left:326.512px;width:60px;text-align:center;top:1196.5px;line-height:24px;font-size:17px;color:#9c9c9c;letter-spacing:0.9px;">48</span>
<span class="t" style="left:400.84px;width:60px;text-align:center;top:1196.5px;line-height:24px;font-size:17px;color:#9c9c9c;letter-spacing:0.9px;">60</span>
<span class="t" style="left:475.168px;width:60px;text-align:center;top:1196.5px;line-height:24px;font-size:17px;color:#9c9c9c;letter-spacing:0.9px;">72</span>
<span class="t" style="left:549.4960000000001px;width:60px;text-align:center;top:1196.5px;line-height:24px;font-size:17px;color:#9c9c9c;letter-spacing:0.9px;">84</span>
<span class="t" style="left:623.8240000000001px;width:60px;text-align:center;top:1196.5px;line-height:24px;font-size:17px;color:#9c9c9c;letter-spacing:0.9px;">96</span>
<span class="t" style="left:698.152px;width:60px;text-align:center;top:1196.5px;line-height:24px;font-size:17px;color:#9c9c9c;letter-spacing:0.9px;">108</span>
<span class="t" style="left:772.48px;width:60px;text-align:center;top:1196.5px;line-height:24px;font-size:17px;color:#9c9c9c;letter-spacing:0.9px;">120</span>
<span class="t" style="left:846.808px;width:60px;text-align:center;top:1196.5px;line-height:24px;font-size:17px;color:#9c9c9c;letter-spacing:0.9px;">132</span>
<span class="t" style="left:921.1360000000001px;width:60px;text-align:center;top:1196.5px;line-height:24px;font-size:17px;color:#9c9c9c;letter-spacing:0.9px;">144</span>
<span class="t" style="left:995.4639999999999px;width:60px;text-align:center;top:1196.5px;line-height:24px;font-size:17px;color:#9c9c9c;letter-spacing:0.9px;">156</span>
<span class="t" style="left:1069.7920000000001px;width:60px;text-align:center;top:1196.5px;line-height:24px;font-size:17px;color:#9c9c9c;letter-spacing:0.9px;">168</span>
<span class="t" style="left:1144.1200000000001px;width:60px;text-align:center;top:1196.5px;line-height:24px;font-size:17px;color:#9c9c9c;letter-spacing:0.9px;">180</span>
<span class="t" style="left:1218.448px;width:60px;text-align:center;top:1196.5px;line-height:24px;font-size:17px;color:#9c9c9c;letter-spacing:0.9px;">192</span>
<span class="t" style="left:1292.776px;width:60px;text-align:center;top:1196.5px;line-height:24px;font-size:17px;color:#9c9c9c;letter-spacing:0.9px;">204</span>
<span class="t" style="left:1367.104px;width:60px;text-align:center;top:1196.5px;line-height:24px;font-size:17px;color:#9c9c9c;letter-spacing:0.9px;">216</span>
<span class="t" style="left:1441.432px;width:60px;text-align:center;top:1196.5px;line-height:24px;font-size:17px;color:#9c9c9c;letter-spacing:0.9px;">228</span>
<span class="t" style="left:1515.76px;width:60px;text-align:center;top:1196.5px;line-height:24px;font-size:17px;color:#9c9c9c;letter-spacing:0.9px;">240</span>
<span class="t" style="left:1590.088px;width:60px;text-align:center;top:1196.5px;line-height:24px;font-size:17px;color:#9c9c9c;letter-spacing:0.9px;">252</span>
<div style="left:615.66px;top:1222.00px;width:2.00px;height:13.00px;background:#4772b3;"></div>
<div style="left:599.90px;top:1193.20px;width:33.50px;height:29.20px;background:#4772b3;border-radius:5px;"></div>
<svg style="left:608px;top:1220px;" width="17" height="8" viewBox="0 0 17 8"><path d="M0 0 H17 L8.5 7 Z" fill="#4772b3"/></svg>
<span class="t" style="left:599.9px;width:33.5px;text-align:center;top:1196.0px;line-height:24px;font-size:16.8px;color:#fff;letter-spacing:0.6px;">90</span>
<div style="left:14.10px;top:1156.50px;width:47.20px;height:29.20px;background:#282828;border-radius:5.7px;border:1px solid #414141;"></div>
<svg style="left:21px;top:1160.5px;" width="21" height="21" viewBox="0 0 21 21"><circle cx="10.5" cy="10.5" r="10" fill="#e6e6e6"/><path d="M10.5 10.5 L14.5 5 M10.5 10.5 L14 15.5" stroke="#282828" stroke-width="2.2" stroke-linecap="round"/></svg>
<svg style="left:46.3px;top:1167.8px;" width="10.4" height="8.4" viewBox="0 0 10.4 8.4"><path d="M1 1.7000000000000002 L5.2 6.2 L9.4 1.7000000000000002" fill="none" stroke="#d8d8d8" stroke-width="1.5" stroke-linecap="round" stroke-linejoin="round"/></svg>
<span class="t" style="left:79.5px;top:1160.0px;line-height:24px;font-size:16.8px;color:#e6e6e6;">视图</span>
<span class="t" style="left:134.7px;top:1160.0px;line-height:24px;font-size:16.8px;color:#e6e6e6;">标记</span>
<div style="left:186.60px;top:1156.50px;width:71.40px;height:29.20px;background:#282828;border-radius:5.7px;border:1px solid #414141;"></div>
<span class="t" style="left:199px;top:1160.0px;line-height:24px;font-size:16.8px;color:#e6e6e6;">回放</span>
<svg style="left:243.20000000000002px;top:1167.8px;" width="10.4" height="8.4" viewBox="0 0 10.4 8.4"><path d="M1 1.7000000000000002 L5.2 6.2 L9.4 1.7000000000000002" fill="none" stroke="#d8d8d8" stroke-width="1.5" stroke-linecap="round" stroke-linejoin="round"/></svg>
<div style="left:621.50px;top:1157.60px;width:57.20px;height:28.60px;background:#282828;border-radius:5.7px;border:1px solid #414141;"></div>
<div style="left:622.70px;top:1158.80px;width:27.50px;height:26.20px;background:#3d3d3d;border-radius:4.5px 0 0 4.5px;"></div>
<svg style="left:627.5px;top:1164px;" width="16" height="16" viewBox="0 0 16 16"><circle cx="8" cy="8" r="6.6" fill="none" stroke="#9a9a9a" stroke-width="1.3"/></svg>
<svg style="left:659.3px;top:1168.8px;" width="10.4" height="8.4" viewBox="0 0 10.4 8.4"><path d="M1 1.7000000000000002 L5.2 6.2 L9.4 1.7000000000000002" fill="none" stroke="#5a5a5a" stroke-width="1.5" stroke-linecap="round" stroke-linejoin="round"/></svg>
<div style="left:685.90px;top:1157.60px;width:173.80px;height:28.60px;background:#545454;border-radius:5.7px;border:1px solid #414141;"></div>
<div style="left:715.33px;top:1158.80px;width:0.80px;height:26.20px;background:#3d3d3d;"></div>
<div style="left:744.07px;top:1158.80px;width:0.80px;height:26.20px;background:#3d3d3d;"></div>
<div style="left:772.80px;top:1158.80px;width:0.80px;height:26.20px;background:#3d3d3d;"></div>
<div style="left:801.53px;top:1158.80px;width:0.80px;height:26.20px;background:#3d3d3d;"></div>
<div style="left:830.27px;top:1158.80px;width:0.80px;height:26.20px;background:#3d3d3d;"></div>
<svg style="left:691.9666666666667px;top:1163px;" width="18" height="18" viewBox="0 0 18 18"><rect x="1.5" y="2.5" width="2.6" height="13" fill="#e6e6e6"/><path d="M16 2.5 V15.5 L6 9 Z" fill="#e6e6e6"/></svg>
<svg style="left:720.7px;top:1163px;" width="18" height="18" viewBox="0 0 18 18"><path d="M5 3.5 L10 9 L5 14.5 L0 9 Z" fill="#e6e6e6"/><path d="M18 2.5 V15.5 L10 9 Z" fill="#e6e6e6"/></svg>
<svg style="left:749.4333333333334px;top:1163px;" width="18" height="18" viewBox="0 0 18 18"><path d="M15 2 V16 L3 9 Z" fill="#e6e6e6"/></svg>
<svg style="left:778.1666666666667px;top:1163px;" width="18" height="18" viewBox="0 0 18 18"><path d="M3 2 V16 L15 9 Z" fill="#e6e6e6"/></svg>
<svg style="left:806.9px;top:1163px;" width="18" height="18" viewBox="0 0 18 18"><path d="M13 3.5 L18 9 L13 14.5 L8 9 Z" fill="#e6e6e6"/><path d="M0 2.5 V15.5 L8 9 Z" fill="#e6e6e6"/></svg>
<svg style="left:835.6333333333333px;top:1163px;" width="18" height="18" viewBox="0 0 18 18"><rect x="13.9" y="2.5" width="2.6" height="13" fill="#e6e6e6"/><path d="M2 2.5 V15.5 L12 9 Z" fill="#e6e6e6"/></svg>
<div style="left:866.70px;top:1157.60px;width:87.60px;height:28.60px;background:#282828;border-radius:5.7px;border:1px solid #414141;"></div>
<div style="left:867.90px;top:1158.80px;width:56.50px;height:26.20px;background:#545454;border-radius:4.5px 0 0 4.5px;"></div>
<div style="left:895.80px;top:1158.80px;width:0.80px;height:26.20px;background:#3d3d3d;"></div>
<svg style="left:873px;top:1163px;" width="18" height="18" viewBox="0 0 18 18"><path d="M9.5 3 V15 L1 9 Z" fill="#e6e6e6"/><rect x="11.5" y="3" width="2.4" height="12" fill="#e6e6e6"/></svg>
<svg style="left:901px;top:1163px;" width="18" height="18" viewBox="0 0 18 18"><rect x="4" y="3" width="2.4" height="12" fill="#e6e6e6"/><path d="M8.5 3 V15 L17 9 Z" fill="#e6e6e6"/></svg>
<svg style="left:933.8px;top:1168.8px;" width="10.4" height="8.4" viewBox="0 0 10.4 8.4"><path d="M1 1.7000000000000002 L5.2 6.2 L9.4 1.7000000000000002" fill="none" stroke="#d8d8d8" stroke-width="1.5" stroke-linecap="round" stroke-linejoin="round"/></svg>
<div style="left:960.90px;top:1157.60px;width:58.40px;height:28.60px;background:#282828;border-radius:5.7px;border:1px solid #414141;"></div>
<div style="left:962.10px;top:1158.80px;width:27.80px;height:26.20px;background:#545454;border-radius:4.5px 0 0 4.5px;"></div>
<svg style="left:966px;top:1162.5px;" width="20" height="19" viewBox="0 0 20 19"><path d="M3.5 14.5 V9 A6.5 6.5 0 0 1 16.5 9 V14.5 M6.8 14.5 V9.5 A3.2 3.2 0 0 1 13.2 9.5 V14.5 M1 17.5 H19" fill="none" stroke="#b4b4b4" stroke-width="1.3"/></svg>
<svg style="left:998.8px;top:1168.8px;" width="10.4" height="8.4" viewBox="0 0 10.4 8.4"><path d="M1 1.7000000000000002 L5.2 6.2 L9.4 1.7000000000000002" fill="none" stroke="#d8d8d8" stroke-width="1.5" stroke-linecap="round" stroke-linejoin="round"/></svg>
<div style="left:1177.30px;top:1157.60px;width:107.90px;height:28.60px;background:#545454;border-radius:5.7px;border:1px solid #414141;"></div>
<span class="t" style="left:1178px;width:106.5px;text-align:center;top:1160.0px;line-height:24px;font-size:16.8px;color:#e6e6e6;letter-spacing:0.6px;">90</span>
<div style="left:1292.30px;top:1157.60px;width:285.40px;height:28.60px;background:#545454;border-radius:5.7px;border:1px solid #414141;"></div>
<div style="left:1293.50px;top:1158.80px;width:27.00px;height:26.20px;background:#3d3d3d;border-radius:4.5px 0 0 4.5px;"></div>
<svg style="left:1296.5px;top:1161px;" width="21" height="22" viewBox="0 0 21 22"><circle cx="10.5" cy="12.5" r="7.6" fill="none" stroke="#d6d6d6" stroke-width="1.4"/><path d="M10.5 8 V12.5 H14 M8 2 H13 M10.5 2 V4.5 M16 5.5 L18 7.5" fill="none" stroke="#d6d6d6" stroke-width="1.4" stroke-linecap="round"/></svg>
<div style="left:1448.30px;top:1158.80px;width:0.90px;height:26.20px;background:#3d3d3d;"></div>
<span class="t" style="left:1343.5px;top:1160.0px;line-height:24px;font-size:16.8px;color:#e6e6e6;">起始</span>
<span class="t" style="left:1129.5px;width:300px;text-align:right;top:1160.0px;line-height:24px;font-size:16.8px;color:#e6e6e6;">1</span>
<span class="t" style="left:1472.2px;top:1160.0px;line-height:24px;font-size:16.8px;color:#e6e6e6;">结束</span>
<span class="t" style="left:1256px;width:300px;text-align:right;top:1160.0px;line-height:24px;font-size:16.8px;color:#e6e6e6;letter-spacing:0.6px;">250</span>
<div style="left:1600.30px;top:1157.60px;width:57.40px;height:28.60px;background:#282828;border-radius:5.7px;border:1px solid #414141;"></div>
<div style="left:1601.50px;top:1158.80px;width:27.00px;height:26.20px;background:#4772b3;border-radius:4.5px 0 0 4.5px;"></div>
<svg style="left:1605px;top:1162px;" width="20" height="20" viewBox="0 0 20 20"><circle cx="11.5" cy="8.5" r="7" fill="#fff"/><circle cx="7.5" cy="12.5" r="5.6" fill="#4772b3" stroke="#fff" stroke-width="1.4"/><path d="M7.5 8.3 A4.3 4.3 0 0 1 11.8 12.5 A5 5 0 0 0 7.5 8.3Z" fill="#4772b3"/></svg>
<svg style="left:1637.3px;top:1168.8px;" width="10.4" height="8.4" viewBox="0 0 10.4 8.4"><path d="M1 1.7000000000000002 L5.2 6.2 L9.4 1.7000000000000002" fill="none" stroke="#d8d8d8" stroke-width="1.5" stroke-linecap="round" stroke-linejoin="round"/></svg>
</div>
<div style="left:0;top:0;width:1667px;height:83.6px;border-radius:8px;box-shadow:inset 0 0 0 1px rgba(255,255,255,0.06);"></div>
</div>
<svg style="left:9.5px;top:1242px;" width="17" height="24" viewBox="0 0 17 24"><rect x="1" y="1" width="15" height="22" rx="5.5" fill="none" stroke="#d0d0d0" stroke-width="1.4"/><path d="M1.5 10 V6 Q1.5 1.5 6 1.5 H8 V10 Z" fill="#d0d0d0"/></svg>
<span class="t" style="left:27.8px;top:1243.0px;line-height:24px;font-size:16.8px;color:#9c9c9c;">选择（列表）</span>
<svg style="left:145.5px;top:1242px;" width="17" height="24" viewBox="0 0 17 24"><rect x="1" y="1" width="15" height="22" rx="5.5" fill="none" stroke="#d0d0d0" stroke-width="1.4"/><rect x="6" y="3" width="5" height="9" rx="2.3" fill="#d0d0d0"/></svg>
<span class="t" style="left:164px;top:1243.0px;line-height:24px;font-size:16.8px;color:#9c9c9c;">视图中心对齐鼠标</span>
<span class="t" style="left:1786.5px;width:300px;text-align:right;top:1242.5px;line-height:24px;font-size:16.8px;color:#9c9c9c;letter-spacing:0.6px;">5.0.0</span>
<svg style="left:0px;top:1259px;" width="12" height="12" viewBox="0 0 12 12"><path d="M0 0 Q0 12 12 12 H0 Z" fill="#7a4fb8"/></svg>
<svg style="left:2094px;top:1259px;" width="12" height="12" viewBox="0 0 12 12"><path d="M12 0 Q12 12 0 12 H12 Z" fill="#6a45a8"/></svg>
<svg style="left:0;top:0" width="2106" height="1271" viewBox="0 0 2106 1271"><defs><linearGradient id="bkg" x1="0.15" y1="0" x2="0.75" y2="1"><stop offset="0" stop-color="#72cfe6"/><stop offset="0.5" stop-color="#a9b2ea"/><stop offset="0.8" stop-color="#d9a6dc"/><stop offset="1" stop-color="#f29ac8"/></linearGradient></defs><circle cx="2089.5" cy="184.8" r="33.300000000000004" fill="#ffffff" fill-opacity="0.3" stroke="url(#bkg)" stroke-width="5.6"/><path d="M2074.2 171.1 L2085.4 176.3 L2103.6 170.3 M2069.4 179.4 L2084.1 187.1 L2083.7 203.6 M2094.5 203.6 L2094.9 187.1 L2108 181" fill="none" stroke="#000" stroke-width="5.2" stroke-linecap="round" stroke-linejoin="round"/></svg>
</div></body></html>
